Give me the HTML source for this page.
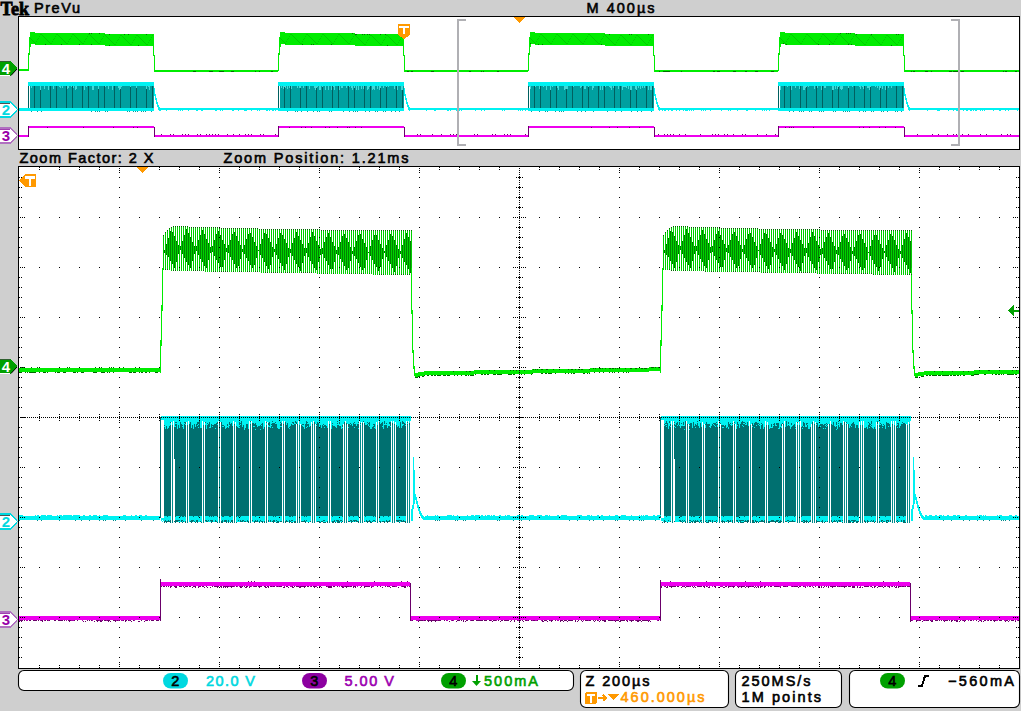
<!DOCTYPE html>
<html><head><meta charset="utf-8"><style>
html,body{margin:0;padding:0;background:#cfcfcf;width:1021px;height:711px;overflow:hidden}
svg{display:block}
</style></head><body>
<svg width="1021" height="711" viewBox="0 0 1021 711" shape-rendering="crispEdges">
<rect x="18" y="16" width="1002" height="134" fill="#000"/>
<rect x="19" y="17" width="1000" height="132" fill="#fff"/>
<rect x="18" y="166" width="1002" height="503" fill="#000"/>
<rect x="19" y="167" width="1000" height="501" fill="#fff"/>
<path d="M164 250h1v3h-1zM166 244h1v11h-1zM168 238h1v19h-1zM170 231h1v30h-1zM172 232h1v32h-1zM174 236h1v32h-1zM176 241h1v21h-1zM178 245h1v9h-1zM180 246h1v4h-1zM182 241h1v13h-1zM184 235h1v23h-1zM186 229h1v33h-1zM188 233h1v32h-1zM190 237h1v31h-1zM192 242h1v19h-1zM194 246h1v8h-1zM196 246h1v5h-1zM198 240h1v15h-1zM200 235h1v24h-1zM202 230h1v32h-1zM204 234h1v32h-1zM206 239h1v29h-1zM208 243h1v17h-1zM210 247h1v6h-1zM212 246h1v6h-1zM214 240h1v16h-1zM216 234h1v26h-1zM218 231h1v32h-1zM220 235h1v32h-1zM222 240h1v27h-1zM224 244h1v16h-1zM226 248h1v4h-1zM228 245h1v8h-1zM230 240h1v17h-1zM232 234h1v26h-1zM234 232h1v32h-1zM236 236h1v32h-1zM238 241h1v25h-1zM240 245h1v14h-1zM242 249h1v3h-1zM244 245h1v9h-1zM246 239h1v19h-1zM248 234h1v27h-1zM250 233h1v32h-1zM252 237h1v31h-1zM254 242h1v23h-1zM256 246h1v12h-1zM258 250h1v1h-1zM260 244h1v11h-1zM262 239h1v19h-1zM264 233h1v29h-1zM266 234h1v32h-1zM268 238h1v31h-1zM270 242h1v23h-1zM272 247h1v10h-1zM274 249h1v3h-1zM276 244h1v11h-1zM278 238h1v21h-1zM280 233h1v30h-1zM282 235h1v31h-1zM284 239h1v31h-1zM286 243h1v21h-1zM288 248h1v9h-1zM290 249h1v4h-1zM292 243h1v13h-1zM294 238h1v22h-1zM296 232h1v32h-1zM298 236h1v31h-1zM300 240h1v31h-1zM302 244h1v19h-1zM304 248h1v8h-1zM306 248h1v5h-1zM308 243h1v14h-1zM310 237h1v24h-1zM312 232h1v32h-1zM314 236h1v32h-1zM316 241h1v29h-1zM318 245h1v17h-1zM320 249h1v6h-1zM322 248h1v6h-1zM324 242h1v16h-1zM326 237h1v24h-1zM328 233h1v32h-1zM330 237h1v32h-1zM332 242h1v27h-1zM334 246h1v16h-1zM336 250h1v4h-1zM338 247h1v8h-1zM340 242h1v17h-1zM342 236h1v26h-1zM344 234h1v32h-1zM346 238h1v32h-1zM348 242h1v26h-1zM350 247h1v14h-1zM352 251h1v3h-1zM354 247h1v9h-1zM356 241h1v18h-1zM358 235h1v28h-1zM360 234h1v33h-1zM362 239h1v31h-1zM364 243h1v25h-1zM366 247h1v13h-1zM368 252h1v1h-1zM370 246h1v10h-1zM372 240h1v20h-1zM374 235h1v29h-1zM376 235h1v32h-1zM378 240h1v31h-1zM380 244h1v23h-1zM382 248h1v11h-1zM384 251h1v2h-1zM386 245h1v12h-1zM388 240h1v21h-1zM390 234h1v30h-1zM392 236h1v32h-1zM394 240h1v32h-1zM396 245h1v21h-1zM398 249h1v9h-1zM400 251h1v3h-1zM402 245h1v13h-1zM404 239h1v23h-1zM406 233h1v32h-1zM408 237h1v32h-1zM410 241h1v32h-1zM664 250h1v3h-1zM666 244h1v11h-1zM668 238h1v19h-1zM670 231h1v30h-1zM672 232h1v32h-1zM674 236h1v32h-1zM676 241h1v21h-1zM678 245h1v9h-1zM680 246h1v4h-1zM682 241h1v13h-1zM684 235h1v23h-1zM686 229h1v33h-1zM688 233h1v32h-1zM690 237h1v31h-1zM692 242h1v19h-1zM694 246h1v8h-1zM696 246h1v5h-1zM698 240h1v15h-1zM700 235h1v24h-1zM702 230h1v32h-1zM704 234h1v32h-1zM706 239h1v29h-1zM708 243h1v17h-1zM710 247h1v6h-1zM712 246h1v6h-1zM714 240h1v16h-1zM716 234h1v26h-1zM718 231h1v32h-1zM720 235h1v32h-1zM722 240h1v27h-1zM724 244h1v16h-1zM726 248h1v4h-1zM728 245h1v8h-1zM730 240h1v17h-1zM732 234h1v26h-1zM734 232h1v32h-1zM736 236h1v32h-1zM738 241h1v25h-1zM740 245h1v14h-1zM742 249h1v3h-1zM744 245h1v9h-1zM746 239h1v19h-1zM748 234h1v27h-1zM750 233h1v32h-1zM752 237h1v31h-1zM754 242h1v23h-1zM756 246h1v12h-1zM758 250h1v1h-1zM760 244h1v11h-1zM762 239h1v19h-1zM764 233h1v29h-1zM766 234h1v32h-1zM768 238h1v31h-1zM770 242h1v23h-1zM772 247h1v10h-1zM774 249h1v3h-1zM776 244h1v11h-1zM778 238h1v21h-1zM780 233h1v30h-1zM782 235h1v31h-1zM784 239h1v31h-1zM786 243h1v21h-1zM788 248h1v9h-1zM790 249h1v4h-1zM792 243h1v13h-1zM794 238h1v22h-1zM796 232h1v32h-1zM798 236h1v31h-1zM800 240h1v31h-1zM802 244h1v19h-1zM804 248h1v8h-1zM806 248h1v5h-1zM808 243h1v14h-1zM810 237h1v24h-1zM812 232h1v32h-1zM814 236h1v32h-1zM816 241h1v29h-1zM818 245h1v17h-1zM820 249h1v6h-1zM822 248h1v6h-1zM824 242h1v16h-1zM826 237h1v24h-1zM828 233h1v32h-1zM830 237h1v32h-1zM832 242h1v27h-1zM834 246h1v16h-1zM836 250h1v4h-1zM838 247h1v8h-1zM840 242h1v17h-1zM842 236h1v26h-1zM844 234h1v32h-1zM846 238h1v32h-1zM848 242h1v26h-1zM850 247h1v14h-1zM852 251h1v3h-1zM854 247h1v9h-1zM856 241h1v18h-1zM858 235h1v28h-1zM860 234h1v33h-1zM862 239h1v31h-1zM864 243h1v25h-1zM866 247h1v13h-1zM868 252h1v1h-1zM870 246h1v10h-1zM872 240h1v20h-1zM874 235h1v29h-1zM876 235h1v32h-1zM878 240h1v31h-1zM880 244h1v23h-1zM882 248h1v11h-1zM884 251h1v2h-1zM886 245h1v12h-1zM888 240h1v21h-1zM890 234h1v30h-1zM892 236h1v32h-1zM894 240h1v32h-1zM896 245h1v21h-1zM898 249h1v9h-1zM900 251h1v3h-1zM902 245h1v13h-1zM904 239h1v23h-1zM906 233h1v32h-1zM908 237h1v32h-1zM910 241h1v32h-1z" fill="#008400"/>
<path d="M163 235h1v35h-1zM165 232h1v38h-1zM167 230h1v40h-1zM169 228h1v42h-1zM171 227h1v44h-1zM173 226h1v45h-1zM175 226h1v45h-1zM177 226h1v45h-1zM179 226h1v45h-1zM181 226h1v45h-1zM183 226h1v45h-1zM185 226h1v45h-1zM187 226h1v45h-1zM189 227h1v44h-1zM191 227h1v44h-1zM193 227h1v44h-1zM195 227h1v44h-1zM197 227h1v44h-1zM199 227h1v44h-1zM201 227h1v44h-1zM203 227h1v44h-1zM205 227h1v45h-1zM207 227h1v45h-1zM209 227h1v45h-1zM211 227h1v45h-1zM213 227h1v45h-1zM215 227h1v45h-1zM217 227h1v45h-1zM219 228h1v44h-1zM221 228h1v44h-1zM223 228h1v44h-1zM225 228h1v44h-1zM227 228h1v44h-1zM229 228h1v44h-1zM231 228h1v44h-1zM233 228h1v44h-1zM235 228h1v44h-1zM237 228h1v44h-1zM239 228h1v44h-1zM241 228h1v44h-1zM243 228h1v44h-1zM245 228h1v44h-1zM247 228h1v44h-1zM249 228h1v44h-1zM251 228h1v44h-1zM253 228h1v44h-1zM255 228h1v44h-1zM257 228h1v44h-1zM259 229h1v43h-1zM261 229h1v44h-1zM263 229h1v44h-1zM265 229h1v44h-1zM267 229h1v44h-1zM269 229h1v44h-1zM271 229h1v44h-1zM273 229h1v44h-1zM275 229h1v44h-1zM277 229h1v44h-1zM279 229h1v44h-1zM281 229h1v44h-1zM283 229h1v44h-1zM285 229h1v44h-1zM287 229h1v44h-1zM289 229h1v44h-1zM291 229h1v44h-1zM293 229h1v44h-1zM295 229h1v44h-1zM297 229h1v44h-1zM299 229h1v44h-1zM301 229h1v44h-1zM303 229h1v44h-1zM305 229h1v44h-1zM307 229h1v44h-1zM309 229h1v44h-1zM311 229h1v44h-1zM313 229h1v44h-1zM315 229h1v44h-1zM317 229h1v45h-1zM319 229h1v45h-1zM321 230h1v44h-1zM323 230h1v44h-1zM325 230h1v44h-1zM327 230h1v44h-1zM329 230h1v44h-1zM331 230h1v44h-1zM333 230h1v44h-1zM335 230h1v44h-1zM337 230h1v44h-1zM339 230h1v44h-1zM341 230h1v44h-1zM343 230h1v44h-1zM345 230h1v44h-1zM347 230h1v44h-1zM349 230h1v44h-1zM351 230h1v44h-1zM353 230h1v44h-1zM355 230h1v44h-1zM357 230h1v44h-1zM359 230h1v44h-1zM361 230h1v44h-1zM363 230h1v44h-1zM365 230h1v44h-1zM367 230h1v44h-1zM369 230h1v44h-1zM371 230h1v44h-1zM373 230h1v45h-1zM375 230h1v45h-1zM377 230h1v45h-1zM379 230h1v45h-1zM381 230h1v45h-1zM383 230h1v45h-1zM385 230h1v45h-1zM387 230h1v45h-1zM389 230h1v45h-1zM391 230h1v45h-1zM393 230h1v45h-1zM395 230h1v45h-1zM397 230h1v45h-1zM399 230h1v45h-1zM401 230h1v45h-1zM403 230h1v45h-1zM405 230h1v45h-1zM407 230h1v45h-1zM409 230h1v45h-1zM411 230h1v45h-1zM663 235h1v35h-1zM665 232h1v38h-1zM667 230h1v40h-1zM669 228h1v42h-1zM671 227h1v44h-1zM673 226h1v45h-1zM675 226h1v45h-1zM677 226h1v45h-1zM679 226h1v45h-1zM681 226h1v45h-1zM683 226h1v45h-1zM685 226h1v45h-1zM687 226h1v45h-1zM689 227h1v44h-1zM691 227h1v44h-1zM693 227h1v44h-1zM695 227h1v44h-1zM697 227h1v44h-1zM699 227h1v44h-1zM701 227h1v44h-1zM703 227h1v44h-1zM705 227h1v45h-1zM707 227h1v45h-1zM709 227h1v45h-1zM711 227h1v45h-1zM713 227h1v45h-1zM715 227h1v45h-1zM717 227h1v45h-1zM719 228h1v44h-1zM721 228h1v44h-1zM723 228h1v44h-1zM725 228h1v44h-1zM727 228h1v44h-1zM729 228h1v44h-1zM731 228h1v44h-1zM733 228h1v44h-1zM735 228h1v44h-1zM737 228h1v44h-1zM739 228h1v44h-1zM741 228h1v44h-1zM743 228h1v44h-1zM745 228h1v44h-1zM747 228h1v44h-1zM749 228h1v44h-1zM751 228h1v44h-1zM753 228h1v44h-1zM755 228h1v44h-1zM757 228h1v44h-1zM759 229h1v43h-1zM761 229h1v44h-1zM763 229h1v44h-1zM765 229h1v44h-1zM767 229h1v44h-1zM769 229h1v44h-1zM771 229h1v44h-1zM773 229h1v44h-1zM775 229h1v44h-1zM777 229h1v44h-1zM779 229h1v44h-1zM781 229h1v44h-1zM783 229h1v44h-1zM785 229h1v44h-1zM787 229h1v44h-1zM789 229h1v44h-1zM791 229h1v44h-1zM793 229h1v44h-1zM795 229h1v44h-1zM797 229h1v44h-1zM799 229h1v44h-1zM801 229h1v44h-1zM803 229h1v44h-1zM805 229h1v44h-1zM807 229h1v44h-1zM809 229h1v44h-1zM811 229h1v44h-1zM813 229h1v44h-1zM815 229h1v44h-1zM817 229h1v45h-1zM819 229h1v45h-1zM821 230h1v44h-1zM823 230h1v44h-1zM825 230h1v44h-1zM827 230h1v44h-1zM829 230h1v44h-1zM831 230h1v44h-1zM833 230h1v44h-1zM835 230h1v44h-1zM837 230h1v44h-1zM839 230h1v44h-1zM841 230h1v44h-1zM843 230h1v44h-1zM845 230h1v44h-1zM847 230h1v44h-1zM849 230h1v44h-1zM851 230h1v44h-1zM853 230h1v44h-1zM855 230h1v44h-1zM857 230h1v44h-1zM859 230h1v44h-1zM861 230h1v44h-1zM863 230h1v44h-1zM865 230h1v44h-1zM867 230h1v44h-1zM869 230h1v44h-1zM871 230h1v44h-1zM873 230h1v45h-1zM875 230h1v45h-1zM877 230h1v45h-1zM879 230h1v45h-1zM881 230h1v45h-1zM883 230h1v45h-1zM885 230h1v45h-1zM887 230h1v45h-1zM889 230h1v45h-1zM891 230h1v45h-1zM893 230h1v45h-1zM895 230h1v45h-1zM897 230h1v45h-1zM899 230h1v45h-1zM901 230h1v45h-1zM903 230h1v45h-1zM905 230h1v45h-1zM907 230h1v45h-1zM909 230h1v45h-1zM911 230h1v45h-1z" fill="#00d000"/>
<path d="M19 368h141v4h-141zM415 373h1v4h-1zM416 373h1v4h-1zM417 373h1v4h-1zM418 372h1v4h-1zM419 372h1v4h-1zM420 372h1v4h-1zM421 372h1v4h-1zM422 372h1v4h-1zM423 372h1v4h-1zM424 371h1v4h-1zM425 371h1v4h-1zM426 371h1v4h-1zM427 371h1v4h-1zM428 371h1v4h-1zM429 371h1v4h-1zM430 371h1v4h-1zM431 371h1v4h-1zM432 371h1v4h-1zM433 371h1v4h-1zM434 371h1v4h-1zM435 371h1v4h-1zM436 371h1v4h-1zM437 371h1v4h-1zM438 371h1v4h-1zM439 371h1v4h-1zM440 371h1v4h-1zM441 371h1v4h-1zM442 371h1v4h-1zM443 371h1v4h-1zM444 371h1v4h-1zM445 371h1v4h-1zM446 371h1v4h-1zM447 371h1v4h-1zM448 371h1v4h-1zM449 371h1v4h-1zM450 371h1v4h-1zM451 371h1v4h-1zM452 371h1v4h-1zM453 371h1v4h-1zM454 371h1v4h-1zM455 371h1v4h-1zM456 371h1v4h-1zM457 371h1v4h-1zM458 371h1v4h-1zM459 371h1v4h-1zM460 371h1v4h-1zM461 371h1v4h-1zM462 371h1v4h-1zM463 371h1v4h-1zM464 371h1v4h-1zM465 371h1v4h-1zM466 371h1v4h-1zM467 371h1v4h-1zM468 371h1v4h-1zM469 371h1v4h-1zM470 371h1v4h-1zM471 371h1v4h-1zM472 371h1v4h-1zM473 371h1v4h-1zM474 370h1v4h-1zM475 370h1v4h-1zM476 370h1v4h-1zM477 370h1v4h-1zM478 370h1v4h-1zM479 370h1v4h-1zM480 370h1v4h-1zM481 370h1v4h-1zM482 370h1v4h-1zM483 370h1v4h-1zM484 370h1v4h-1zM485 370h1v4h-1zM486 370h1v4h-1zM487 370h1v4h-1zM488 370h1v4h-1zM489 370h1v4h-1zM490 370h1v4h-1zM491 370h1v4h-1zM492 370h1v4h-1zM493 370h1v4h-1zM494 370h1v4h-1zM495 370h1v4h-1zM496 370h1v4h-1zM497 370h1v4h-1zM498 370h1v4h-1zM499 370h1v4h-1zM500 370h1v4h-1zM501 370h1v4h-1zM502 370h1v4h-1zM503 370h1v4h-1zM504 370h1v4h-1zM505 370h1v4h-1zM506 370h1v4h-1zM507 370h1v4h-1zM508 370h1v4h-1zM509 370h1v4h-1zM510 370h1v4h-1zM511 370h1v4h-1zM512 370h1v4h-1zM513 370h1v4h-1zM514 370h1v4h-1zM515 370h1v4h-1zM516 370h1v4h-1zM517 370h1v4h-1zM518 370h1v4h-1zM519 370h1v4h-1zM520 370h1v4h-1zM521 370h1v4h-1zM522 370h1v4h-1zM523 370h1v4h-1zM524 370h1v4h-1zM525 370h1v4h-1zM526 370h1v4h-1zM527 370h1v4h-1zM528 370h1v4h-1zM529 370h1v4h-1zM530 370h1v4h-1zM531 370h1v4h-1zM532 369h1v4h-1zM533 369h1v4h-1zM534 369h1v4h-1zM535 369h1v4h-1zM536 369h1v4h-1zM537 369h1v4h-1zM538 369h1v4h-1zM539 369h1v4h-1zM540 369h1v4h-1zM541 369h1v4h-1zM542 369h1v4h-1zM543 369h1v4h-1zM544 369h1v4h-1zM545 369h1v4h-1zM546 369h1v4h-1zM547 369h1v4h-1zM548 369h1v4h-1zM549 369h1v4h-1zM550 369h1v4h-1zM551 369h1v4h-1zM552 369h1v4h-1zM553 369h1v4h-1zM554 369h1v4h-1zM555 369h1v4h-1zM556 369h1v4h-1zM557 369h1v4h-1zM558 369h1v4h-1zM559 369h1v4h-1zM560 369h1v4h-1zM561 369h1v4h-1zM562 369h1v4h-1zM563 369h1v4h-1zM564 369h1v4h-1zM565 369h1v4h-1zM566 369h1v4h-1zM567 369h1v4h-1zM568 369h1v4h-1zM569 369h1v4h-1zM570 369h1v4h-1zM571 369h1v4h-1zM572 369h1v4h-1zM573 369h1v4h-1zM574 369h1v4h-1zM575 369h1v4h-1zM576 369h1v4h-1zM577 369h1v4h-1zM578 369h1v4h-1zM579 369h1v4h-1zM580 369h1v4h-1zM581 369h1v4h-1zM582 369h1v4h-1zM583 369h1v4h-1zM584 369h1v4h-1zM585 369h1v4h-1zM586 369h1v4h-1zM587 369h1v4h-1zM588 369h1v4h-1zM589 369h1v4h-1zM590 368h1v4h-1zM591 368h1v4h-1zM592 368h1v4h-1zM593 368h1v4h-1zM594 368h1v4h-1zM595 368h1v4h-1zM596 368h1v4h-1zM597 368h1v4h-1zM598 368h1v4h-1zM599 368h1v4h-1zM600 368h1v4h-1zM601 368h1v4h-1zM602 368h1v4h-1zM603 368h1v4h-1zM604 368h1v4h-1zM605 368h1v4h-1zM606 368h1v4h-1zM607 368h1v4h-1zM608 368h1v4h-1zM609 368h1v4h-1zM610 368h1v4h-1zM611 368h1v4h-1zM612 368h1v4h-1zM613 368h1v4h-1zM614 368h1v4h-1zM615 368h1v4h-1zM616 368h1v4h-1zM617 368h1v4h-1zM618 368h1v4h-1zM619 368h1v4h-1zM620 368h1v4h-1zM621 368h1v4h-1zM622 368h1v4h-1zM623 368h1v4h-1zM624 368h1v4h-1zM625 368h1v4h-1zM626 368h1v4h-1zM627 368h1v4h-1zM628 368h1v4h-1zM629 368h1v4h-1zM630 368h1v4h-1zM631 368h1v4h-1zM632 368h1v4h-1zM633 368h1v4h-1zM634 368h1v4h-1zM635 368h1v4h-1zM636 368h1v4h-1zM637 368h1v4h-1zM638 368h1v4h-1zM639 368h1v4h-1zM640 368h1v4h-1zM641 368h1v4h-1zM642 368h1v4h-1zM643 368h1v4h-1zM644 368h1v4h-1zM645 368h1v4h-1zM646 368h1v4h-1zM647 368h1v4h-1zM648 368h1v4h-1zM649 367h1v4h-1zM650 367h1v4h-1zM651 367h1v4h-1zM652 367h1v4h-1zM653 367h1v4h-1zM654 367h1v4h-1zM655 367h1v4h-1zM656 367h1v4h-1zM657 367h1v4h-1zM658 367h1v4h-1zM659 367h1v4h-1zM414 368h1v8h-1zM915 373h1v4h-1zM916 373h1v4h-1zM917 373h1v4h-1zM918 372h1v4h-1zM919 372h1v4h-1zM920 372h1v4h-1zM921 372h1v4h-1zM922 372h1v4h-1zM923 372h1v4h-1zM924 371h1v4h-1zM925 371h1v4h-1zM926 371h1v4h-1zM927 371h1v4h-1zM928 371h1v4h-1zM929 371h1v4h-1zM930 371h1v4h-1zM931 371h1v4h-1zM932 371h1v4h-1zM933 371h1v4h-1zM934 371h1v4h-1zM935 371h1v4h-1zM936 371h1v4h-1zM937 371h1v4h-1zM938 371h1v4h-1zM939 371h1v4h-1zM940 371h1v4h-1zM941 371h1v4h-1zM942 371h1v4h-1zM943 371h1v4h-1zM944 371h1v4h-1zM945 371h1v4h-1zM946 371h1v4h-1zM947 371h1v4h-1zM948 371h1v4h-1zM949 371h1v4h-1zM950 371h1v4h-1zM951 371h1v4h-1zM952 371h1v4h-1zM953 371h1v4h-1zM954 371h1v4h-1zM955 371h1v4h-1zM956 371h1v4h-1zM957 371h1v4h-1zM958 371h1v4h-1zM959 371h1v4h-1zM960 371h1v4h-1zM961 371h1v4h-1zM962 371h1v4h-1zM963 371h1v4h-1zM964 371h1v4h-1zM965 371h1v4h-1zM966 371h1v4h-1zM967 371h1v4h-1zM968 371h1v4h-1zM969 371h1v4h-1zM970 371h1v4h-1zM971 371h1v4h-1zM972 371h1v4h-1zM973 371h1v4h-1zM974 370h1v4h-1zM975 370h1v4h-1zM976 370h1v4h-1zM977 370h1v4h-1zM978 370h1v4h-1zM979 370h1v4h-1zM980 370h1v4h-1zM981 370h1v4h-1zM982 370h1v4h-1zM983 370h1v4h-1zM984 370h1v4h-1zM985 370h1v4h-1zM986 370h1v4h-1zM987 370h1v4h-1zM988 370h1v4h-1zM989 370h1v4h-1zM990 370h1v4h-1zM991 370h1v4h-1zM992 370h1v4h-1zM993 370h1v4h-1zM994 370h1v4h-1zM995 370h1v4h-1zM996 370h1v4h-1zM997 370h1v4h-1zM998 370h1v4h-1zM999 370h1v4h-1zM1000 370h1v4h-1zM1001 370h1v4h-1zM1002 370h1v4h-1zM1003 370h1v4h-1zM1004 370h1v4h-1zM1005 370h1v4h-1zM1006 370h1v4h-1zM1007 370h1v4h-1zM1008 370h1v4h-1zM1009 370h1v4h-1zM1010 370h1v4h-1zM1011 370h1v4h-1zM1012 370h1v4h-1zM1013 370h1v4h-1zM1014 370h1v4h-1zM1015 370h1v4h-1zM1016 370h1v4h-1zM1017 370h1v4h-1zM1018 370h1v4h-1zM914 368h1v8h-1zM160 340h1v33h-1zM161 305h1v41h-1zM162 268h1v43h-1zM411 268h1v46h-1zM412 310h1v43h-1zM413 350h1v19h-1zM414 366h1v8h-1zM660 340h1v33h-1zM661 305h1v41h-1zM662 268h1v43h-1zM911 268h1v46h-1zM912 310h1v43h-1zM913 350h1v19h-1zM914 366h1v8h-1z" fill="#00ec00"/>
<path d="M19 372h3v1h-3zM21 367h1v1h-1zM23 367h1v1h-1zM25 372h1v1h-1zM27 372h1v1h-1zM29 372h3v1h-3zM31 367h1v1h-1zM31 372h3v1h-3zM33 372h3v1h-3zM37 367h1v1h-1zM39 367h1v1h-1zM39 372h1v1h-1zM43 372h3v1h-3zM47 372h1v1h-1zM55 372h1v1h-1zM57 372h3v1h-3zM63 372h3v1h-3zM67 367h1v1h-1zM69 367h1v1h-1zM73 372h3v1h-3zM77 372h1v1h-1zM81 372h3v1h-3zM93 372h2v1h-2zM95 367h1v1h-1zM95 372h2v1h-2zM99 367h1v1h-1zM101 367h1v1h-1zM101 372h2v1h-2zM103 372h2v1h-2zM107 372h1v1h-1zM109 367h1v1h-1zM109 372h1v1h-1zM111 367h1v1h-1zM113 367h1v1h-1zM113 372h1v1h-1zM123 367h1v1h-1zM129 372h3v1h-3zM131 372h1v1h-1zM133 372h3v1h-3zM135 367h1v1h-1zM135 372h1v1h-1zM139 372h1v1h-1zM141 372h2v1h-2zM145 372h2v1h-2zM149 372h1v1h-1zM155 372h3v1h-3zM415 377h1v1h-1zM416 377h1v1h-1zM417 377h1v1h-1zM418 376h1v1h-1zM419 376h1v1h-1zM422 376h1v1h-1zM423 376h1v1h-1zM424 375h1v1h-1zM427 375h1v1h-1zM428 375h1v1h-1zM431 375h1v1h-1zM432 375h1v1h-1zM434 375h1v1h-1zM435 375h1v1h-1zM437 375h1v1h-1zM438 375h1v1h-1zM439 375h1v1h-1zM440 375h1v1h-1zM443 375h1v1h-1zM444 375h1v1h-1zM445 375h1v1h-1zM447 375h1v1h-1zM448 375h1v1h-1zM449 375h1v1h-1zM453 371h1v1h-1zM454 375h1v1h-1zM457 375h1v1h-1zM461 375h1v1h-1zM465 375h1v1h-1zM466 375h1v1h-1zM466 371h1v1h-1zM468 375h1v1h-1zM469 371h1v1h-1zM470 375h1v1h-1zM470 371h1v1h-1zM471 375h1v1h-1zM472 375h1v1h-1zM473 375h1v1h-1zM475 374h1v1h-1zM481 374h1v1h-1zM482 374h1v1h-1zM484 374h1v1h-1zM485 374h1v1h-1zM487 374h1v1h-1zM488 374h1v1h-1zM489 370h1v1h-1zM493 374h1v1h-1zM494 374h1v1h-1zM494 370h1v1h-1zM495 374h1v1h-1zM497 374h1v1h-1zM498 374h1v1h-1zM499 374h1v1h-1zM500 374h1v1h-1zM501 374h1v1h-1zM508 374h1v1h-1zM509 374h1v1h-1zM510 374h1v1h-1zM510 370h1v1h-1zM511 374h1v1h-1zM513 374h1v1h-1zM513 370h1v1h-1zM514 374h1v1h-1zM516 370h1v1h-1zM519 374h1v1h-1zM521 374h1v1h-1zM524 374h1v1h-1zM524 370h1v1h-1zM531 374h1v1h-1zM532 373h1v1h-1zM533 369h1v1h-1zM535 369h1v1h-1zM537 369h1v1h-1zM541 373h1v1h-1zM541 369h1v1h-1zM542 373h1v1h-1zM542 369h1v1h-1zM545 373h1v1h-1zM546 373h1v1h-1zM546 369h1v1h-1zM547 369h1v1h-1zM548 373h1v1h-1zM549 373h1v1h-1zM550 373h1v1h-1zM551 373h1v1h-1zM553 369h1v1h-1zM555 373h1v1h-1zM559 369h1v1h-1zM565 373h1v1h-1zM568 373h1v1h-1zM568 369h1v1h-1zM571 373h1v1h-1zM571 369h1v1h-1zM572 369h1v1h-1zM573 373h1v1h-1zM574 373h1v1h-1zM575 369h1v1h-1zM578 369h1v1h-1zM579 369h1v1h-1zM581 369h1v1h-1zM582 369h1v1h-1zM583 373h1v1h-1zM584 373h1v1h-1zM587 373h1v1h-1zM589 373h1v1h-1zM589 369h1v1h-1zM593 368h1v1h-1zM594 372h1v1h-1zM595 368h1v1h-1zM599 372h1v1h-1zM599 368h1v1h-1zM600 368h1v1h-1zM602 368h1v1h-1zM603 372h1v1h-1zM605 368h1v1h-1zM609 372h1v1h-1zM609 368h1v1h-1zM610 368h1v1h-1zM612 372h1v1h-1zM612 368h1v1h-1zM613 368h1v1h-1zM614 372h1v1h-1zM615 368h1v1h-1zM617 368h1v1h-1zM618 372h1v1h-1zM619 368h1v1h-1zM623 372h1v1h-1zM625 368h1v1h-1zM626 372h1v1h-1zM628 372h1v1h-1zM630 368h1v1h-1zM631 368h1v1h-1zM635 368h1v1h-1zM636 368h1v1h-1zM641 368h1v1h-1zM642 368h1v1h-1zM644 368h1v1h-1zM645 368h1v1h-1zM646 368h1v1h-1zM651 367h1v1h-1zM652 367h1v1h-1zM653 367h1v1h-1zM655 367h1v1h-1zM658 367h1v1h-1zM915 377h1v1h-1zM916 377h1v1h-1zM917 377h1v1h-1zM921 376h1v1h-1zM922 376h1v1h-1zM923 376h1v1h-1zM926 375h1v1h-1zM927 375h1v1h-1zM929 375h1v1h-1zM930 375h1v1h-1zM932 375h1v1h-1zM933 375h1v1h-1zM934 375h1v1h-1zM934 371h1v1h-1zM935 375h1v1h-1zM936 375h1v1h-1zM938 375h1v1h-1zM939 375h1v1h-1zM940 375h1v1h-1zM942 375h1v1h-1zM942 371h1v1h-1zM943 375h1v1h-1zM944 375h1v1h-1zM945 375h1v1h-1zM946 375h1v1h-1zM947 375h1v1h-1zM948 375h1v1h-1zM950 375h1v1h-1zM951 375h1v1h-1zM952 371h1v1h-1zM953 375h1v1h-1zM954 375h1v1h-1zM955 375h1v1h-1zM957 375h1v1h-1zM958 375h1v1h-1zM960 375h1v1h-1zM963 375h1v1h-1zM963 371h1v1h-1zM964 375h1v1h-1zM968 371h1v1h-1zM971 375h1v1h-1zM972 375h1v1h-1zM973 375h1v1h-1zM974 374h1v1h-1zM975 374h1v1h-1zM976 374h1v1h-1zM977 374h1v1h-1zM978 374h1v1h-1zM979 370h1v1h-1zM984 374h1v1h-1zM985 374h1v1h-1zM988 370h1v1h-1zM989 370h1v1h-1zM992 374h1v1h-1zM995 374h1v1h-1zM996 374h1v1h-1zM998 374h1v1h-1zM999 374h1v1h-1zM999 370h1v1h-1zM1001 374h1v1h-1zM1003 374h1v1h-1zM1007 374h1v1h-1zM1008 374h1v1h-1zM1009 374h1v1h-1zM1010 374h1v1h-1zM1011 374h1v1h-1zM1012 374h1v1h-1zM1012 370h1v1h-1zM1013 374h1v1h-1zM1015 374h1v1h-1zM1016 374h1v1h-1zM1016 370h1v1h-1zM163 235h1v1h-1zM164 250h1v1h-1zM164 252h1v1h-1zM165 232h1v1h-1zM165 269h1v1h-1zM166 244h1v1h-1zM166 254h1v1h-1zM167 230h1v1h-1zM167 269h1v1h-1zM168 238h1v1h-1zM168 256h1v1h-1zM169 228h1v1h-1zM170 231h1v1h-1zM170 260h1v1h-1zM171 227h1v1h-1zM172 232h1v1h-1zM172 263h1v1h-1zM173 226h1v1h-1zM173 270h1v1h-1zM174 236h1v1h-1zM174 267h1v1h-1zM175 226h1v1h-1zM175 270h1v1h-1zM176 241h1v1h-1zM176 261h1v1h-1zM177 226h1v1h-1zM178 245h1v1h-1zM178 253h1v1h-1zM179 226h1v1h-1zM179 270h1v1h-1zM180 246h1v1h-1zM180 249h1v1h-1zM181 226h1v1h-1zM182 241h1v1h-1zM182 253h1v1h-1zM183 226h1v1h-1zM184 235h1v1h-1zM184 257h1v1h-1zM185 226h1v1h-1zM186 229h1v1h-1zM186 261h1v1h-1zM187 226h1v1h-1zM187 270h1v1h-1zM188 233h1v1h-1zM188 264h1v1h-1zM189 227h1v1h-1zM190 237h1v1h-1zM190 267h1v1h-1zM191 227h1v1h-1zM192 242h1v1h-1zM192 260h1v1h-1zM193 227h1v1h-1zM193 270h1v1h-1zM194 246h1v1h-1zM194 253h1v1h-1zM195 227h1v1h-1zM195 270h1v1h-1zM196 246h1v1h-1zM196 250h1v1h-1zM197 227h1v1h-1zM197 270h1v1h-1zM198 240h1v1h-1zM198 254h1v1h-1zM199 227h1v1h-1zM199 270h1v1h-1zM200 235h1v1h-1zM200 258h1v1h-1zM201 227h1v1h-1zM202 230h1v1h-1zM202 261h1v1h-1zM203 227h1v1h-1zM203 270h1v1h-1zM204 234h1v1h-1zM204 265h1v1h-1zM205 227h1v1h-1zM206 239h1v1h-1zM206 267h1v1h-1zM207 227h1v1h-1zM208 243h1v1h-1zM208 259h1v1h-1zM209 227h1v1h-1zM210 247h1v1h-1zM210 252h1v1h-1zM211 227h1v1h-1zM212 246h1v1h-1zM212 251h1v1h-1zM213 227h1v1h-1zM213 271h1v1h-1zM214 240h1v1h-1zM214 255h1v1h-1zM215 227h1v1h-1zM215 271h1v1h-1zM216 234h1v1h-1zM216 259h1v1h-1zM217 227h1v1h-1zM218 231h1v1h-1zM218 262h1v1h-1zM219 228h1v1h-1zM219 271h1v1h-1zM220 235h1v1h-1zM220 266h1v1h-1zM221 228h1v1h-1zM221 271h1v1h-1zM222 240h1v1h-1zM222 266h1v1h-1zM223 228h1v1h-1zM223 271h1v1h-1zM224 244h1v1h-1zM224 259h1v1h-1zM225 228h1v1h-1zM225 271h1v1h-1zM226 248h1v1h-1zM226 251h1v1h-1zM227 228h1v1h-1zM227 271h1v1h-1zM228 245h1v1h-1zM228 252h1v1h-1zM229 228h1v1h-1zM230 240h1v1h-1zM230 256h1v1h-1zM231 228h1v1h-1zM232 234h1v1h-1zM232 259h1v1h-1zM233 228h1v1h-1zM233 271h1v1h-1zM234 232h1v1h-1zM234 263h1v1h-1zM235 228h1v1h-1zM236 236h1v1h-1zM236 267h1v1h-1zM237 228h1v1h-1zM238 241h1v1h-1zM238 265h1v1h-1zM239 228h1v1h-1zM239 271h1v1h-1zM240 245h1v1h-1zM240 258h1v1h-1zM241 228h1v1h-1zM241 271h1v1h-1zM242 249h1v1h-1zM242 251h1v1h-1zM243 228h1v1h-1zM244 245h1v1h-1zM244 253h1v1h-1zM245 228h1v1h-1zM246 239h1v1h-1zM246 257h1v1h-1zM247 228h1v1h-1zM247 271h1v1h-1zM248 234h1v1h-1zM248 260h1v1h-1zM249 228h1v1h-1zM249 271h1v1h-1zM250 233h1v1h-1zM250 264h1v1h-1zM251 228h1v1h-1zM252 237h1v1h-1zM252 267h1v1h-1zM253 228h1v1h-1zM254 242h1v1h-1zM254 264h1v1h-1zM255 228h1v1h-1zM255 271h1v1h-1zM256 246h1v1h-1zM256 257h1v1h-1zM257 228h1v1h-1zM257 271h1v1h-1zM258 250h1v1h-1zM258 250h1v1h-1zM259 229h1v1h-1zM260 244h1v1h-1zM260 254h1v1h-1zM261 229h1v1h-1zM262 239h1v1h-1zM262 257h1v1h-1zM263 229h1v1h-1zM264 233h1v1h-1zM264 261h1v1h-1zM265 229h1v1h-1zM265 272h1v1h-1zM266 234h1v1h-1zM266 265h1v1h-1zM267 229h1v1h-1zM267 272h1v1h-1zM268 238h1v1h-1zM268 268h1v1h-1zM269 229h1v1h-1zM270 242h1v1h-1zM270 264h1v1h-1zM271 229h1v1h-1zM271 272h1v1h-1zM272 247h1v1h-1zM272 256h1v1h-1zM273 229h1v1h-1zM273 272h1v1h-1zM274 249h1v1h-1zM274 251h1v1h-1zM275 229h1v1h-1zM275 272h1v1h-1zM276 244h1v1h-1zM276 254h1v1h-1zM277 229h1v1h-1zM277 272h1v1h-1zM278 238h1v1h-1zM278 258h1v1h-1zM279 229h1v1h-1zM280 233h1v1h-1zM280 262h1v1h-1zM281 229h1v1h-1zM281 272h1v1h-1zM282 235h1v1h-1zM282 265h1v1h-1zM283 229h1v1h-1zM284 239h1v1h-1zM284 269h1v1h-1zM285 229h1v1h-1zM285 272h1v1h-1zM286 243h1v1h-1zM286 263h1v1h-1zM287 229h1v1h-1zM287 272h1v1h-1zM288 248h1v1h-1zM288 256h1v1h-1zM289 229h1v1h-1zM289 272h1v1h-1zM290 249h1v1h-1zM290 252h1v1h-1zM291 229h1v1h-1zM292 243h1v1h-1zM292 255h1v1h-1zM293 229h1v1h-1zM293 272h1v1h-1zM294 238h1v1h-1zM294 259h1v1h-1zM295 229h1v1h-1zM296 232h1v1h-1zM296 263h1v1h-1zM297 229h1v1h-1zM298 236h1v1h-1zM298 266h1v1h-1zM299 229h1v1h-1zM300 240h1v1h-1zM300 270h1v1h-1zM301 229h1v1h-1zM301 272h1v1h-1zM302 244h1v1h-1zM302 262h1v1h-1zM303 229h1v1h-1zM303 272h1v1h-1zM304 248h1v1h-1zM304 255h1v1h-1zM305 229h1v1h-1zM305 272h1v1h-1zM306 248h1v1h-1zM306 252h1v1h-1zM307 229h1v1h-1zM307 272h1v1h-1zM308 243h1v1h-1zM308 256h1v1h-1zM309 229h1v1h-1zM309 272h1v1h-1zM310 237h1v1h-1zM310 260h1v1h-1zM311 229h1v1h-1zM311 272h1v1h-1zM312 232h1v1h-1zM312 263h1v1h-1zM313 229h1v1h-1zM314 236h1v1h-1zM314 267h1v1h-1zM315 229h1v1h-1zM316 241h1v1h-1zM316 269h1v1h-1zM317 229h1v1h-1zM318 245h1v1h-1zM318 261h1v1h-1zM319 229h1v1h-1zM319 273h1v1h-1zM320 249h1v1h-1zM320 254h1v1h-1zM321 230h1v1h-1zM322 248h1v1h-1zM322 253h1v1h-1zM323 230h1v1h-1zM323 273h1v1h-1zM324 242h1v1h-1zM324 257h1v1h-1zM325 230h1v1h-1zM326 237h1v1h-1zM326 260h1v1h-1zM327 230h1v1h-1zM327 273h1v1h-1zM328 233h1v1h-1zM328 264h1v1h-1zM329 230h1v1h-1zM330 237h1v1h-1zM330 268h1v1h-1zM331 230h1v1h-1zM332 242h1v1h-1zM332 268h1v1h-1zM333 230h1v1h-1zM333 273h1v1h-1zM334 246h1v1h-1zM334 261h1v1h-1zM335 230h1v1h-1zM336 250h1v1h-1zM336 253h1v1h-1zM337 230h1v1h-1zM338 247h1v1h-1zM338 254h1v1h-1zM339 230h1v1h-1zM340 242h1v1h-1zM340 258h1v1h-1zM341 230h1v1h-1zM342 236h1v1h-1zM342 261h1v1h-1zM343 230h1v1h-1zM344 234h1v1h-1zM344 265h1v1h-1zM345 230h1v1h-1zM346 238h1v1h-1zM346 269h1v1h-1zM347 230h1v1h-1zM348 242h1v1h-1zM348 267h1v1h-1zM349 230h1v1h-1zM349 273h1v1h-1zM350 247h1v1h-1zM350 260h1v1h-1zM351 230h1v1h-1zM351 273h1v1h-1zM352 251h1v1h-1zM352 253h1v1h-1zM353 230h1v1h-1zM354 247h1v1h-1zM354 255h1v1h-1zM355 230h1v1h-1zM355 273h1v1h-1zM356 241h1v1h-1zM356 258h1v1h-1zM357 230h1v1h-1zM358 235h1v1h-1zM358 262h1v1h-1zM359 230h1v1h-1zM359 273h1v1h-1zM360 234h1v1h-1zM360 266h1v1h-1zM361 230h1v1h-1zM361 273h1v1h-1zM362 239h1v1h-1zM362 269h1v1h-1zM363 230h1v1h-1zM363 273h1v1h-1zM364 243h1v1h-1zM364 267h1v1h-1zM365 230h1v1h-1zM366 247h1v1h-1zM366 259h1v1h-1zM367 230h1v1h-1zM368 252h1v1h-1zM368 252h1v1h-1zM369 230h1v1h-1zM369 273h1v1h-1zM370 246h1v1h-1zM370 255h1v1h-1zM371 230h1v1h-1zM372 240h1v1h-1zM372 259h1v1h-1zM373 230h1v1h-1zM374 235h1v1h-1zM374 263h1v1h-1zM375 230h1v1h-1zM376 235h1v1h-1zM376 266h1v1h-1zM377 230h1v1h-1zM378 240h1v1h-1zM378 270h1v1h-1zM379 230h1v1h-1zM379 274h1v1h-1zM380 244h1v1h-1zM380 266h1v1h-1zM381 230h1v1h-1zM381 274h1v1h-1zM382 248h1v1h-1zM382 258h1v1h-1zM383 230h1v1h-1zM383 274h1v1h-1zM384 251h1v1h-1zM384 252h1v1h-1zM385 230h1v1h-1zM386 245h1v1h-1zM386 256h1v1h-1zM387 230h1v1h-1zM388 240h1v1h-1zM388 260h1v1h-1zM389 230h1v1h-1zM390 234h1v1h-1zM390 263h1v1h-1zM391 230h1v1h-1zM391 274h1v1h-1zM392 236h1v1h-1zM392 267h1v1h-1zM393 230h1v1h-1zM393 274h1v1h-1zM394 240h1v1h-1zM394 271h1v1h-1zM395 230h1v1h-1zM395 274h1v1h-1zM396 245h1v1h-1zM396 265h1v1h-1zM397 230h1v1h-1zM397 274h1v1h-1zM398 249h1v1h-1zM398 257h1v1h-1zM399 230h1v1h-1zM400 251h1v1h-1zM400 253h1v1h-1zM401 230h1v1h-1zM401 274h1v1h-1zM402 245h1v1h-1zM402 257h1v1h-1zM403 230h1v1h-1zM403 274h1v1h-1zM404 239h1v1h-1zM404 261h1v1h-1zM405 230h1v1h-1zM406 233h1v1h-1zM406 264h1v1h-1zM407 230h1v1h-1zM407 274h1v1h-1zM408 237h1v1h-1zM408 268h1v1h-1zM409 230h1v1h-1zM409 274h1v1h-1zM410 241h1v1h-1zM410 272h1v1h-1zM411 230h1v1h-1zM663 235h1v1h-1zM664 250h1v1h-1zM664 252h1v1h-1zM665 232h1v1h-1zM666 244h1v1h-1zM666 254h1v1h-1zM667 230h1v1h-1zM668 238h1v1h-1zM668 256h1v1h-1zM669 228h1v1h-1zM669 269h1v1h-1zM670 231h1v1h-1zM670 260h1v1h-1zM671 227h1v1h-1zM671 270h1v1h-1zM672 232h1v1h-1zM672 263h1v1h-1zM673 226h1v1h-1zM673 270h1v1h-1zM674 236h1v1h-1zM674 267h1v1h-1zM675 226h1v1h-1zM675 270h1v1h-1zM676 241h1v1h-1zM676 261h1v1h-1zM677 226h1v1h-1zM678 245h1v1h-1zM678 253h1v1h-1zM679 226h1v1h-1zM680 246h1v1h-1zM680 249h1v1h-1zM681 226h1v1h-1zM682 241h1v1h-1zM682 253h1v1h-1zM683 226h1v1h-1zM683 270h1v1h-1zM684 235h1v1h-1zM684 257h1v1h-1zM685 226h1v1h-1zM685 270h1v1h-1zM686 229h1v1h-1zM686 261h1v1h-1zM687 226h1v1h-1zM688 233h1v1h-1zM688 264h1v1h-1zM689 227h1v1h-1zM689 270h1v1h-1zM690 237h1v1h-1zM690 267h1v1h-1zM691 227h1v1h-1zM692 242h1v1h-1zM692 260h1v1h-1zM693 227h1v1h-1zM693 270h1v1h-1zM694 246h1v1h-1zM694 253h1v1h-1zM695 227h1v1h-1zM696 246h1v1h-1zM696 250h1v1h-1zM697 227h1v1h-1zM698 240h1v1h-1zM698 254h1v1h-1zM699 227h1v1h-1zM700 235h1v1h-1zM700 258h1v1h-1zM701 227h1v1h-1zM702 230h1v1h-1zM702 261h1v1h-1zM703 227h1v1h-1zM703 270h1v1h-1zM704 234h1v1h-1zM704 265h1v1h-1zM705 227h1v1h-1zM705 271h1v1h-1zM706 239h1v1h-1zM706 267h1v1h-1zM707 227h1v1h-1zM708 243h1v1h-1zM708 259h1v1h-1zM709 227h1v1h-1zM710 247h1v1h-1zM710 252h1v1h-1zM711 227h1v1h-1zM711 271h1v1h-1zM712 246h1v1h-1zM712 251h1v1h-1zM713 227h1v1h-1zM713 271h1v1h-1zM714 240h1v1h-1zM714 255h1v1h-1zM715 227h1v1h-1zM716 234h1v1h-1zM716 259h1v1h-1zM717 227h1v1h-1zM717 271h1v1h-1zM718 231h1v1h-1zM718 262h1v1h-1zM719 228h1v1h-1zM720 235h1v1h-1zM720 266h1v1h-1zM721 228h1v1h-1zM722 240h1v1h-1zM722 266h1v1h-1zM723 228h1v1h-1zM724 244h1v1h-1zM724 259h1v1h-1zM725 228h1v1h-1zM726 248h1v1h-1zM726 251h1v1h-1zM727 228h1v1h-1zM727 271h1v1h-1zM728 245h1v1h-1zM728 252h1v1h-1zM729 228h1v1h-1zM730 240h1v1h-1zM730 256h1v1h-1zM731 228h1v1h-1zM732 234h1v1h-1zM732 259h1v1h-1zM733 228h1v1h-1zM733 271h1v1h-1zM734 232h1v1h-1zM734 263h1v1h-1zM735 228h1v1h-1zM735 271h1v1h-1zM736 236h1v1h-1zM736 267h1v1h-1zM737 228h1v1h-1zM738 241h1v1h-1zM738 265h1v1h-1zM739 228h1v1h-1zM740 245h1v1h-1zM740 258h1v1h-1zM741 228h1v1h-1zM741 271h1v1h-1zM742 249h1v1h-1zM742 251h1v1h-1zM743 228h1v1h-1zM743 271h1v1h-1zM744 245h1v1h-1zM744 253h1v1h-1zM745 228h1v1h-1zM746 239h1v1h-1zM746 257h1v1h-1zM747 228h1v1h-1zM747 271h1v1h-1zM748 234h1v1h-1zM748 260h1v1h-1zM749 228h1v1h-1zM750 233h1v1h-1zM750 264h1v1h-1zM751 228h1v1h-1zM752 237h1v1h-1zM752 267h1v1h-1zM753 228h1v1h-1zM753 271h1v1h-1zM754 242h1v1h-1zM754 264h1v1h-1zM755 228h1v1h-1zM755 271h1v1h-1zM756 246h1v1h-1zM756 257h1v1h-1zM757 228h1v1h-1zM757 271h1v1h-1zM758 250h1v1h-1zM758 250h1v1h-1zM759 229h1v1h-1zM759 271h1v1h-1zM760 244h1v1h-1zM760 254h1v1h-1zM761 229h1v1h-1zM762 239h1v1h-1zM762 257h1v1h-1zM763 229h1v1h-1zM763 272h1v1h-1zM764 233h1v1h-1zM764 261h1v1h-1zM765 229h1v1h-1zM765 272h1v1h-1zM766 234h1v1h-1zM766 265h1v1h-1zM767 229h1v1h-1zM767 272h1v1h-1zM768 238h1v1h-1zM768 268h1v1h-1zM769 229h1v1h-1zM770 242h1v1h-1zM770 264h1v1h-1zM771 229h1v1h-1zM771 272h1v1h-1zM772 247h1v1h-1zM772 256h1v1h-1zM773 229h1v1h-1zM774 249h1v1h-1zM774 251h1v1h-1zM775 229h1v1h-1zM775 272h1v1h-1zM776 244h1v1h-1zM776 254h1v1h-1zM777 229h1v1h-1zM778 238h1v1h-1zM778 258h1v1h-1zM779 229h1v1h-1zM780 233h1v1h-1zM780 262h1v1h-1zM781 229h1v1h-1zM781 272h1v1h-1zM782 235h1v1h-1zM782 265h1v1h-1zM783 229h1v1h-1zM784 239h1v1h-1zM784 269h1v1h-1zM785 229h1v1h-1zM786 243h1v1h-1zM786 263h1v1h-1zM787 229h1v1h-1zM788 248h1v1h-1zM788 256h1v1h-1zM789 229h1v1h-1zM789 272h1v1h-1zM790 249h1v1h-1zM790 252h1v1h-1zM791 229h1v1h-1zM792 243h1v1h-1zM792 255h1v1h-1zM793 229h1v1h-1zM794 238h1v1h-1zM794 259h1v1h-1zM795 229h1v1h-1zM796 232h1v1h-1zM796 263h1v1h-1zM797 229h1v1h-1zM797 272h1v1h-1zM798 236h1v1h-1zM798 266h1v1h-1zM799 229h1v1h-1zM799 272h1v1h-1zM800 240h1v1h-1zM800 270h1v1h-1zM801 229h1v1h-1zM801 272h1v1h-1zM802 244h1v1h-1zM802 262h1v1h-1zM803 229h1v1h-1zM803 272h1v1h-1zM804 248h1v1h-1zM804 255h1v1h-1zM805 229h1v1h-1zM805 272h1v1h-1zM806 248h1v1h-1zM806 252h1v1h-1zM807 229h1v1h-1zM807 272h1v1h-1zM808 243h1v1h-1zM808 256h1v1h-1zM809 229h1v1h-1zM809 272h1v1h-1zM810 237h1v1h-1zM810 260h1v1h-1zM811 229h1v1h-1zM812 232h1v1h-1zM812 263h1v1h-1zM813 229h1v1h-1zM814 236h1v1h-1zM814 267h1v1h-1zM815 229h1v1h-1zM815 272h1v1h-1zM816 241h1v1h-1zM816 269h1v1h-1zM817 229h1v1h-1zM818 245h1v1h-1zM818 261h1v1h-1zM819 229h1v1h-1zM819 273h1v1h-1zM820 249h1v1h-1zM820 254h1v1h-1zM821 230h1v1h-1zM822 248h1v1h-1zM822 253h1v1h-1zM823 230h1v1h-1zM824 242h1v1h-1zM824 257h1v1h-1zM825 230h1v1h-1zM826 237h1v1h-1zM826 260h1v1h-1zM827 230h1v1h-1zM828 233h1v1h-1zM828 264h1v1h-1zM829 230h1v1h-1zM830 237h1v1h-1zM830 268h1v1h-1zM831 230h1v1h-1zM832 242h1v1h-1zM832 268h1v1h-1zM833 230h1v1h-1zM833 273h1v1h-1zM834 246h1v1h-1zM834 261h1v1h-1zM835 230h1v1h-1zM835 273h1v1h-1zM836 250h1v1h-1zM836 253h1v1h-1zM837 230h1v1h-1zM838 247h1v1h-1zM838 254h1v1h-1zM839 230h1v1h-1zM839 273h1v1h-1zM840 242h1v1h-1zM840 258h1v1h-1zM841 230h1v1h-1zM841 273h1v1h-1zM842 236h1v1h-1zM842 261h1v1h-1zM843 230h1v1h-1zM843 273h1v1h-1zM844 234h1v1h-1zM844 265h1v1h-1zM845 230h1v1h-1zM845 273h1v1h-1zM846 238h1v1h-1zM846 269h1v1h-1zM847 230h1v1h-1zM848 242h1v1h-1zM848 267h1v1h-1zM849 230h1v1h-1zM849 273h1v1h-1zM850 247h1v1h-1zM850 260h1v1h-1zM851 230h1v1h-1zM851 273h1v1h-1zM852 251h1v1h-1zM852 253h1v1h-1zM853 230h1v1h-1zM854 247h1v1h-1zM854 255h1v1h-1zM855 230h1v1h-1zM855 273h1v1h-1zM856 241h1v1h-1zM856 258h1v1h-1zM857 230h1v1h-1zM858 235h1v1h-1zM858 262h1v1h-1zM859 230h1v1h-1zM860 234h1v1h-1zM860 266h1v1h-1zM861 230h1v1h-1zM861 273h1v1h-1zM862 239h1v1h-1zM862 269h1v1h-1zM863 230h1v1h-1zM863 273h1v1h-1zM864 243h1v1h-1zM864 267h1v1h-1zM865 230h1v1h-1zM865 273h1v1h-1zM866 247h1v1h-1zM866 259h1v1h-1zM867 230h1v1h-1zM867 273h1v1h-1zM868 252h1v1h-1zM868 252h1v1h-1zM869 230h1v1h-1zM870 246h1v1h-1zM870 255h1v1h-1zM871 230h1v1h-1zM871 273h1v1h-1zM872 240h1v1h-1zM872 259h1v1h-1zM873 230h1v1h-1zM873 274h1v1h-1zM874 235h1v1h-1zM874 263h1v1h-1zM875 230h1v1h-1zM876 235h1v1h-1zM876 266h1v1h-1zM877 230h1v1h-1zM878 240h1v1h-1zM878 270h1v1h-1zM879 230h1v1h-1zM879 274h1v1h-1zM880 244h1v1h-1zM880 266h1v1h-1zM881 230h1v1h-1zM881 274h1v1h-1zM882 248h1v1h-1zM882 258h1v1h-1zM883 230h1v1h-1zM883 274h1v1h-1zM884 251h1v1h-1zM884 252h1v1h-1zM885 230h1v1h-1zM886 245h1v1h-1zM886 256h1v1h-1zM887 230h1v1h-1zM887 274h1v1h-1zM888 240h1v1h-1zM888 260h1v1h-1zM889 230h1v1h-1zM890 234h1v1h-1zM890 263h1v1h-1zM891 230h1v1h-1zM892 236h1v1h-1zM892 267h1v1h-1zM893 230h1v1h-1zM893 274h1v1h-1zM894 240h1v1h-1zM894 271h1v1h-1zM895 230h1v1h-1zM896 245h1v1h-1zM896 265h1v1h-1zM897 230h1v1h-1zM898 249h1v1h-1zM898 257h1v1h-1zM899 230h1v1h-1zM900 251h1v1h-1zM900 253h1v1h-1zM901 230h1v1h-1zM902 245h1v1h-1zM902 257h1v1h-1zM903 230h1v1h-1zM904 239h1v1h-1zM904 261h1v1h-1zM905 230h1v1h-1zM906 233h1v1h-1zM906 264h1v1h-1zM907 230h1v1h-1zM907 274h1v1h-1zM908 237h1v1h-1zM908 268h1v1h-1zM909 230h1v1h-1zM909 274h1v1h-1zM910 241h1v1h-1zM910 272h1v1h-1zM911 230h1v1h-1zM911 274h1v1h-1z" fill="#006a00"/>
<path d="M160 417h1v101h-1zM164 420h247v102h-247zM660 417h1v101h-1zM664 420h247v102h-247z" fill="#007070"/>
<path d="M161 416h250v4h-250zM161 420h1v1h-1zM161 422h1v1h-1zM161 423h1v1h-1zM161 424h1v1h-1zM161 426h1v1h-1zM162 420h1v3h-1zM163 420h1v8h-1zM164 420h1v5h-1zM164 426h1v1h-1zM165 420h1v9h-1zM166 420h1v2h-1zM166 422h1v1h-1zM166 423h1v1h-1zM166 424h1v1h-1zM166 425h1v1h-1zM167 420h1v9h-1zM168 420h1v8h-1zM169 420h1v6h-1zM170 420h1v2h-1zM170 423h1v1h-1zM170 424h1v1h-1zM171 420h1v4h-1zM172 420h1v6h-1zM173 420h1v4h-1zM174 420h1v7h-1zM175 420h1v2h-1zM175 423h1v1h-1zM175 426h1v1h-1zM176 420h1v2h-1zM176 423h1v1h-1zM177 420h1v9h-1zM178 420h1v2h-1zM178 422h1v1h-1zM178 423h1v1h-1zM178 424h1v1h-1zM179 420h1v8h-1zM180 420h1v2h-1zM181 420h1v4h-1zM182 420h1v4h-1zM182 424h1v1h-1zM182 426h1v1h-1zM183 420h1v9h-1zM184 420h1v2h-1zM184 423h1v1h-1zM185 420h1v2h-1zM185 424h1v1h-1zM186 420h1v3h-1zM187 420h1v9h-1zM188 420h1v2h-1zM189 420h1v3h-1zM189 423h1v1h-1zM190 420h1v2h-1zM191 420h1v8h-1zM192 420h1v5h-1zM193 420h1v9h-1zM194 420h1v3h-1zM194 423h1v1h-1zM195 420h1v7h-1zM196 420h1v3h-1zM196 423h1v1h-1zM197 420h1v2h-1zM197 425h1v1h-1zM198 420h1v1h-1zM198 421h1v1h-1zM198 424h1v1h-1zM198 427h1v1h-1zM199 420h1v1h-1zM200 420h1v8h-1zM201 420h1v8h-1zM202 420h1v4h-1zM202 426h1v1h-1zM203 420h1v8h-1zM204 420h1v5h-1zM205 420h1v2h-1zM205 423h1v1h-1zM205 424h1v1h-1zM206 420h1v9h-1zM207 420h1v3h-1zM207 424h1v1h-1zM208 420h1v4h-1zM209 420h1v2h-1zM209 427h1v1h-1zM210 420h1v8h-1zM211 420h1v3h-1zM211 423h1v1h-1zM212 420h1v5h-1zM212 426h1v1h-1zM213 420h1v5h-1zM214 420h1v4h-1zM215 420h1v3h-1zM215 423h1v1h-1zM215 428h1v1h-1zM216 420h1v3h-1zM217 420h1v2h-1zM217 424h1v1h-1zM218 420h1v8h-1zM219 420h1v3h-1zM219 426h1v1h-1zM220 420h1v4h-1zM221 420h1v2h-1zM222 420h1v5h-1zM222 426h1v1h-1zM223 420h1v5h-1zM223 426h1v1h-1zM224 420h1v5h-1zM224 425h1v1h-1zM225 420h1v9h-1zM226 420h1v8h-1zM227 420h1v4h-1zM227 426h1v1h-1zM228 420h1v7h-1zM228 427h1v1h-1zM229 420h1v2h-1zM229 425h1v1h-1zM230 420h1v4h-1zM231 420h1v3h-1zM232 420h1v6h-1zM233 420h1v3h-1zM233 423h1v1h-1zM234 420h1v4h-1zM234 425h1v1h-1zM234 427h1v1h-1zM235 420h1v7h-1zM236 420h1v6h-1zM237 420h1v7h-1zM238 420h1v8h-1zM239 420h1v2h-1zM239 425h1v1h-1zM239 427h1v1h-1zM240 420h1v3h-1zM240 424h1v1h-1zM241 420h1v1h-1zM242 420h1v7h-1zM243 420h1v5h-1zM244 420h1v8h-1zM244 428h1v1h-1zM244 429h1v1h-1zM245 420h1v8h-1zM246 420h1v2h-1zM246 422h1v1h-1zM246 423h1v1h-1zM247 420h1v4h-1zM248 420h1v9h-1zM249 420h1v8h-1zM250 420h1v1h-1zM250 422h1v1h-1zM250 423h1v1h-1zM250 426h1v1h-1zM251 420h1v5h-1zM252 420h1v2h-1zM252 422h1v1h-1zM253 420h1v3h-1zM253 426h1v1h-1zM254 420h1v4h-1zM254 426h1v1h-1zM255 420h1v3h-1zM255 429h1v1h-1zM256 420h1v3h-1zM256 423h1v1h-1zM256 424h1v1h-1zM257 420h1v7h-1zM258 420h1v6h-1zM259 420h1v6h-1zM260 420h1v3h-1zM260 423h1v1h-1zM260 424h1v1h-1zM260 429h1v1h-1zM261 420h1v4h-1zM261 425h1v1h-1zM262 420h1v3h-1zM263 420h1v9h-1zM264 420h1v7h-1zM265 420h1v2h-1zM265 422h1v1h-1zM266 420h1v1h-1zM266 421h1v1h-1zM266 423h1v1h-1zM266 424h1v1h-1zM267 420h1v3h-1zM268 420h1v3h-1zM268 425h1v1h-1zM268 426h1v1h-1zM269 420h1v2h-1zM269 426h1v1h-1zM270 420h1v8h-1zM271 420h1v2h-1zM271 422h1v1h-1zM271 423h1v1h-1zM271 425h1v1h-1zM272 420h1v1h-1zM272 422h1v1h-1zM272 427h1v1h-1zM273 420h1v3h-1zM274 420h1v2h-1zM274 422h1v1h-1zM275 420h1v1h-1zM275 421h1v1h-1zM275 423h1v1h-1zM276 420h1v4h-1zM277 420h1v8h-1zM278 420h1v9h-1zM279 420h1v9h-1zM280 420h1v2h-1zM280 423h1v1h-1zM280 426h1v1h-1zM281 420h1v3h-1zM281 426h1v1h-1zM282 420h1v8h-1zM283 420h1v3h-1zM283 423h1v1h-1zM284 420h1v4h-1zM284 426h1v1h-1zM285 420h1v1h-1zM285 421h1v1h-1zM286 420h1v4h-1zM286 424h1v1h-1zM287 420h1v3h-1zM288 420h1v8h-1zM289 420h1v7h-1zM289 428h1v1h-1zM290 420h1v6h-1zM291 420h1v4h-1zM292 420h1v2h-1zM292 423h1v1h-1zM292 424h1v1h-1zM293 420h1v1h-1zM293 421h1v1h-1zM293 424h1v1h-1zM294 420h1v4h-1zM295 420h1v1h-1zM295 423h1v1h-1zM296 420h1v1h-1zM296 421h1v1h-1zM296 424h1v1h-1zM297 420h1v4h-1zM297 426h1v1h-1zM298 420h1v3h-1zM298 423h1v1h-1zM298 424h1v1h-1zM299 420h1v5h-1zM300 420h1v4h-1zM300 426h1v1h-1zM301 420h1v4h-1zM301 424h1v1h-1zM302 420h1v4h-1zM302 425h1v1h-1zM303 420h1v4h-1zM303 425h1v1h-1zM303 426h1v1h-1zM304 420h1v8h-1zM304 428h1v1h-1zM305 420h1v4h-1zM306 420h1v1h-1zM306 427h1v1h-1zM307 420h1v1h-1zM307 421h1v1h-1zM307 423h1v1h-1zM307 426h1v1h-1zM308 420h1v3h-1zM308 423h1v1h-1zM309 420h1v7h-1zM310 420h1v6h-1zM311 420h1v4h-1zM311 424h1v1h-1zM312 420h1v3h-1zM312 423h1v1h-1zM312 425h1v1h-1zM313 420h1v2h-1zM313 423h1v1h-1zM314 420h1v2h-1zM315 420h1v6h-1zM316 420h1v4h-1zM316 425h1v1h-1zM317 420h1v2h-1zM318 420h1v2h-1zM318 422h1v1h-1zM319 420h1v7h-1zM320 420h1v5h-1zM321 420h1v8h-1zM322 420h1v5h-1zM323 420h1v4h-1zM323 425h1v1h-1zM324 420h1v4h-1zM324 424h1v1h-1zM324 427h1v1h-1zM325 420h1v5h-1zM326 420h1v6h-1zM327 420h1v8h-1zM328 420h1v8h-1zM329 420h1v4h-1zM330 420h1v5h-1zM331 420h1v9h-1zM332 420h1v2h-1zM332 422h1v1h-1zM332 424h1v1h-1zM333 420h1v6h-1zM334 420h1v6h-1zM335 420h1v7h-1zM336 420h1v8h-1zM337 420h1v1h-1zM337 422h1v1h-1zM337 424h1v1h-1zM338 420h1v5h-1zM339 420h1v2h-1zM339 424h1v1h-1zM339 425h1v1h-1zM340 420h1v6h-1zM341 420h1v8h-1zM341 428h1v1h-1zM342 420h1v4h-1zM342 424h1v1h-1zM342 427h1v1h-1zM343 420h1v7h-1zM343 427h1v1h-1zM344 420h1v1h-1zM344 421h1v1h-1zM345 420h1v2h-1zM345 422h1v1h-1zM346 420h1v3h-1zM347 420h1v3h-1zM347 423h1v1h-1zM347 424h1v1h-1zM347 426h1v1h-1zM348 420h1v4h-1zM348 427h1v1h-1zM349 420h1v4h-1zM350 420h1v1h-1zM350 421h1v1h-1zM350 422h1v1h-1zM350 424h1v1h-1zM351 420h1v3h-1zM351 423h1v1h-1zM352 420h1v6h-1zM353 420h1v3h-1zM354 420h1v2h-1zM354 423h1v1h-1zM354 427h1v1h-1zM355 420h1v1h-1zM355 421h1v1h-1zM355 422h1v1h-1zM355 423h1v1h-1zM356 420h1v6h-1zM357 420h1v3h-1zM357 423h1v1h-1zM358 420h1v2h-1zM358 423h1v1h-1zM358 428h1v1h-1zM359 420h1v5h-1zM360 420h1v2h-1zM360 422h1v1h-1zM360 424h1v1h-1zM361 420h1v2h-1zM361 422h1v1h-1zM361 423h1v1h-1zM362 420h1v3h-1zM363 420h1v1h-1zM363 426h1v1h-1zM364 420h1v2h-1zM364 422h1v1h-1zM365 420h1v5h-1zM366 420h1v5h-1zM367 420h1v2h-1zM367 423h1v1h-1zM368 420h1v3h-1zM368 424h1v1h-1zM368 425h1v1h-1zM369 420h1v2h-1zM369 426h1v1h-1zM370 420h1v9h-1zM371 420h1v9h-1zM372 420h1v7h-1zM373 420h1v4h-1zM373 425h1v1h-1zM374 420h1v3h-1zM374 423h1v1h-1zM374 427h1v1h-1zM375 420h1v9h-1zM376 420h1v2h-1zM376 422h1v1h-1zM376 427h1v1h-1zM377 420h1v5h-1zM377 425h1v1h-1zM378 420h1v5h-1zM379 420h1v2h-1zM380 420h1v4h-1zM381 420h1v2h-1zM381 422h1v1h-1zM382 420h1v2h-1zM382 426h1v1h-1zM383 420h1v9h-1zM384 420h1v1h-1zM384 424h1v1h-1zM385 420h1v5h-1zM386 420h1v3h-1zM386 424h1v1h-1zM387 420h1v8h-1zM388 420h1v4h-1zM388 424h1v1h-1zM388 425h1v1h-1zM389 420h1v1h-1zM389 421h1v1h-1zM389 424h1v1h-1zM389 425h1v1h-1zM390 420h1v2h-1zM390 426h1v1h-1zM391 420h1v7h-1zM392 420h1v2h-1zM392 422h1v1h-1zM392 425h1v1h-1zM393 420h1v8h-1zM394 420h1v4h-1zM395 420h1v3h-1zM395 424h1v1h-1zM396 420h1v5h-1zM397 420h1v7h-1zM398 420h1v5h-1zM398 425h1v1h-1zM399 420h1v8h-1zM400 420h1v2h-1zM401 420h1v7h-1zM401 427h1v1h-1zM402 420h1v1h-1zM402 424h1v1h-1zM402 425h1v1h-1zM403 420h1v2h-1zM403 424h1v1h-1zM404 420h1v2h-1zM404 422h1v1h-1zM405 420h1v4h-1zM405 425h1v1h-1zM406 420h1v5h-1zM406 425h1v1h-1zM407 420h1v2h-1zM407 423h1v1h-1zM408 420h1v6h-1zM409 420h1v1h-1zM409 421h1v1h-1zM409 422h1v1h-1zM409 426h1v1h-1zM410 420h1v4h-1zM161 517h1v3h-1zM161 516h1v1h-1zM161 520h1v1h-1zM162 517h1v3h-1zM162 516h1v1h-1zM162 521h1v1h-1zM163 517h1v3h-1zM163 516h1v1h-1zM163 520h1v1h-1zM164 517h1v3h-1zM164 516h1v1h-1zM164 520h1v1h-1zM165 517h1v3h-1zM165 516h1v1h-1zM166 517h1v3h-1zM166 516h1v1h-1zM166 520h1v1h-1zM167 517h1v3h-1zM167 520h1v1h-1zM168 517h1v3h-1zM168 516h1v1h-1zM169 517h1v3h-1zM169 516h1v1h-1zM169 520h1v1h-1zM170 517h1v3h-1zM170 516h1v1h-1zM171 517h1v3h-1zM171 516h1v1h-1zM171 520h1v1h-1zM171 521h1v1h-1zM172 517h1v3h-1zM172 516h1v1h-1zM172 520h1v1h-1zM173 517h1v3h-1zM173 521h1v1h-1zM174 517h1v3h-1zM174 516h1v1h-1zM175 517h1v3h-1zM176 517h1v3h-1zM176 516h1v1h-1zM177 517h1v3h-1zM177 516h1v1h-1zM178 517h1v3h-1zM178 516h1v1h-1zM178 521h1v1h-1zM179 517h1v3h-1zM179 516h1v1h-1zM179 521h1v1h-1zM180 517h1v3h-1zM180 520h1v1h-1zM180 521h1v1h-1zM181 517h1v3h-1zM181 516h1v1h-1zM182 517h1v3h-1zM182 521h1v1h-1zM183 517h1v3h-1zM183 520h1v1h-1zM184 517h1v3h-1zM184 516h1v1h-1zM184 520h1v1h-1zM184 521h1v1h-1zM185 517h1v3h-1zM185 520h1v1h-1zM186 517h1v3h-1zM186 516h1v1h-1zM186 520h1v1h-1zM186 521h1v1h-1zM187 517h1v3h-1zM187 516h1v1h-1zM188 517h1v3h-1zM188 516h1v1h-1zM188 520h1v1h-1zM189 517h1v3h-1zM189 516h1v1h-1zM189 520h1v1h-1zM189 521h1v1h-1zM190 517h1v3h-1zM190 516h1v1h-1zM190 520h1v1h-1zM191 517h1v3h-1zM191 516h1v1h-1zM192 517h1v3h-1zM192 516h1v1h-1zM193 517h1v3h-1zM193 521h1v1h-1zM194 517h1v3h-1zM194 516h1v1h-1zM194 520h1v1h-1zM195 517h1v3h-1zM195 516h1v1h-1zM195 520h1v1h-1zM195 521h1v1h-1zM196 517h1v3h-1zM196 516h1v1h-1zM197 517h1v3h-1zM197 516h1v1h-1zM198 517h1v3h-1zM198 520h1v1h-1zM198 521h1v1h-1zM199 517h1v3h-1zM199 516h1v1h-1zM199 520h1v1h-1zM199 521h1v1h-1zM200 517h1v3h-1zM200 516h1v1h-1zM200 520h1v1h-1zM201 517h1v3h-1zM201 516h1v1h-1zM201 520h1v1h-1zM201 521h1v1h-1zM202 517h1v3h-1zM202 516h1v1h-1zM202 520h1v1h-1zM203 517h1v3h-1zM203 516h1v1h-1zM204 517h1v3h-1zM204 521h1v1h-1zM205 517h1v3h-1zM205 516h1v1h-1zM205 521h1v1h-1zM206 517h1v3h-1zM206 516h1v1h-1zM207 517h1v3h-1zM207 516h1v1h-1zM207 520h1v1h-1zM208 517h1v3h-1zM208 516h1v1h-1zM208 521h1v1h-1zM209 517h1v3h-1zM209 520h1v1h-1zM209 521h1v1h-1zM210 517h1v3h-1zM210 516h1v1h-1zM210 521h1v1h-1zM211 517h1v3h-1zM212 517h1v3h-1zM212 516h1v1h-1zM213 517h1v3h-1zM213 520h1v1h-1zM213 521h1v1h-1zM214 517h1v3h-1zM214 516h1v1h-1zM214 520h1v1h-1zM214 521h1v1h-1zM215 517h1v3h-1zM215 516h1v1h-1zM216 517h1v3h-1zM216 516h1v1h-1zM216 520h1v1h-1zM217 517h1v3h-1zM217 520h1v1h-1zM217 521h1v1h-1zM218 517h1v3h-1zM218 516h1v1h-1zM218 521h1v1h-1zM219 517h1v3h-1zM219 516h1v1h-1zM219 521h1v1h-1zM220 517h1v3h-1zM220 516h1v1h-1zM221 517h1v3h-1zM221 516h1v1h-1zM221 520h1v1h-1zM222 517h1v3h-1zM223 517h1v3h-1zM223 520h1v1h-1zM223 521h1v1h-1zM224 517h1v3h-1zM224 516h1v1h-1zM225 517h1v3h-1zM225 516h1v1h-1zM226 517h1v3h-1zM226 516h1v1h-1zM227 517h1v3h-1zM227 516h1v1h-1zM227 520h1v1h-1zM227 521h1v1h-1zM228 517h1v3h-1zM228 516h1v1h-1zM229 517h1v3h-1zM229 520h1v1h-1zM229 521h1v1h-1zM230 517h1v3h-1zM230 520h1v1h-1zM230 521h1v1h-1zM231 517h1v3h-1zM231 516h1v1h-1zM232 517h1v3h-1zM232 516h1v1h-1zM233 517h1v3h-1zM234 517h1v3h-1zM234 516h1v1h-1zM234 521h1v1h-1zM235 517h1v3h-1zM235 520h1v1h-1zM235 521h1v1h-1zM236 517h1v3h-1zM236 520h1v1h-1zM236 521h1v1h-1zM237 517h1v3h-1zM237 516h1v1h-1zM237 520h1v1h-1zM237 521h1v1h-1zM238 517h1v3h-1zM238 521h1v1h-1zM239 517h1v3h-1zM239 516h1v1h-1zM239 520h1v1h-1zM239 521h1v1h-1zM240 517h1v3h-1zM241 517h1v3h-1zM241 516h1v1h-1zM241 520h1v1h-1zM242 517h1v3h-1zM242 516h1v1h-1zM243 517h1v3h-1zM243 516h1v1h-1zM243 521h1v1h-1zM244 517h1v3h-1zM244 516h1v1h-1zM244 520h1v1h-1zM245 517h1v3h-1zM245 516h1v1h-1zM245 520h1v1h-1zM246 517h1v3h-1zM246 516h1v1h-1zM246 520h1v1h-1zM246 521h1v1h-1zM247 517h1v3h-1zM247 516h1v1h-1zM248 517h1v3h-1zM248 516h1v1h-1zM248 520h1v1h-1zM249 517h1v3h-1zM249 516h1v1h-1zM249 521h1v1h-1zM250 517h1v3h-1zM250 516h1v1h-1zM251 517h1v3h-1zM251 516h1v1h-1zM251 521h1v1h-1zM252 517h1v3h-1zM252 516h1v1h-1zM252 521h1v1h-1zM253 517h1v3h-1zM253 516h1v1h-1zM253 520h1v1h-1zM253 521h1v1h-1zM254 517h1v3h-1zM254 516h1v1h-1zM254 520h1v1h-1zM255 517h1v3h-1zM256 517h1v3h-1zM256 516h1v1h-1zM256 520h1v1h-1zM257 517h1v3h-1zM257 516h1v1h-1zM258 517h1v3h-1zM258 516h1v1h-1zM258 520h1v1h-1zM258 521h1v1h-1zM259 517h1v3h-1zM259 516h1v1h-1zM259 520h1v1h-1zM260 517h1v3h-1zM260 516h1v1h-1zM260 521h1v1h-1zM261 517h1v3h-1zM261 516h1v1h-1zM261 520h1v1h-1zM262 517h1v3h-1zM262 516h1v1h-1zM262 520h1v1h-1zM263 517h1v3h-1zM263 516h1v1h-1zM263 520h1v1h-1zM263 521h1v1h-1zM264 517h1v3h-1zM264 516h1v1h-1zM264 520h1v1h-1zM265 517h1v3h-1zM265 516h1v1h-1zM265 520h1v1h-1zM266 517h1v3h-1zM266 516h1v1h-1zM266 520h1v1h-1zM267 517h1v3h-1zM267 516h1v1h-1zM268 517h1v3h-1zM268 516h1v1h-1zM269 517h1v3h-1zM269 516h1v1h-1zM269 520h1v1h-1zM269 521h1v1h-1zM270 517h1v3h-1zM270 516h1v1h-1zM271 517h1v3h-1zM271 516h1v1h-1zM271 520h1v1h-1zM271 521h1v1h-1zM272 517h1v3h-1zM272 516h1v1h-1zM272 520h1v1h-1zM273 517h1v3h-1zM274 517h1v3h-1zM274 516h1v1h-1zM275 517h1v3h-1zM275 520h1v1h-1zM275 521h1v1h-1zM276 517h1v3h-1zM276 516h1v1h-1zM276 521h1v1h-1zM277 517h1v3h-1zM277 516h1v1h-1zM277 520h1v1h-1zM278 517h1v3h-1zM278 516h1v1h-1zM278 520h1v1h-1zM279 517h1v3h-1zM279 516h1v1h-1zM279 520h1v1h-1zM279 521h1v1h-1zM280 517h1v3h-1zM280 516h1v1h-1zM280 520h1v1h-1zM281 517h1v3h-1zM281 516h1v1h-1zM281 520h1v1h-1zM282 517h1v3h-1zM282 516h1v1h-1zM282 521h1v1h-1zM283 517h1v3h-1zM283 516h1v1h-1zM283 521h1v1h-1zM284 517h1v3h-1zM284 520h1v1h-1zM285 517h1v3h-1zM285 516h1v1h-1zM285 520h1v1h-1zM286 517h1v3h-1zM286 516h1v1h-1zM287 517h1v3h-1zM287 516h1v1h-1zM287 520h1v1h-1zM288 517h1v3h-1zM288 516h1v1h-1zM288 520h1v1h-1zM288 521h1v1h-1zM289 517h1v3h-1zM290 517h1v3h-1zM290 520h1v1h-1zM291 517h1v3h-1zM291 516h1v1h-1zM291 521h1v1h-1zM292 517h1v3h-1zM292 521h1v1h-1zM293 517h1v3h-1zM293 516h1v1h-1zM293 520h1v1h-1zM293 521h1v1h-1zM294 517h1v3h-1zM294 516h1v1h-1zM294 520h1v1h-1zM295 517h1v3h-1zM295 516h1v1h-1zM295 520h1v1h-1zM296 517h1v3h-1zM296 516h1v1h-1zM297 517h1v3h-1zM297 516h1v1h-1zM298 517h1v3h-1zM298 516h1v1h-1zM299 517h1v3h-1zM299 516h1v1h-1zM299 520h1v1h-1zM300 517h1v3h-1zM300 516h1v1h-1zM300 520h1v1h-1zM300 521h1v1h-1zM301 517h1v3h-1zM301 516h1v1h-1zM301 520h1v1h-1zM302 517h1v3h-1zM302 516h1v1h-1zM302 520h1v1h-1zM303 517h1v3h-1zM303 516h1v1h-1zM303 520h1v1h-1zM304 517h1v3h-1zM305 517h1v3h-1zM305 516h1v1h-1zM305 520h1v1h-1zM306 517h1v3h-1zM306 521h1v1h-1zM307 517h1v3h-1zM307 516h1v1h-1zM307 520h1v1h-1zM307 521h1v1h-1zM308 517h1v3h-1zM308 516h1v1h-1zM308 520h1v1h-1zM308 521h1v1h-1zM309 517h1v3h-1zM309 516h1v1h-1zM309 520h1v1h-1zM309 521h1v1h-1zM310 517h1v3h-1zM310 516h1v1h-1zM310 520h1v1h-1zM311 517h1v3h-1zM311 516h1v1h-1zM311 520h1v1h-1zM311 521h1v1h-1zM312 517h1v3h-1zM312 521h1v1h-1zM313 517h1v3h-1zM313 516h1v1h-1zM313 520h1v1h-1zM314 517h1v3h-1zM314 516h1v1h-1zM315 517h1v3h-1zM315 516h1v1h-1zM315 520h1v1h-1zM316 517h1v3h-1zM316 516h1v1h-1zM316 520h1v1h-1zM316 521h1v1h-1zM317 517h1v3h-1zM317 516h1v1h-1zM317 520h1v1h-1zM318 517h1v3h-1zM318 516h1v1h-1zM318 520h1v1h-1zM319 517h1v3h-1zM319 516h1v1h-1zM319 520h1v1h-1zM320 517h1v3h-1zM320 516h1v1h-1zM320 520h1v1h-1zM320 521h1v1h-1zM321 517h1v3h-1zM321 516h1v1h-1zM321 520h1v1h-1zM322 517h1v3h-1zM322 516h1v1h-1zM322 520h1v1h-1zM323 517h1v3h-1zM323 516h1v1h-1zM323 521h1v1h-1zM324 517h1v3h-1zM324 516h1v1h-1zM324 521h1v1h-1zM325 517h1v3h-1zM325 516h1v1h-1zM325 520h1v1h-1zM325 521h1v1h-1zM326 517h1v3h-1zM326 516h1v1h-1zM326 520h1v1h-1zM326 521h1v1h-1zM327 517h1v3h-1zM327 516h1v1h-1zM327 520h1v1h-1zM328 517h1v3h-1zM328 516h1v1h-1zM329 517h1v3h-1zM329 516h1v1h-1zM329 520h1v1h-1zM329 521h1v1h-1zM330 517h1v3h-1zM330 516h1v1h-1zM331 517h1v3h-1zM331 516h1v1h-1zM331 520h1v1h-1zM331 521h1v1h-1zM332 517h1v3h-1zM332 520h1v1h-1zM333 517h1v3h-1zM333 516h1v1h-1zM333 520h1v1h-1zM334 517h1v3h-1zM334 516h1v1h-1zM335 517h1v3h-1zM335 516h1v1h-1zM335 520h1v1h-1zM335 521h1v1h-1zM336 517h1v3h-1zM336 516h1v1h-1zM336 521h1v1h-1zM337 517h1v3h-1zM337 516h1v1h-1zM338 517h1v3h-1zM338 516h1v1h-1zM339 517h1v3h-1zM339 516h1v1h-1zM339 520h1v1h-1zM340 517h1v3h-1zM340 516h1v1h-1zM340 521h1v1h-1zM341 517h1v3h-1zM341 516h1v1h-1zM341 521h1v1h-1zM342 517h1v3h-1zM342 520h1v1h-1zM343 517h1v3h-1zM343 516h1v1h-1zM343 521h1v1h-1zM344 517h1v3h-1zM344 516h1v1h-1zM344 520h1v1h-1zM345 517h1v3h-1zM345 520h1v1h-1zM346 517h1v3h-1zM346 516h1v1h-1zM346 520h1v1h-1zM346 521h1v1h-1zM347 517h1v3h-1zM347 516h1v1h-1zM347 520h1v1h-1zM348 517h1v3h-1zM348 516h1v1h-1zM348 520h1v1h-1zM349 517h1v3h-1zM349 520h1v1h-1zM350 517h1v3h-1zM350 516h1v1h-1zM350 521h1v1h-1zM351 517h1v3h-1zM351 516h1v1h-1zM352 517h1v3h-1zM352 516h1v1h-1zM352 520h1v1h-1zM353 517h1v3h-1zM353 521h1v1h-1zM354 517h1v3h-1zM354 516h1v1h-1zM355 517h1v3h-1zM355 516h1v1h-1zM355 521h1v1h-1zM356 517h1v3h-1zM356 516h1v1h-1zM357 517h1v3h-1zM357 516h1v1h-1zM357 520h1v1h-1zM358 517h1v3h-1zM358 520h1v1h-1zM359 517h1v3h-1zM359 516h1v1h-1zM359 520h1v1h-1zM359 521h1v1h-1zM360 517h1v3h-1zM360 516h1v1h-1zM360 520h1v1h-1zM360 521h1v1h-1zM361 517h1v3h-1zM361 516h1v1h-1zM362 517h1v3h-1zM362 516h1v1h-1zM362 520h1v1h-1zM363 517h1v3h-1zM363 520h1v1h-1zM363 521h1v1h-1zM364 517h1v3h-1zM364 516h1v1h-1zM364 520h1v1h-1zM365 517h1v3h-1zM365 520h1v1h-1zM365 521h1v1h-1zM366 517h1v3h-1zM366 516h1v1h-1zM367 517h1v3h-1zM367 516h1v1h-1zM367 520h1v1h-1zM368 517h1v3h-1zM368 516h1v1h-1zM368 520h1v1h-1zM369 517h1v3h-1zM369 516h1v1h-1zM370 517h1v3h-1zM370 516h1v1h-1zM370 520h1v1h-1zM371 517h1v3h-1zM371 516h1v1h-1zM371 520h1v1h-1zM371 521h1v1h-1zM372 517h1v3h-1zM372 516h1v1h-1zM372 520h1v1h-1zM373 517h1v3h-1zM373 521h1v1h-1zM374 517h1v3h-1zM374 516h1v1h-1zM374 521h1v1h-1zM375 517h1v3h-1zM375 520h1v1h-1zM376 517h1v3h-1zM376 516h1v1h-1zM376 520h1v1h-1zM377 517h1v3h-1zM377 520h1v1h-1zM377 521h1v1h-1zM378 517h1v3h-1zM378 516h1v1h-1zM378 520h1v1h-1zM379 517h1v3h-1zM379 520h1v1h-1zM380 517h1v3h-1zM380 516h1v1h-1zM380 520h1v1h-1zM381 517h1v3h-1zM381 516h1v1h-1zM381 520h1v1h-1zM381 521h1v1h-1zM382 517h1v3h-1zM382 516h1v1h-1zM382 520h1v1h-1zM383 517h1v3h-1zM383 520h1v1h-1zM384 517h1v3h-1zM384 516h1v1h-1zM384 520h1v1h-1zM385 517h1v3h-1zM385 516h1v1h-1zM385 520h1v1h-1zM385 521h1v1h-1zM386 517h1v3h-1zM386 516h1v1h-1zM387 517h1v3h-1zM387 516h1v1h-1zM387 520h1v1h-1zM388 517h1v3h-1zM388 520h1v1h-1zM389 517h1v3h-1zM389 516h1v1h-1zM390 517h1v3h-1zM390 516h1v1h-1zM390 520h1v1h-1zM390 521h1v1h-1zM391 517h1v3h-1zM391 516h1v1h-1zM391 520h1v1h-1zM392 517h1v3h-1zM392 520h1v1h-1zM392 521h1v1h-1zM393 517h1v3h-1zM393 516h1v1h-1zM394 517h1v3h-1zM394 516h1v1h-1zM395 517h1v3h-1zM395 520h1v1h-1zM396 517h1v3h-1zM396 516h1v1h-1zM396 521h1v1h-1zM397 517h1v3h-1zM397 516h1v1h-1zM398 517h1v3h-1zM398 516h1v1h-1zM399 517h1v3h-1zM399 516h1v1h-1zM399 521h1v1h-1zM400 517h1v3h-1zM400 516h1v1h-1zM400 521h1v1h-1zM401 517h1v3h-1zM401 516h1v1h-1zM402 517h1v3h-1zM402 516h1v1h-1zM402 520h1v1h-1zM403 517h1v3h-1zM403 516h1v1h-1zM404 517h1v3h-1zM404 516h1v1h-1zM404 520h1v1h-1zM405 517h1v3h-1zM405 516h1v1h-1zM405 520h1v1h-1zM406 517h1v3h-1zM406 516h1v1h-1zM406 520h1v1h-1zM407 517h1v3h-1zM407 516h1v1h-1zM407 521h1v1h-1zM408 517h1v3h-1zM408 516h1v1h-1zM408 520h1v1h-1zM408 521h1v1h-1zM409 517h1v3h-1zM409 516h1v1h-1zM410 517h1v3h-1zM410 516h1v1h-1zM411 509h1v12h-1zM412 505h1v16h-1zM413 457h1v52h-1zM414 470h1v34h-1zM415 494h1v6h-1zM416 497h1v7h-1zM417 501h1v7h-1zM418 505h1v6h-1zM419 508h1v6h-1zM420 511h1v5h-1zM421 513h1v5h-1zM422 515h1v4h-1zM423 516h1v4h-1zM424 517h1v3h-1zM425 517h1v3h-1zM661 416h250v4h-250zM661 420h1v1h-1zM661 422h1v1h-1zM661 426h1v1h-1zM662 420h1v4h-1zM662 424h1v1h-1zM663 420h1v3h-1zM663 423h1v1h-1zM663 425h1v1h-1zM664 420h1v4h-1zM664 425h1v1h-1zM665 420h1v1h-1zM665 421h1v1h-1zM665 422h1v1h-1zM665 424h1v1h-1zM666 420h1v1h-1zM666 424h1v1h-1zM666 426h1v1h-1zM667 420h1v3h-1zM668 420h1v9h-1zM669 420h1v1h-1zM669 423h1v1h-1zM669 424h1v1h-1zM669 425h1v1h-1zM670 420h1v4h-1zM670 426h1v1h-1zM671 420h1v3h-1zM672 420h1v9h-1zM673 420h1v2h-1zM673 424h1v1h-1zM673 425h1v1h-1zM673 429h1v1h-1zM674 420h1v2h-1zM674 423h1v1h-1zM674 426h1v1h-1zM675 420h1v5h-1zM675 427h1v1h-1zM676 420h1v2h-1zM676 422h1v1h-1zM677 420h1v2h-1zM677 425h1v1h-1zM678 420h1v5h-1zM679 420h1v2h-1zM679 425h1v1h-1zM680 420h1v8h-1zM681 420h1v3h-1zM681 424h1v1h-1zM681 425h1v1h-1zM682 420h1v6h-1zM683 420h1v1h-1zM683 421h1v1h-1zM683 425h1v1h-1zM684 420h1v6h-1zM684 429h1v1h-1zM685 420h1v1h-1zM686 420h1v3h-1zM687 420h1v3h-1zM687 423h1v1h-1zM688 420h1v4h-1zM688 425h1v1h-1zM689 420h1v3h-1zM689 423h1v1h-1zM689 425h1v1h-1zM689 429h1v1h-1zM690 420h1v2h-1zM690 422h1v1h-1zM691 420h1v3h-1zM692 420h1v8h-1zM693 420h1v1h-1zM693 421h1v1h-1zM694 420h1v5h-1zM694 425h1v1h-1zM695 420h1v4h-1zM695 427h1v1h-1zM696 420h1v4h-1zM696 424h1v1h-1zM697 420h1v1h-1zM697 422h1v1h-1zM698 420h1v6h-1zM699 420h1v8h-1zM700 420h1v3h-1zM701 420h1v7h-1zM702 420h1v4h-1zM702 424h1v1h-1zM702 426h1v1h-1zM703 420h1v8h-1zM704 420h1v8h-1zM705 420h1v4h-1zM705 425h1v1h-1zM705 426h1v1h-1zM705 427h1v1h-1zM706 420h1v2h-1zM707 420h1v4h-1zM708 420h1v4h-1zM709 420h1v4h-1zM709 426h1v1h-1zM710 420h1v8h-1zM711 420h1v3h-1zM711 423h1v1h-1zM711 424h1v1h-1zM711 425h1v1h-1zM712 420h1v3h-1zM712 423h1v1h-1zM713 420h1v2h-1zM713 422h1v1h-1zM713 424h1v1h-1zM714 420h1v3h-1zM714 425h1v1h-1zM715 420h1v3h-1zM715 426h1v1h-1zM716 420h1v1h-1zM716 421h1v1h-1zM716 423h1v1h-1zM717 420h1v4h-1zM717 425h1v1h-1zM717 426h1v1h-1zM718 420h1v6h-1zM718 426h1v1h-1zM719 420h1v7h-1zM720 420h1v2h-1zM720 422h1v1h-1zM720 424h1v1h-1zM721 420h1v5h-1zM722 420h1v4h-1zM722 424h1v1h-1zM722 427h1v1h-1zM723 420h1v3h-1zM723 423h1v1h-1zM723 424h1v1h-1zM723 427h1v1h-1zM724 420h1v6h-1zM725 420h1v4h-1zM725 424h1v1h-1zM726 420h1v8h-1zM727 420h1v7h-1zM728 420h1v1h-1zM728 421h1v1h-1zM728 427h1v1h-1zM728 428h1v1h-1zM729 420h1v4h-1zM730 420h1v3h-1zM730 424h1v1h-1zM731 420h1v4h-1zM731 424h1v1h-1zM731 425h1v1h-1zM732 420h1v3h-1zM732 424h1v1h-1zM733 420h1v2h-1zM733 422h1v1h-1zM734 420h1v1h-1zM734 421h1v1h-1zM734 423h1v1h-1zM735 420h1v9h-1zM736 420h1v9h-1zM737 420h1v1h-1zM737 421h1v1h-1zM737 425h1v1h-1zM738 420h1v4h-1zM739 420h1v8h-1zM740 420h1v4h-1zM741 420h1v2h-1zM742 420h1v1h-1zM742 425h1v1h-1zM743 420h1v2h-1zM743 423h1v1h-1zM743 426h1v1h-1zM744 420h1v2h-1zM744 423h1v1h-1zM745 420h1v3h-1zM745 424h1v1h-1zM746 420h1v5h-1zM747 420h1v2h-1zM748 420h1v6h-1zM749 420h1v3h-1zM749 427h1v1h-1zM750 420h1v7h-1zM750 427h1v1h-1zM751 420h1v4h-1zM751 426h1v1h-1zM751 427h1v1h-1zM752 420h1v1h-1zM752 421h1v1h-1zM752 422h1v1h-1zM752 426h1v1h-1zM753 420h1v5h-1zM754 420h1v3h-1zM754 427h1v1h-1zM755 420h1v2h-1zM756 420h1v2h-1zM756 425h1v1h-1zM757 420h1v2h-1zM757 422h1v1h-1zM758 420h1v2h-1zM758 422h1v1h-1zM758 424h1v1h-1zM759 420h1v4h-1zM759 425h1v1h-1zM760 420h1v9h-1zM761 420h1v3h-1zM761 424h1v1h-1zM762 420h1v4h-1zM763 420h1v9h-1zM764 420h1v7h-1zM765 420h1v3h-1zM765 423h1v1h-1zM766 420h1v6h-1zM767 420h1v2h-1zM767 422h1v1h-1zM767 423h1v1h-1zM768 420h1v5h-1zM769 420h1v9h-1zM770 420h1v7h-1zM770 427h1v1h-1zM771 420h1v3h-1zM771 423h1v1h-1zM771 427h1v1h-1zM772 420h1v8h-1zM773 420h1v4h-1zM773 425h1v1h-1zM774 420h1v3h-1zM775 420h1v4h-1zM775 424h1v1h-1zM775 425h1v1h-1zM776 420h1v3h-1zM776 425h1v1h-1zM777 420h1v3h-1zM778 420h1v3h-1zM778 428h1v1h-1zM779 420h1v9h-1zM780 420h1v7h-1zM781 420h1v4h-1zM781 426h1v1h-1zM781 427h1v1h-1zM782 420h1v3h-1zM783 420h1v4h-1zM783 429h1v1h-1zM784 420h1v8h-1zM785 420h1v7h-1zM786 420h1v1h-1zM787 420h1v6h-1zM788 420h1v2h-1zM788 424h1v1h-1zM789 420h1v6h-1zM790 420h1v9h-1zM791 420h1v3h-1zM791 425h1v1h-1zM791 426h1v1h-1zM792 420h1v4h-1zM792 424h1v1h-1zM792 425h1v1h-1zM793 420h1v5h-1zM794 420h1v4h-1zM795 420h1v6h-1zM795 426h1v1h-1zM795 428h1v1h-1zM796 420h1v3h-1zM796 423h1v1h-1zM797 420h1v1h-1zM797 421h1v1h-1zM797 423h1v1h-1zM797 424h1v1h-1zM798 420h1v2h-1zM798 422h1v1h-1zM799 420h1v9h-1zM800 420h1v4h-1zM800 424h1v1h-1zM801 420h1v6h-1zM801 426h1v1h-1zM802 420h1v6h-1zM802 428h1v1h-1zM803 420h1v2h-1zM803 426h1v1h-1zM804 420h1v3h-1zM805 420h1v7h-1zM806 420h1v3h-1zM806 425h1v1h-1zM806 426h1v1h-1zM807 420h1v3h-1zM807 424h1v1h-1zM808 420h1v9h-1zM809 420h1v9h-1zM810 420h1v7h-1zM811 420h1v6h-1zM811 426h1v1h-1zM812 420h1v2h-1zM813 420h1v9h-1zM814 420h1v3h-1zM814 423h1v1h-1zM815 420h1v2h-1zM815 422h1v1h-1zM815 423h1v1h-1zM815 425h1v1h-1zM816 420h1v3h-1zM816 424h1v1h-1zM817 420h1v2h-1zM817 422h1v1h-1zM818 420h1v7h-1zM819 420h1v5h-1zM820 420h1v3h-1zM820 423h1v1h-1zM820 426h1v1h-1zM821 420h1v4h-1zM822 420h1v4h-1zM823 420h1v5h-1zM823 428h1v1h-1zM824 420h1v4h-1zM825 420h1v3h-1zM825 423h1v1h-1zM825 425h1v1h-1zM825 428h1v1h-1zM826 420h1v3h-1zM826 424h1v1h-1zM826 426h1v1h-1zM827 420h1v2h-1zM827 422h1v1h-1zM827 423h1v1h-1zM827 425h1v1h-1zM828 420h1v6h-1zM829 420h1v3h-1zM829 423h1v1h-1zM830 420h1v2h-1zM830 423h1v1h-1zM830 424h1v1h-1zM830 425h1v1h-1zM830 426h1v1h-1zM831 420h1v2h-1zM831 422h1v1h-1zM831 423h1v1h-1zM832 420h1v4h-1zM832 424h1v1h-1zM833 420h1v2h-1zM834 420h1v6h-1zM835 420h1v7h-1zM836 420h1v2h-1zM836 425h1v1h-1zM836 429h1v1h-1zM837 420h1v9h-1zM838 420h1v1h-1zM838 422h1v1h-1zM838 424h1v1h-1zM839 420h1v7h-1zM840 420h1v3h-1zM841 420h1v3h-1zM842 420h1v5h-1zM843 420h1v3h-1zM843 426h1v1h-1zM844 420h1v2h-1zM844 426h1v1h-1zM845 420h1v9h-1zM846 420h1v2h-1zM846 423h1v1h-1zM847 420h1v8h-1zM848 420h1v4h-1zM849 420h1v8h-1zM850 420h1v6h-1zM851 420h1v3h-1zM851 423h1v1h-1zM851 426h1v1h-1zM852 420h1v3h-1zM853 420h1v2h-1zM854 420h1v3h-1zM854 423h1v1h-1zM855 420h1v8h-1zM856 420h1v5h-1zM857 420h1v4h-1zM857 424h1v1h-1zM858 420h1v8h-1zM859 420h1v2h-1zM860 420h1v4h-1zM860 424h1v1h-1zM861 420h1v7h-1zM862 420h1v2h-1zM862 422h1v1h-1zM862 423h1v1h-1zM862 424h1v1h-1zM862 425h1v1h-1zM863 420h1v8h-1zM864 420h1v8h-1zM865 420h1v8h-1zM866 420h1v7h-1zM867 420h1v9h-1zM868 420h1v2h-1zM868 423h1v1h-1zM868 424h1v1h-1zM869 420h1v3h-1zM869 427h1v1h-1zM870 420h1v3h-1zM870 423h1v1h-1zM870 425h1v1h-1zM871 420h1v1h-1zM871 424h1v1h-1zM871 426h1v1h-1zM872 420h1v8h-1zM873 420h1v9h-1zM874 420h1v7h-1zM875 420h1v9h-1zM876 420h1v6h-1zM877 420h1v1h-1zM877 424h1v1h-1zM878 420h1v2h-1zM878 422h1v1h-1zM878 423h1v1h-1zM878 424h1v1h-1zM878 426h1v1h-1zM879 420h1v5h-1zM879 427h1v1h-1zM880 420h1v3h-1zM880 424h1v1h-1zM881 420h1v4h-1zM882 420h1v6h-1zM882 427h1v1h-1zM883 420h1v3h-1zM883 423h1v1h-1zM883 425h1v1h-1zM884 420h1v5h-1zM885 420h1v9h-1zM886 420h1v2h-1zM887 420h1v1h-1zM887 421h1v1h-1zM887 422h1v1h-1zM888 420h1v2h-1zM888 422h1v1h-1zM888 426h1v1h-1zM889 420h1v4h-1zM890 420h1v4h-1zM890 424h1v1h-1zM890 425h1v1h-1zM890 426h1v1h-1zM891 420h1v4h-1zM892 420h1v3h-1zM892 423h1v1h-1zM892 426h1v1h-1zM892 427h1v1h-1zM893 420h1v1h-1zM893 424h1v1h-1zM894 420h1v7h-1zM895 420h1v4h-1zM896 420h1v6h-1zM897 420h1v3h-1zM897 424h1v1h-1zM897 427h1v1h-1zM898 420h1v3h-1zM899 420h1v8h-1zM900 420h1v6h-1zM901 420h1v4h-1zM902 420h1v1h-1zM902 421h1v1h-1zM902 423h1v1h-1zM903 420h1v3h-1zM904 420h1v3h-1zM905 420h1v4h-1zM906 420h1v8h-1zM906 429h1v1h-1zM907 420h1v6h-1zM907 426h1v1h-1zM907 428h1v1h-1zM908 420h1v6h-1zM909 420h1v4h-1zM909 425h1v1h-1zM910 420h1v3h-1zM910 424h1v1h-1zM910 425h1v1h-1zM661 517h1v3h-1zM661 516h1v1h-1zM661 520h1v1h-1zM662 517h1v3h-1zM662 516h1v1h-1zM662 520h1v1h-1zM663 517h1v3h-1zM663 516h1v1h-1zM663 520h1v1h-1zM663 521h1v1h-1zM664 517h1v3h-1zM664 516h1v1h-1zM665 517h1v3h-1zM665 516h1v1h-1zM665 520h1v1h-1zM666 517h1v3h-1zM666 520h1v1h-1zM666 521h1v1h-1zM667 517h1v3h-1zM667 516h1v1h-1zM667 520h1v1h-1zM667 521h1v1h-1zM668 517h1v3h-1zM668 516h1v1h-1zM668 521h1v1h-1zM669 517h1v3h-1zM669 516h1v1h-1zM669 520h1v1h-1zM669 521h1v1h-1zM670 517h1v3h-1zM670 516h1v1h-1zM670 520h1v1h-1zM671 517h1v3h-1zM671 520h1v1h-1zM672 517h1v3h-1zM672 520h1v1h-1zM673 517h1v3h-1zM673 516h1v1h-1zM674 517h1v3h-1zM674 516h1v1h-1zM674 520h1v1h-1zM675 517h1v3h-1zM675 516h1v1h-1zM675 520h1v1h-1zM675 521h1v1h-1zM676 517h1v3h-1zM676 516h1v1h-1zM676 520h1v1h-1zM676 521h1v1h-1zM677 517h1v3h-1zM677 516h1v1h-1zM677 520h1v1h-1zM677 521h1v1h-1zM678 517h1v3h-1zM678 516h1v1h-1zM678 520h1v1h-1zM678 521h1v1h-1zM679 517h1v3h-1zM679 516h1v1h-1zM679 521h1v1h-1zM680 517h1v3h-1zM681 517h1v3h-1zM681 520h1v1h-1zM682 517h1v3h-1zM682 516h1v1h-1zM682 521h1v1h-1zM683 517h1v3h-1zM683 516h1v1h-1zM683 520h1v1h-1zM684 517h1v3h-1zM684 516h1v1h-1zM684 521h1v1h-1zM685 517h1v3h-1zM685 516h1v1h-1zM685 520h1v1h-1zM686 517h1v3h-1zM686 516h1v1h-1zM687 517h1v3h-1zM687 516h1v1h-1zM688 517h1v3h-1zM688 516h1v1h-1zM688 520h1v1h-1zM689 517h1v3h-1zM689 516h1v1h-1zM689 521h1v1h-1zM690 517h1v3h-1zM690 516h1v1h-1zM690 521h1v1h-1zM691 517h1v3h-1zM691 520h1v1h-1zM692 517h1v3h-1zM692 516h1v1h-1zM692 520h1v1h-1zM693 517h1v3h-1zM693 521h1v1h-1zM694 517h1v3h-1zM694 520h1v1h-1zM695 517h1v3h-1zM695 516h1v1h-1zM696 517h1v3h-1zM696 516h1v1h-1zM696 520h1v1h-1zM697 517h1v3h-1zM697 516h1v1h-1zM698 517h1v3h-1zM698 516h1v1h-1zM698 520h1v1h-1zM699 517h1v3h-1zM699 516h1v1h-1zM699 520h1v1h-1zM699 521h1v1h-1zM700 517h1v3h-1zM701 517h1v3h-1zM701 516h1v1h-1zM701 521h1v1h-1zM702 517h1v3h-1zM702 520h1v1h-1zM703 517h1v3h-1zM703 516h1v1h-1zM703 521h1v1h-1zM704 517h1v3h-1zM704 516h1v1h-1zM705 517h1v3h-1zM705 516h1v1h-1zM705 520h1v1h-1zM706 517h1v3h-1zM706 516h1v1h-1zM706 521h1v1h-1zM707 517h1v3h-1zM707 516h1v1h-1zM707 520h1v1h-1zM707 521h1v1h-1zM708 517h1v3h-1zM708 516h1v1h-1zM709 517h1v3h-1zM709 516h1v1h-1zM709 521h1v1h-1zM710 517h1v3h-1zM710 516h1v1h-1zM711 517h1v3h-1zM711 516h1v1h-1zM711 520h1v1h-1zM711 521h1v1h-1zM712 517h1v3h-1zM712 516h1v1h-1zM713 517h1v3h-1zM713 516h1v1h-1zM713 520h1v1h-1zM713 521h1v1h-1zM714 517h1v3h-1zM714 516h1v1h-1zM714 520h1v1h-1zM715 517h1v3h-1zM715 516h1v1h-1zM715 520h1v1h-1zM716 517h1v3h-1zM716 516h1v1h-1zM716 521h1v1h-1zM717 517h1v3h-1zM717 520h1v1h-1zM717 521h1v1h-1zM718 517h1v3h-1zM718 516h1v1h-1zM718 520h1v1h-1zM719 517h1v3h-1zM719 516h1v1h-1zM719 520h1v1h-1zM720 517h1v3h-1zM720 516h1v1h-1zM721 517h1v3h-1zM721 516h1v1h-1zM721 520h1v1h-1zM722 517h1v3h-1zM722 516h1v1h-1zM723 517h1v3h-1zM723 520h1v1h-1zM724 517h1v3h-1zM724 516h1v1h-1zM724 520h1v1h-1zM725 517h1v3h-1zM725 516h1v1h-1zM725 520h1v1h-1zM725 521h1v1h-1zM726 517h1v3h-1zM726 516h1v1h-1zM726 520h1v1h-1zM727 517h1v3h-1zM727 516h1v1h-1zM727 521h1v1h-1zM728 517h1v3h-1zM728 516h1v1h-1zM729 517h1v3h-1zM729 516h1v1h-1zM729 520h1v1h-1zM730 517h1v3h-1zM730 516h1v1h-1zM731 517h1v3h-1zM731 516h1v1h-1zM731 520h1v1h-1zM731 521h1v1h-1zM732 517h1v3h-1zM732 516h1v1h-1zM733 517h1v3h-1zM733 516h1v1h-1zM734 517h1v3h-1zM734 516h1v1h-1zM734 520h1v1h-1zM735 517h1v3h-1zM735 516h1v1h-1zM736 517h1v3h-1zM736 521h1v1h-1zM737 517h1v3h-1zM738 517h1v3h-1zM738 520h1v1h-1zM738 521h1v1h-1zM739 517h1v3h-1zM739 516h1v1h-1zM739 521h1v1h-1zM740 517h1v3h-1zM740 516h1v1h-1zM741 517h1v3h-1zM741 516h1v1h-1zM741 521h1v1h-1zM742 517h1v3h-1zM742 516h1v1h-1zM742 521h1v1h-1zM743 517h1v3h-1zM743 516h1v1h-1zM743 521h1v1h-1zM744 517h1v3h-1zM744 520h1v1h-1zM745 517h1v3h-1zM745 516h1v1h-1zM746 517h1v3h-1zM746 516h1v1h-1zM746 520h1v1h-1zM747 517h1v3h-1zM747 516h1v1h-1zM748 517h1v3h-1zM748 516h1v1h-1zM749 517h1v3h-1zM749 516h1v1h-1zM749 520h1v1h-1zM750 517h1v3h-1zM750 516h1v1h-1zM751 517h1v3h-1zM751 516h1v1h-1zM751 520h1v1h-1zM751 521h1v1h-1zM752 517h1v3h-1zM753 517h1v3h-1zM753 516h1v1h-1zM754 517h1v3h-1zM754 516h1v1h-1zM754 520h1v1h-1zM754 521h1v1h-1zM755 517h1v3h-1zM755 516h1v1h-1zM756 517h1v3h-1zM756 520h1v1h-1zM757 517h1v3h-1zM757 516h1v1h-1zM757 520h1v1h-1zM758 517h1v3h-1zM758 516h1v1h-1zM758 520h1v1h-1zM758 521h1v1h-1zM759 517h1v3h-1zM759 516h1v1h-1zM759 520h1v1h-1zM760 517h1v3h-1zM760 516h1v1h-1zM760 520h1v1h-1zM761 517h1v3h-1zM761 516h1v1h-1zM762 517h1v3h-1zM762 516h1v1h-1zM763 517h1v3h-1zM763 516h1v1h-1zM763 520h1v1h-1zM764 517h1v3h-1zM764 516h1v1h-1zM765 517h1v3h-1zM765 516h1v1h-1zM766 517h1v3h-1zM766 516h1v1h-1zM767 517h1v3h-1zM767 516h1v1h-1zM767 521h1v1h-1zM768 517h1v3h-1zM768 516h1v1h-1zM768 520h1v1h-1zM769 517h1v3h-1zM769 516h1v1h-1zM769 520h1v1h-1zM770 517h1v3h-1zM770 516h1v1h-1zM770 520h1v1h-1zM771 517h1v3h-1zM771 516h1v1h-1zM772 517h1v3h-1zM772 516h1v1h-1zM773 517h1v3h-1zM773 516h1v1h-1zM774 517h1v3h-1zM774 516h1v1h-1zM774 520h1v1h-1zM775 517h1v3h-1zM775 516h1v1h-1zM775 520h1v1h-1zM776 517h1v3h-1zM776 516h1v1h-1zM777 517h1v3h-1zM777 516h1v1h-1zM778 517h1v3h-1zM778 516h1v1h-1zM778 521h1v1h-1zM779 517h1v3h-1zM779 516h1v1h-1zM779 520h1v1h-1zM780 517h1v3h-1zM780 516h1v1h-1zM781 517h1v3h-1zM781 516h1v1h-1zM781 520h1v1h-1zM782 517h1v3h-1zM782 516h1v1h-1zM783 517h1v3h-1zM783 516h1v1h-1zM783 520h1v1h-1zM784 517h1v3h-1zM784 516h1v1h-1zM784 520h1v1h-1zM784 521h1v1h-1zM785 517h1v3h-1zM785 520h1v1h-1zM786 517h1v3h-1zM786 516h1v1h-1zM786 520h1v1h-1zM787 517h1v3h-1zM787 521h1v1h-1zM788 517h1v3h-1zM788 516h1v1h-1zM788 521h1v1h-1zM789 517h1v3h-1zM789 516h1v1h-1zM789 520h1v1h-1zM790 517h1v3h-1zM790 516h1v1h-1zM790 520h1v1h-1zM791 517h1v3h-1zM791 516h1v1h-1zM791 520h1v1h-1zM792 517h1v3h-1zM792 516h1v1h-1zM793 517h1v3h-1zM793 516h1v1h-1zM793 520h1v1h-1zM794 517h1v3h-1zM794 520h1v1h-1zM795 517h1v3h-1zM795 516h1v1h-1zM795 520h1v1h-1zM795 521h1v1h-1zM796 517h1v3h-1zM796 516h1v1h-1zM796 520h1v1h-1zM796 521h1v1h-1zM797 517h1v3h-1zM797 516h1v1h-1zM797 520h1v1h-1zM798 517h1v3h-1zM798 516h1v1h-1zM799 517h1v3h-1zM799 516h1v1h-1zM800 517h1v3h-1zM800 516h1v1h-1zM800 520h1v1h-1zM800 521h1v1h-1zM801 517h1v3h-1zM801 520h1v1h-1zM802 517h1v3h-1zM802 516h1v1h-1zM802 520h1v1h-1zM803 517h1v3h-1zM803 516h1v1h-1zM803 521h1v1h-1zM804 517h1v3h-1zM804 516h1v1h-1zM805 517h1v3h-1zM805 516h1v1h-1zM805 520h1v1h-1zM806 517h1v3h-1zM806 516h1v1h-1zM807 517h1v3h-1zM807 516h1v1h-1zM807 520h1v1h-1zM808 517h1v3h-1zM808 516h1v1h-1zM808 520h1v1h-1zM808 521h1v1h-1zM809 517h1v3h-1zM809 516h1v1h-1zM809 520h1v1h-1zM810 517h1v3h-1zM810 516h1v1h-1zM811 517h1v3h-1zM811 516h1v1h-1zM811 520h1v1h-1zM812 517h1v3h-1zM812 516h1v1h-1zM812 520h1v1h-1zM812 521h1v1h-1zM813 517h1v3h-1zM814 517h1v3h-1zM814 516h1v1h-1zM814 520h1v1h-1zM814 521h1v1h-1zM815 517h1v3h-1zM815 516h1v1h-1zM815 520h1v1h-1zM816 517h1v3h-1zM816 516h1v1h-1zM817 517h1v3h-1zM817 516h1v1h-1zM817 520h1v1h-1zM818 517h1v3h-1zM818 516h1v1h-1zM818 520h1v1h-1zM819 517h1v3h-1zM819 516h1v1h-1zM819 520h1v1h-1zM820 517h1v3h-1zM820 516h1v1h-1zM820 520h1v1h-1zM820 521h1v1h-1zM821 517h1v3h-1zM821 516h1v1h-1zM821 520h1v1h-1zM822 517h1v3h-1zM822 516h1v1h-1zM823 517h1v3h-1zM823 516h1v1h-1zM823 520h1v1h-1zM823 521h1v1h-1zM824 517h1v3h-1zM824 516h1v1h-1zM824 520h1v1h-1zM824 521h1v1h-1zM825 517h1v3h-1zM825 516h1v1h-1zM825 520h1v1h-1zM826 517h1v3h-1zM826 516h1v1h-1zM826 520h1v1h-1zM826 521h1v1h-1zM827 517h1v3h-1zM827 516h1v1h-1zM827 520h1v1h-1zM828 517h1v3h-1zM828 516h1v1h-1zM828 521h1v1h-1zM829 517h1v3h-1zM830 517h1v3h-1zM830 516h1v1h-1zM830 520h1v1h-1zM831 517h1v3h-1zM832 517h1v3h-1zM832 516h1v1h-1zM832 520h1v1h-1zM832 521h1v1h-1zM833 517h1v3h-1zM833 516h1v1h-1zM833 520h1v1h-1zM834 517h1v3h-1zM834 516h1v1h-1zM835 517h1v3h-1zM835 516h1v1h-1zM835 520h1v1h-1zM836 517h1v3h-1zM836 516h1v1h-1zM836 521h1v1h-1zM837 517h1v3h-1zM837 520h1v1h-1zM838 517h1v3h-1zM838 516h1v1h-1zM838 521h1v1h-1zM839 517h1v3h-1zM839 516h1v1h-1zM840 517h1v3h-1zM840 516h1v1h-1zM841 517h1v3h-1zM841 516h1v1h-1zM841 520h1v1h-1zM841 521h1v1h-1zM842 517h1v3h-1zM842 516h1v1h-1zM842 521h1v1h-1zM843 517h1v3h-1zM843 516h1v1h-1zM843 520h1v1h-1zM844 517h1v3h-1zM844 516h1v1h-1zM844 520h1v1h-1zM845 517h1v3h-1zM845 516h1v1h-1zM846 517h1v3h-1zM846 516h1v1h-1zM847 517h1v3h-1zM847 516h1v1h-1zM848 517h1v3h-1zM848 516h1v1h-1zM849 517h1v3h-1zM849 516h1v1h-1zM850 517h1v3h-1zM850 516h1v1h-1zM850 520h1v1h-1zM851 517h1v3h-1zM851 516h1v1h-1zM851 521h1v1h-1zM852 517h1v3h-1zM852 516h1v1h-1zM852 521h1v1h-1zM853 517h1v3h-1zM853 516h1v1h-1zM854 517h1v3h-1zM855 517h1v3h-1zM855 516h1v1h-1zM855 521h1v1h-1zM856 517h1v3h-1zM856 516h1v1h-1zM856 520h1v1h-1zM857 517h1v3h-1zM857 520h1v1h-1zM858 517h1v3h-1zM858 516h1v1h-1zM858 520h1v1h-1zM859 517h1v3h-1zM859 520h1v1h-1zM859 521h1v1h-1zM860 517h1v3h-1zM860 516h1v1h-1zM860 520h1v1h-1zM861 517h1v3h-1zM861 516h1v1h-1zM861 521h1v1h-1zM862 517h1v3h-1zM862 516h1v1h-1zM862 520h1v1h-1zM863 517h1v3h-1zM863 520h1v1h-1zM863 521h1v1h-1zM864 517h1v3h-1zM864 516h1v1h-1zM865 517h1v3h-1zM865 516h1v1h-1zM865 520h1v1h-1zM866 517h1v3h-1zM866 516h1v1h-1zM866 520h1v1h-1zM866 521h1v1h-1zM867 517h1v3h-1zM867 516h1v1h-1zM868 517h1v3h-1zM868 516h1v1h-1zM868 520h1v1h-1zM869 517h1v3h-1zM869 516h1v1h-1zM869 520h1v1h-1zM869 521h1v1h-1zM870 517h1v3h-1zM870 516h1v1h-1zM870 520h1v1h-1zM871 517h1v3h-1zM871 521h1v1h-1zM872 517h1v3h-1zM872 516h1v1h-1zM872 520h1v1h-1zM873 517h1v3h-1zM873 516h1v1h-1zM874 517h1v3h-1zM874 516h1v1h-1zM874 520h1v1h-1zM874 521h1v1h-1zM875 517h1v3h-1zM875 516h1v1h-1zM875 520h1v1h-1zM876 517h1v3h-1zM876 516h1v1h-1zM877 517h1v3h-1zM877 516h1v1h-1zM877 520h1v1h-1zM878 517h1v3h-1zM878 520h1v1h-1zM879 517h1v3h-1zM879 516h1v1h-1zM879 520h1v1h-1zM880 517h1v3h-1zM880 516h1v1h-1zM880 520h1v1h-1zM880 521h1v1h-1zM881 517h1v3h-1zM881 516h1v1h-1zM882 517h1v3h-1zM882 516h1v1h-1zM882 521h1v1h-1zM883 517h1v3h-1zM883 516h1v1h-1zM883 520h1v1h-1zM884 517h1v3h-1zM884 516h1v1h-1zM884 520h1v1h-1zM885 517h1v3h-1zM885 520h1v1h-1zM885 521h1v1h-1zM886 517h1v3h-1zM886 516h1v1h-1zM887 517h1v3h-1zM887 516h1v1h-1zM887 521h1v1h-1zM888 517h1v3h-1zM888 516h1v1h-1zM889 517h1v3h-1zM889 516h1v1h-1zM889 520h1v1h-1zM889 521h1v1h-1zM890 517h1v3h-1zM890 516h1v1h-1zM891 517h1v3h-1zM891 516h1v1h-1zM891 520h1v1h-1zM892 517h1v3h-1zM892 516h1v1h-1zM892 520h1v1h-1zM893 517h1v3h-1zM893 516h1v1h-1zM894 517h1v3h-1zM894 516h1v1h-1zM894 520h1v1h-1zM895 517h1v3h-1zM895 516h1v1h-1zM895 520h1v1h-1zM895 521h1v1h-1zM896 517h1v3h-1zM896 516h1v1h-1zM896 520h1v1h-1zM897 517h1v3h-1zM897 516h1v1h-1zM897 521h1v1h-1zM898 517h1v3h-1zM898 516h1v1h-1zM898 520h1v1h-1zM899 517h1v3h-1zM899 516h1v1h-1zM899 520h1v1h-1zM899 521h1v1h-1zM900 517h1v3h-1zM900 516h1v1h-1zM900 520h1v1h-1zM900 521h1v1h-1zM901 517h1v3h-1zM901 516h1v1h-1zM902 517h1v3h-1zM902 516h1v1h-1zM902 520h1v1h-1zM902 521h1v1h-1zM903 517h1v3h-1zM904 517h1v3h-1zM904 516h1v1h-1zM905 517h1v3h-1zM905 516h1v1h-1zM905 520h1v1h-1zM905 521h1v1h-1zM906 517h1v3h-1zM906 516h1v1h-1zM906 520h1v1h-1zM907 517h1v3h-1zM907 516h1v1h-1zM907 520h1v1h-1zM908 517h1v3h-1zM908 516h1v1h-1zM908 520h1v1h-1zM909 517h1v3h-1zM909 516h1v1h-1zM909 520h1v1h-1zM910 517h1v3h-1zM910 516h1v1h-1zM910 520h1v1h-1zM911 509h1v12h-1zM912 505h1v16h-1zM913 457h1v52h-1zM914 470h1v34h-1zM915 494h1v6h-1zM916 497h1v7h-1zM917 501h1v7h-1zM918 505h1v6h-1zM919 508h1v6h-1zM920 511h1v5h-1zM921 513h1v5h-1zM922 515h1v4h-1zM923 516h1v4h-1zM924 517h1v3h-1zM925 517h1v3h-1zM19 516h141v4h-141zM425 516h235v4h-235zM925 516h94v4h-94zM19 515h3v1h-3zM21 515h2v1h-2zM35 515h1v1h-1zM37 515h2v1h-2zM41 515h2v1h-2zM43 515h3v1h-3zM45 515h1v1h-1zM47 515h2v1h-2zM49 515h3v1h-3zM57 515h1v1h-1zM59 515h3v1h-3zM63 515h3v1h-3zM65 515h3v1h-3zM67 515h2v1h-2zM69 515h3v1h-3zM73 515h3v1h-3zM75 515h2v1h-2zM77 515h3v1h-3zM83 515h2v1h-2zM89 515h2v1h-2zM93 515h3v1h-3zM95 515h2v1h-2zM99 515h1v1h-1zM103 515h3v1h-3zM105 515h3v1h-3zM123 515h3v1h-3zM125 515h1v1h-1zM131 515h1v1h-1zM135 515h2v1h-2zM139 515h3v1h-3zM145 515h2v1h-2zM427 515h1v1h-1zM435 515h1v1h-1zM437 515h1v1h-1zM447 515h3v1h-3zM449 515h3v1h-3zM453 515h1v1h-1zM457 515h1v1h-1zM467 515h1v1h-1zM471 515h2v1h-2zM473 515h1v1h-1zM475 515h2v1h-2zM477 515h2v1h-2zM479 515h1v1h-1zM481 515h2v1h-2zM485 515h1v1h-1zM487 515h3v1h-3zM491 515h1v1h-1zM493 515h2v1h-2zM499 515h2v1h-2zM505 515h1v1h-1zM507 515h3v1h-3zM517 515h3v1h-3zM519 515h1v1h-1zM521 515h2v1h-2zM529 515h3v1h-3zM531 515h3v1h-3zM537 515h2v1h-2zM539 515h3v1h-3zM545 515h3v1h-3zM549 515h1v1h-1zM557 515h2v1h-2zM561 515h3v1h-3zM563 515h2v1h-2zM565 515h2v1h-2zM577 515h2v1h-2zM579 515h2v1h-2zM581 515h1v1h-1zM587 515h3v1h-3zM591 515h1v1h-1zM597 515h2v1h-2zM601 515h2v1h-2zM609 515h1v1h-1zM615 515h3v1h-3zM621 515h2v1h-2zM623 515h3v1h-3zM631 515h1v1h-1zM639 515h1v1h-1zM641 515h1v1h-1zM643 515h1v1h-1zM645 515h3v1h-3zM653 515h2v1h-2zM657 515h3v1h-3zM659 515h2v1h-2zM925 515h2v1h-2zM929 515h3v1h-3zM935 515h2v1h-2zM939 515h3v1h-3zM943 515h1v1h-1zM947 515h2v1h-2zM953 515h3v1h-3zM957 515h3v1h-3zM965 515h2v1h-2zM977 515h1v1h-1zM979 515h3v1h-3zM983 515h1v1h-1zM985 515h1v1h-1zM997 515h1v1h-1zM999 515h3v1h-3zM1009 515h3v1h-3zM1015 515h2v1h-2z" fill="#00f2f2"/>
<path d="M172 425h1v98h-1zM187 425h1v98h-1zM203 425h1v98h-1zM219 425h1v98h-1zM234 425h1v98h-1zM250 425h1v98h-1zM266 425h1v98h-1zM283 425h1v98h-1zM297 425h1v98h-1zM299 425h1v98h-1zM312 425h1v98h-1zM314 425h1v98h-1zM329 425h1v98h-1zM344 425h1v98h-1zM346 425h1v98h-1zM360 425h1v98h-1zM362 425h1v98h-1zM377 425h1v98h-1zM392 425h1v98h-1zM394 425h1v98h-1zM407 425h1v98h-1zM409 425h1v98h-1zM672 425h1v98h-1zM687 425h1v98h-1zM703 425h1v98h-1zM719 425h1v98h-1zM734 425h1v98h-1zM750 425h1v98h-1zM766 425h1v98h-1zM783 425h1v98h-1zM797 425h1v98h-1zM799 425h1v98h-1zM812 425h1v98h-1zM814 425h1v98h-1zM829 425h1v98h-1zM844 425h1v98h-1zM846 425h1v98h-1zM860 425h1v98h-1zM862 425h1v98h-1zM877 425h1v98h-1zM892 425h1v98h-1zM894 425h1v98h-1zM907 425h1v98h-1zM909 425h1v98h-1zM19 520h1v1h-1zM37 520h1v1h-1zM41 520h1v1h-1zM59 520h1v1h-1zM75 520h1v1h-1zM81 520h1v1h-1zM89 520h1v1h-1zM99 520h1v1h-1zM103 520h1v1h-1zM105 520h1v1h-1zM113 520h1v1h-1zM115 520h1v1h-1zM125 520h1v1h-1zM141 520h1v1h-1zM153 520h1v1h-1zM435 520h1v1h-1zM437 520h1v1h-1zM439 520h1v1h-1zM455 520h1v1h-1zM457 520h1v1h-1zM463 520h1v1h-1zM465 520h1v1h-1zM475 520h1v1h-1zM497 520h1v1h-1zM499 520h1v1h-1zM513 520h1v1h-1zM521 520h1v1h-1zM529 520h1v1h-1zM569 520h1v1h-1zM577 520h1v1h-1zM589 520h1v1h-1zM593 520h1v1h-1zM603 520h1v1h-1zM615 520h1v1h-1zM617 520h1v1h-1zM629 520h1v1h-1zM633 520h1v1h-1zM639 520h1v1h-1zM641 520h1v1h-1zM643 520h1v1h-1zM655 520h1v1h-1zM943 520h1v1h-1zM951 520h1v1h-1zM963 520h1v1h-1zM969 520h1v1h-1zM977 520h1v1h-1zM983 520h1v1h-1zM989 520h1v1h-1zM1001 520h1v1h-1zM1003 520h1v1h-1zM1005 520h1v1h-1zM1009 520h1v1h-1z" fill="#008c8c"/>
<path d="M171 422h1v101h-1zM173 421h1v102h-1zM186 422h1v101h-1zM188 421h1v102h-1zM202 421h1v102h-1zM204 422h1v101h-1zM218 421h1v102h-1zM220 422h1v101h-1zM233 421h1v102h-1zM235 422h1v101h-1zM249 421h1v102h-1zM251 421h1v102h-1zM265 421h1v102h-1zM267 422h1v101h-1zM282 421h1v102h-1zM284 421h1v102h-1zM296 424h1v99h-1zM298 421h1v102h-1zM300 424h1v99h-1zM311 422h1v101h-1zM313 421h1v102h-1zM315 424h1v99h-1zM328 421h1v102h-1zM330 421h1v102h-1zM343 424h1v99h-1zM345 421h1v102h-1zM347 424h1v99h-1zM359 421h1v102h-1zM361 422h1v101h-1zM363 422h1v101h-1zM376 422h1v101h-1zM378 421h1v102h-1zM391 421h1v102h-1zM393 421h1v102h-1zM395 422h1v101h-1zM406 421h1v102h-1zM408 421h1v102h-1zM410 421h1v102h-1zM161 420h1v98h-1zM162 420h1v98h-1zM163 420h1v98h-1zM174 459h1v62h-1zM671 421h1v102h-1zM673 421h1v102h-1zM686 421h1v102h-1zM688 424h1v99h-1zM702 422h1v101h-1zM704 424h1v99h-1zM718 421h1v102h-1zM720 424h1v99h-1zM733 421h1v102h-1zM735 424h1v99h-1zM749 421h1v102h-1zM751 424h1v99h-1zM765 421h1v102h-1zM767 422h1v101h-1zM782 424h1v99h-1zM784 421h1v102h-1zM796 422h1v101h-1zM798 422h1v101h-1zM800 421h1v102h-1zM811 424h1v99h-1zM813 421h1v102h-1zM815 422h1v101h-1zM828 424h1v99h-1zM830 421h1v102h-1zM843 421h1v102h-1zM845 422h1v101h-1zM847 424h1v99h-1zM859 422h1v101h-1zM861 421h1v102h-1zM863 421h1v102h-1zM876 422h1v101h-1zM878 422h1v101h-1zM891 421h1v102h-1zM893 421h1v102h-1zM895 421h1v102h-1zM906 424h1v99h-1zM908 422h1v101h-1zM910 421h1v102h-1zM661 420h1v98h-1zM662 420h1v98h-1zM663 420h1v98h-1zM674 459h1v62h-1z" fill="#fff"/>
<path d="M164 522h1v1h-1zM166 522h1v1h-1zM170 522h1v1h-1zM175 522h1v1h-1zM179 522h1v1h-1zM182 522h1v1h-1zM185 522h1v1h-1zM191 522h1v1h-1zM195 522h1v1h-1zM197 522h1v1h-1zM201 522h1v1h-1zM211 522h1v1h-1zM217 522h1v1h-1zM221 522h1v1h-1zM222 522h1v1h-1zM226 522h1v1h-1zM228 522h1v1h-1zM230 522h1v1h-1zM232 522h1v1h-1zM236 522h1v1h-1zM248 522h1v1h-1zM254 522h1v1h-1zM259 522h1v1h-1zM262 522h1v1h-1zM264 522h1v1h-1zM273 522h1v1h-1zM276 522h1v1h-1zM277 522h1v1h-1zM278 522h1v1h-1zM285 522h1v1h-1zM289 522h1v1h-1zM291 522h1v1h-1zM292 522h1v1h-1zM294 522h1v1h-1zM295 522h1v1h-1zM305 522h1v1h-1zM308 522h1v1h-1zM319 522h1v1h-1zM320 522h1v1h-1zM323 522h1v1h-1zM324 522h1v1h-1zM325 522h1v1h-1zM327 522h1v1h-1zM332 522h1v1h-1zM333 522h1v1h-1zM335 522h1v1h-1zM337 522h1v1h-1zM338 522h1v1h-1zM339 522h1v1h-1zM341 522h1v1h-1zM351 522h1v1h-1zM358 522h1v1h-1zM367 522h1v1h-1zM370 522h1v1h-1zM371 522h1v1h-1zM380 522h1v1h-1zM384 522h1v1h-1zM387 522h1v1h-1zM399 522h1v1h-1zM405 522h1v1h-1zM662 522h1v1h-1zM664 522h1v1h-1zM667 522h1v1h-1zM682 522h1v1h-1zM685 522h1v1h-1zM689 522h1v1h-1zM690 522h1v1h-1zM692 522h1v1h-1zM694 522h1v1h-1zM695 522h1v1h-1zM699 522h1v1h-1zM701 522h1v1h-1zM706 522h1v1h-1zM707 522h1v1h-1zM708 522h1v1h-1zM712 522h1v1h-1zM716 522h1v1h-1zM722 522h1v1h-1zM724 522h1v1h-1zM728 522h1v1h-1zM732 522h1v1h-1zM738 522h1v1h-1zM740 522h1v1h-1zM741 522h1v1h-1zM742 522h1v1h-1zM743 522h1v1h-1zM747 522h1v1h-1zM752 522h1v1h-1zM753 522h1v1h-1zM754 522h1v1h-1zM756 522h1v1h-1zM758 522h1v1h-1zM764 522h1v1h-1zM768 522h1v1h-1zM769 522h1v1h-1zM775 522h1v1h-1zM778 522h1v1h-1zM779 522h1v1h-1zM780 522h1v1h-1zM788 522h1v1h-1zM803 522h1v1h-1zM804 522h1v1h-1zM806 522h1v1h-1zM808 522h1v1h-1zM816 522h1v1h-1zM822 522h1v1h-1zM824 522h1v1h-1zM832 522h1v1h-1zM837 522h1v1h-1zM842 522h1v1h-1zM848 522h1v1h-1zM849 522h1v1h-1zM850 522h1v1h-1zM852 522h1v1h-1zM853 522h1v1h-1zM856 522h1v1h-1zM857 522h1v1h-1zM865 522h1v1h-1zM867 522h1v1h-1zM874 522h1v1h-1zM879 522h1v1h-1zM882 522h1v1h-1zM886 522h1v1h-1zM887 522h1v1h-1zM897 522h1v1h-1zM903 522h1v1h-1zM904 522h1v1h-1zM905 522h1v1h-1z" fill="#007070"/>
<path d="M19 616h141v4h-141zM411 616h249v4h-249zM911 616h108v4h-108zM161 582h249v4h-249zM661 582h249v4h-249z" fill="#ee00ee"/>
<path d="M19 621h1v1h-1zM20 620h1v1h-1zM21 620h1v1h-1zM21 621h1v1h-1zM22 620h1v1h-1zM24 620h1v1h-1zM29 620h1v1h-1zM30 620h1v1h-1zM33 620h1v1h-1zM34 620h1v1h-1zM35 620h1v1h-1zM36 620h1v1h-1zM38 620h1v1h-1zM41 620h1v1h-1zM42 620h1v1h-1zM42 621h1v1h-1zM45 620h1v1h-1zM47 620h1v1h-1zM49 620h1v1h-1zM54 620h1v1h-1zM55 620h1v1h-1zM58 620h1v1h-1zM59 620h1v1h-1zM60 620h1v1h-1zM61 620h1v1h-1zM62 620h1v1h-1zM64 620h1v1h-1zM68 620h1v1h-1zM69 620h1v1h-1zM69 621h1v1h-1zM70 620h1v1h-1zM74 620h1v1h-1zM77 620h1v1h-1zM83 621h1v1h-1zM85 621h1v1h-1zM87 620h1v1h-1zM89 620h1v1h-1zM91 620h1v1h-1zM94 621h1v1h-1zM96 620h1v1h-1zM97 620h1v1h-1zM97 621h1v1h-1zM98 620h1v1h-1zM100 620h1v1h-1zM100 621h1v1h-1zM101 621h1v1h-1zM102 620h1v1h-1zM104 620h1v1h-1zM105 620h1v1h-1zM107 620h1v1h-1zM108 620h1v1h-1zM108 621h1v1h-1zM109 620h1v1h-1zM110 621h1v1h-1zM113 620h1v1h-1zM114 620h1v1h-1zM115 620h1v1h-1zM115 621h1v1h-1zM117 620h1v1h-1zM119 620h1v1h-1zM123 620h1v1h-1zM125 620h1v1h-1zM125 621h1v1h-1zM126 620h1v1h-1zM128 620h1v1h-1zM130 620h1v1h-1zM131 621h1v1h-1zM133 620h1v1h-1zM138 621h1v1h-1zM139 621h1v1h-1zM141 620h1v1h-1zM144 621h1v1h-1zM146 620h1v1h-1zM147 620h1v1h-1zM151 620h1v1h-1zM152 620h1v1h-1zM153 620h1v1h-1zM156 620h1v1h-1zM157 620h1v1h-1zM158 620h1v1h-1zM412 620h1v1h-1zM418 621h1v1h-1zM419 620h1v1h-1zM420 620h1v1h-1zM421 620h1v1h-1zM422 620h1v1h-1zM424 620h1v1h-1zM425 620h1v1h-1zM427 620h1v1h-1zM428 620h1v1h-1zM428 621h1v1h-1zM429 620h1v1h-1zM430 620h1v1h-1zM431 620h1v1h-1zM431 621h1v1h-1zM432 620h1v1h-1zM433 620h1v1h-1zM434 620h1v1h-1zM435 620h1v1h-1zM435 621h1v1h-1zM436 620h1v1h-1zM438 620h1v1h-1zM439 620h1v1h-1zM440 620h1v1h-1zM444 620h1v1h-1zM449 621h1v1h-1zM452 620h1v1h-1zM456 621h1v1h-1zM457 620h1v1h-1zM458 620h1v1h-1zM459 620h1v1h-1zM461 620h1v1h-1zM463 620h1v1h-1zM463 621h1v1h-1zM465 621h1v1h-1zM466 620h1v1h-1zM467 620h1v1h-1zM471 620h1v1h-1zM472 620h1v1h-1zM473 620h1v1h-1zM476 620h1v1h-1zM477 620h1v1h-1zM478 620h1v1h-1zM479 620h1v1h-1zM480 620h1v1h-1zM481 620h1v1h-1zM482 620h1v1h-1zM484 620h1v1h-1zM485 620h1v1h-1zM486 620h1v1h-1zM489 620h1v1h-1zM490 620h1v1h-1zM492 621h1v1h-1zM493 620h1v1h-1zM494 620h1v1h-1zM495 620h1v1h-1zM498 620h1v1h-1zM500 621h1v1h-1zM501 620h1v1h-1zM502 620h1v1h-1zM504 620h1v1h-1zM505 620h1v1h-1zM506 620h1v1h-1zM507 620h1v1h-1zM508 620h1v1h-1zM510 621h1v1h-1zM511 620h1v1h-1zM514 620h1v1h-1zM514 621h1v1h-1zM517 620h1v1h-1zM519 621h1v1h-1zM520 620h1v1h-1zM522 620h1v1h-1zM523 621h1v1h-1zM525 620h1v1h-1zM526 620h1v1h-1zM528 620h1v1h-1zM531 620h1v1h-1zM533 620h1v1h-1zM534 620h1v1h-1zM537 620h1v1h-1zM542 620h1v1h-1zM542 621h1v1h-1zM543 621h1v1h-1zM544 620h1v1h-1zM545 620h1v1h-1zM546 620h1v1h-1zM547 621h1v1h-1zM549 620h1v1h-1zM551 620h1v1h-1zM551 621h1v1h-1zM552 620h1v1h-1zM555 620h1v1h-1zM560 620h1v1h-1zM560 621h1v1h-1zM561 620h1v1h-1zM562 620h1v1h-1zM563 621h1v1h-1zM564 620h1v1h-1zM565 620h1v1h-1zM566 620h1v1h-1zM567 621h1v1h-1zM568 620h1v1h-1zM569 620h1v1h-1zM570 620h1v1h-1zM571 620h1v1h-1zM572 620h1v1h-1zM575 620h1v1h-1zM575 621h1v1h-1zM577 621h1v1h-1zM578 620h1v1h-1zM581 620h1v1h-1zM582 621h1v1h-1zM585 620h1v1h-1zM586 620h1v1h-1zM587 620h1v1h-1zM589 620h1v1h-1zM590 620h1v1h-1zM593 620h1v1h-1zM594 621h1v1h-1zM595 620h1v1h-1zM597 620h1v1h-1zM599 621h1v1h-1zM600 620h1v1h-1zM602 620h1v1h-1zM603 620h1v1h-1zM604 620h1v1h-1zM604 621h1v1h-1zM605 620h1v1h-1zM605 621h1v1h-1zM608 620h1v1h-1zM609 620h1v1h-1zM610 620h1v1h-1zM611 620h1v1h-1zM612 620h1v1h-1zM614 620h1v1h-1zM615 621h1v1h-1zM616 620h1v1h-1zM617 620h1v1h-1zM618 620h1v1h-1zM619 621h1v1h-1zM620 620h1v1h-1zM620 621h1v1h-1zM621 620h1v1h-1zM622 620h1v1h-1zM623 620h1v1h-1zM624 620h1v1h-1zM626 620h1v1h-1zM627 621h1v1h-1zM630 620h1v1h-1zM631 620h1v1h-1zM631 621h1v1h-1zM632 620h1v1h-1zM633 620h1v1h-1zM636 620h1v1h-1zM637 620h1v1h-1zM637 621h1v1h-1zM638 620h1v1h-1zM638 621h1v1h-1zM639 620h1v1h-1zM640 620h1v1h-1zM641 621h1v1h-1zM642 620h1v1h-1zM643 620h1v1h-1zM644 620h1v1h-1zM645 620h1v1h-1zM646 620h1v1h-1zM647 620h1v1h-1zM648 621h1v1h-1zM649 620h1v1h-1zM650 621h1v1h-1zM658 620h1v1h-1zM911 620h1v1h-1zM916 620h1v1h-1zM916 621h1v1h-1zM917 620h1v1h-1zM919 620h1v1h-1zM920 620h1v1h-1zM922 621h1v1h-1zM924 620h1v1h-1zM926 620h1v1h-1zM927 620h1v1h-1zM928 620h1v1h-1zM930 620h1v1h-1zM931 621h1v1h-1zM932 620h1v1h-1zM932 621h1v1h-1zM935 620h1v1h-1zM936 620h1v1h-1zM937 620h1v1h-1zM939 620h1v1h-1zM941 620h1v1h-1zM943 620h1v1h-1zM944 621h1v1h-1zM945 620h1v1h-1zM946 620h1v1h-1zM947 620h1v1h-1zM949 620h1v1h-1zM951 620h1v1h-1zM951 621h1v1h-1zM952 620h1v1h-1zM954 620h1v1h-1zM956 620h1v1h-1zM956 621h1v1h-1zM957 620h1v1h-1zM957 621h1v1h-1zM959 621h1v1h-1zM960 620h1v1h-1zM963 620h1v1h-1zM964 621h1v1h-1zM965 620h1v1h-1zM970 620h1v1h-1zM971 620h1v1h-1zM976 620h1v1h-1zM978 621h1v1h-1zM980 620h1v1h-1zM981 621h1v1h-1zM983 621h1v1h-1zM984 620h1v1h-1zM985 620h1v1h-1zM988 620h1v1h-1zM990 620h1v1h-1zM991 620h1v1h-1zM993 620h1v1h-1zM994 620h1v1h-1zM994 621h1v1h-1zM995 620h1v1h-1zM999 620h1v1h-1zM1000 620h1v1h-1zM1001 620h1v1h-1zM1005 621h1v1h-1zM1006 620h1v1h-1zM1007 620h1v1h-1zM1008 621h1v1h-1zM1011 620h1v1h-1zM1012 620h1v1h-1zM1013 620h1v1h-1zM1015 621h1v1h-1zM1018 620h1v1h-1zM161 586h1v1h-1zM163 586h1v1h-1zM164 586h1v1h-1zM166 586h1v1h-1zM168 586h1v1h-1zM170 586h1v1h-1zM170 587h1v1h-1zM171 586h1v1h-1zM174 586h1v1h-1zM175 586h1v1h-1zM175 587h1v1h-1zM176 586h1v1h-1zM176 587h1v1h-1zM179 586h1v1h-1zM180 586h1v1h-1zM181 586h1v1h-1zM183 586h1v1h-1zM184 587h1v1h-1zM185 586h1v1h-1zM186 586h1v1h-1zM187 586h1v1h-1zM189 586h1v1h-1zM190 586h1v1h-1zM192 587h1v1h-1zM193 586h1v1h-1zM194 586h1v1h-1zM195 586h1v1h-1zM195 587h1v1h-1zM198 587h1v1h-1zM199 586h1v1h-1zM200 586h1v1h-1zM202 586h1v1h-1zM203 586h1v1h-1zM204 587h1v1h-1zM206 586h1v1h-1zM207 587h1v1h-1zM210 587h1v1h-1zM212 586h1v1h-1zM214 586h1v1h-1zM215 586h1v1h-1zM216 586h1v1h-1zM217 586h1v1h-1zM217 587h1v1h-1zM218 586h1v1h-1zM220 586h1v1h-1zM221 586h1v1h-1zM221 587h1v1h-1zM223 586h1v1h-1zM223 587h1v1h-1zM224 586h1v1h-1zM225 586h1v1h-1zM225 587h1v1h-1zM226 586h1v1h-1zM227 586h1v1h-1zM227 587h1v1h-1zM228 586h1v1h-1zM230 586h1v1h-1zM231 586h1v1h-1zM231 587h1v1h-1zM232 586h1v1h-1zM233 586h1v1h-1zM236 586h1v1h-1zM240 586h1v1h-1zM240 587h1v1h-1zM241 587h1v1h-1zM242 586h1v1h-1zM244 586h1v1h-1zM245 587h1v1h-1zM246 586h1v1h-1zM246 587h1v1h-1zM247 586h1v1h-1zM249 587h1v1h-1zM250 586h1v1h-1zM254 586h1v1h-1zM255 586h1v1h-1zM256 586h1v1h-1zM258 586h1v1h-1zM259 586h1v1h-1zM259 587h1v1h-1zM260 586h1v1h-1zM261 586h1v1h-1zM264 586h1v1h-1zM265 586h1v1h-1zM265 587h1v1h-1zM266 587h1v1h-1zM267 586h1v1h-1zM268 586h1v1h-1zM268 587h1v1h-1zM270 586h1v1h-1zM271 586h1v1h-1zM273 586h1v1h-1zM274 586h1v1h-1zM277 586h1v1h-1zM279 586h1v1h-1zM280 586h1v1h-1zM281 586h1v1h-1zM283 587h1v1h-1zM284 587h1v1h-1zM286 586h1v1h-1zM287 586h1v1h-1zM288 587h1v1h-1zM292 586h1v1h-1zM292 587h1v1h-1zM293 587h1v1h-1zM294 586h1v1h-1zM296 586h1v1h-1zM297 586h1v1h-1zM298 586h1v1h-1zM299 587h1v1h-1zM300 586h1v1h-1zM300 587h1v1h-1zM301 586h1v1h-1zM302 586h1v1h-1zM303 586h1v1h-1zM304 586h1v1h-1zM304 587h1v1h-1zM305 586h1v1h-1zM307 586h1v1h-1zM308 586h1v1h-1zM311 586h1v1h-1zM313 586h1v1h-1zM314 586h1v1h-1zM314 587h1v1h-1zM315 586h1v1h-1zM317 587h1v1h-1zM319 586h1v1h-1zM319 587h1v1h-1zM320 586h1v1h-1zM321 587h1v1h-1zM326 586h1v1h-1zM328 586h1v1h-1zM328 587h1v1h-1zM329 586h1v1h-1zM329 587h1v1h-1zM330 586h1v1h-1zM330 587h1v1h-1zM331 586h1v1h-1zM331 587h1v1h-1zM333 586h1v1h-1zM334 586h1v1h-1zM337 586h1v1h-1zM341 586h1v1h-1zM342 586h1v1h-1zM342 587h1v1h-1zM343 587h1v1h-1zM345 586h1v1h-1zM346 586h1v1h-1zM346 587h1v1h-1zM347 586h1v1h-1zM348 586h1v1h-1zM350 586h1v1h-1zM351 586h1v1h-1zM353 586h1v1h-1zM353 587h1v1h-1zM354 586h1v1h-1zM355 586h1v1h-1zM355 587h1v1h-1zM360 587h1v1h-1zM361 586h1v1h-1zM364 586h1v1h-1zM364 587h1v1h-1zM365 586h1v1h-1zM366 586h1v1h-1zM367 586h1v1h-1zM368 586h1v1h-1zM369 586h1v1h-1zM371 587h1v1h-1zM377 586h1v1h-1zM380 586h1v1h-1zM382 587h1v1h-1zM385 586h1v1h-1zM387 586h1v1h-1zM389 586h1v1h-1zM390 587h1v1h-1zM392 586h1v1h-1zM393 586h1v1h-1zM394 586h1v1h-1zM398 587h1v1h-1zM402 586h1v1h-1zM403 586h1v1h-1zM404 586h1v1h-1zM404 587h1v1h-1zM405 586h1v1h-1zM405 587h1v1h-1zM409 586h1v1h-1zM248 581h1v1h-1zM251 581h1v1h-1zM254 581h1v1h-1zM347 581h1v1h-1zM374 581h1v1h-1zM401 581h1v1h-1zM407 581h1v1h-1zM661 586h1v1h-1zM661 587h1v1h-1zM665 586h1v1h-1zM666 587h1v1h-1zM667 586h1v1h-1zM667 587h1v1h-1zM669 586h1v1h-1zM670 586h1v1h-1zM671 586h1v1h-1zM671 587h1v1h-1zM672 586h1v1h-1zM673 586h1v1h-1zM674 586h1v1h-1zM675 586h1v1h-1zM677 586h1v1h-1zM678 586h1v1h-1zM681 587h1v1h-1zM682 586h1v1h-1zM684 586h1v1h-1zM685 587h1v1h-1zM686 586h1v1h-1zM687 586h1v1h-1zM688 586h1v1h-1zM690 586h1v1h-1zM692 586h1v1h-1zM693 587h1v1h-1zM694 586h1v1h-1zM695 587h1v1h-1zM697 586h1v1h-1zM698 586h1v1h-1zM699 586h1v1h-1zM700 586h1v1h-1zM701 586h1v1h-1zM703 586h1v1h-1zM704 586h1v1h-1zM704 587h1v1h-1zM706 586h1v1h-1zM708 587h1v1h-1zM709 587h1v1h-1zM714 586h1v1h-1zM715 586h1v1h-1zM715 587h1v1h-1zM718 587h1v1h-1zM723 587h1v1h-1zM724 587h1v1h-1zM725 586h1v1h-1zM726 586h1v1h-1zM728 586h1v1h-1zM728 587h1v1h-1zM729 586h1v1h-1zM730 586h1v1h-1zM732 586h1v1h-1zM733 586h1v1h-1zM733 587h1v1h-1zM734 586h1v1h-1zM737 586h1v1h-1zM738 587h1v1h-1zM739 586h1v1h-1zM741 586h1v1h-1zM741 587h1v1h-1zM742 586h1v1h-1zM743 586h1v1h-1zM744 586h1v1h-1zM745 587h1v1h-1zM746 586h1v1h-1zM748 586h1v1h-1zM748 587h1v1h-1zM749 586h1v1h-1zM750 586h1v1h-1zM752 586h1v1h-1zM753 586h1v1h-1zM754 587h1v1h-1zM755 586h1v1h-1zM756 587h1v1h-1zM758 586h1v1h-1zM758 587h1v1h-1zM760 586h1v1h-1zM760 587h1v1h-1zM761 586h1v1h-1zM764 586h1v1h-1zM764 587h1v1h-1zM765 586h1v1h-1zM768 586h1v1h-1zM770 586h1v1h-1zM771 586h1v1h-1zM774 586h1v1h-1zM775 586h1v1h-1zM776 586h1v1h-1zM777 586h1v1h-1zM778 586h1v1h-1zM780 587h1v1h-1zM783 586h1v1h-1zM784 586h1v1h-1zM785 586h1v1h-1zM787 586h1v1h-1zM792 586h1v1h-1zM794 586h1v1h-1zM795 586h1v1h-1zM796 586h1v1h-1zM797 586h1v1h-1zM798 587h1v1h-1zM799 586h1v1h-1zM800 586h1v1h-1zM803 586h1v1h-1zM805 587h1v1h-1zM809 586h1v1h-1zM810 586h1v1h-1zM813 587h1v1h-1zM815 586h1v1h-1zM818 586h1v1h-1zM818 587h1v1h-1zM819 586h1v1h-1zM821 586h1v1h-1zM821 587h1v1h-1zM823 587h1v1h-1zM824 586h1v1h-1zM826 586h1v1h-1zM828 586h1v1h-1zM828 587h1v1h-1zM830 586h1v1h-1zM831 586h1v1h-1zM832 586h1v1h-1zM832 587h1v1h-1zM833 586h1v1h-1zM834 586h1v1h-1zM835 586h1v1h-1zM837 586h1v1h-1zM839 586h1v1h-1zM841 586h1v1h-1zM842 586h1v1h-1zM843 586h1v1h-1zM844 586h1v1h-1zM844 587h1v1h-1zM845 586h1v1h-1zM846 586h1v1h-1zM848 586h1v1h-1zM849 586h1v1h-1zM850 586h1v1h-1zM852 586h1v1h-1zM852 587h1v1h-1zM853 586h1v1h-1zM853 587h1v1h-1zM854 586h1v1h-1zM854 587h1v1h-1zM857 586h1v1h-1zM857 587h1v1h-1zM859 587h1v1h-1zM860 587h1v1h-1zM862 587h1v1h-1zM864 586h1v1h-1zM865 586h1v1h-1zM866 586h1v1h-1zM867 586h1v1h-1zM868 586h1v1h-1zM871 586h1v1h-1zM872 587h1v1h-1zM874 586h1v1h-1zM874 587h1v1h-1zM875 586h1v1h-1zM877 587h1v1h-1zM878 586h1v1h-1zM879 586h1v1h-1zM880 586h1v1h-1zM882 586h1v1h-1zM883 587h1v1h-1zM884 586h1v1h-1zM885 586h1v1h-1zM888 586h1v1h-1zM889 586h1v1h-1zM889 587h1v1h-1zM892 586h1v1h-1zM894 586h1v1h-1zM895 587h1v1h-1zM896 586h1v1h-1zM896 587h1v1h-1zM898 586h1v1h-1zM898 587h1v1h-1zM899 586h1v1h-1zM900 586h1v1h-1zM902 586h1v1h-1zM903 586h1v1h-1zM905 586h1v1h-1zM907 586h1v1h-1zM908 586h1v1h-1zM909 586h1v1h-1zM670 581h1v1h-1zM706 581h1v1h-1zM745 581h1v1h-1zM760 581h1v1h-1zM883 581h1v1h-1zM898 581h1v1h-1zM160 579h1v42h-1zM410 583h1v38h-1zM660 580h1v41h-1zM910 583h1v39h-1z" fill="#6a006a"/>
<path d="M19 620h1v1h-1zM26 620h1v1h-1zM27 620h1v1h-1zM40 620h1v1h-1zM44 620h1v1h-1zM48 620h1v1h-1zM66 620h1v1h-1zM71 620h1v1h-1zM72 620h1v1h-1zM73 620h1v1h-1zM82 620h1v1h-1zM92 620h1v1h-1zM99 620h1v1h-1zM101 620h1v1h-1zM106 620h1v1h-1zM116 620h1v1h-1zM118 620h1v1h-1zM121 620h1v1h-1zM122 620h1v1h-1zM129 620h1v1h-1zM134 620h1v1h-1zM145 620h1v1h-1zM149 620h1v1h-1zM411 620h1v1h-1zM416 620h1v1h-1zM417 620h1v1h-1zM418 620h1v1h-1zM423 620h1v1h-1zM437 620h1v1h-1zM446 620h1v1h-1zM447 620h1v1h-1zM451 620h1v1h-1zM453 620h1v1h-1zM470 620h1v1h-1zM491 620h1v1h-1zM496 620h1v1h-1zM518 620h1v1h-1zM519 620h1v1h-1zM527 620h1v1h-1zM532 620h1v1h-1zM535 620h1v1h-1zM536 620h1v1h-1zM541 620h1v1h-1zM550 620h1v1h-1zM557 620h1v1h-1zM558 620h1v1h-1zM583 620h1v1h-1zM588 620h1v1h-1zM598 620h1v1h-1zM613 620h1v1h-1zM615 620h1v1h-1zM627 620h1v1h-1zM629 620h1v1h-1zM635 620h1v1h-1zM648 620h1v1h-1zM657 620h1v1h-1zM912 620h1v1h-1zM918 620h1v1h-1zM923 620h1v1h-1zM925 620h1v1h-1zM931 620h1v1h-1zM944 620h1v1h-1zM955 620h1v1h-1zM962 620h1v1h-1zM964 620h1v1h-1zM968 620h1v1h-1zM973 620h1v1h-1zM979 620h1v1h-1zM981 620h1v1h-1zM987 620h1v1h-1zM996 620h1v1h-1zM997 620h1v1h-1zM1004 620h1v1h-1zM1005 620h1v1h-1zM1009 620h1v1h-1zM1015 620h1v1h-1zM1017 620h1v1h-1zM198 586h1v1h-1zM229 586h1v1h-1zM234 586h1v1h-1zM237 586h1v1h-1zM239 586h1v1h-1zM241 586h1v1h-1zM249 586h1v1h-1zM251 586h1v1h-1zM253 586h1v1h-1zM272 586h1v1h-1zM276 586h1v1h-1zM278 586h1v1h-1zM284 586h1v1h-1zM290 586h1v1h-1zM291 586h1v1h-1zM299 586h1v1h-1zM310 586h1v1h-1zM316 586h1v1h-1zM327 586h1v1h-1zM339 586h1v1h-1zM343 586h1v1h-1zM344 586h1v1h-1zM349 586h1v1h-1zM357 586h1v1h-1zM371 586h1v1h-1zM372 586h1v1h-1zM373 586h1v1h-1zM388 586h1v1h-1zM395 586h1v1h-1zM396 586h1v1h-1zM401 586h1v1h-1zM407 586h1v1h-1zM664 586h1v1h-1zM683 586h1v1h-1zM689 586h1v1h-1zM707 586h1v1h-1zM709 586h1v1h-1zM712 586h1v1h-1zM720 586h1v1h-1zM721 586h1v1h-1zM722 586h1v1h-1zM731 586h1v1h-1zM738 586h1v1h-1zM740 586h1v1h-1zM747 586h1v1h-1zM751 586h1v1h-1zM757 586h1v1h-1zM762 586h1v1h-1zM779 586h1v1h-1zM780 586h1v1h-1zM786 586h1v1h-1zM791 586h1v1h-1zM793 586h1v1h-1zM804 586h1v1h-1zM805 586h1v1h-1zM807 586h1v1h-1zM812 586h1v1h-1zM838 586h1v1h-1zM840 586h1v1h-1zM860 586h1v1h-1zM870 586h1v1h-1zM881 586h1v1h-1zM887 586h1v1h-1zM891 586h1v1h-1zM901 586h1v1h-1zM904 586h1v1h-1z" fill="#b000b0"/>
<path d="M19 69h10v2h-10zM28 53h1v18h-1zM29 37h1v18h-1zM30 33h1v14h-1zM30 32h1v12h-1zM31 32h1v12h-1zM32 32h1v12h-1zM33 32h1v12h-1zM34 32h1v12h-1zM35 33h1v12h-1zM36 33h1v12h-1zM37 33h1v12h-1zM38 33h1v12h-1zM39 33h1v12h-1zM40 33h1v12h-1zM41 33h1v12h-1zM42 33h1v12h-1zM43 33h1v12h-1zM44 33h1v12h-1zM45 33h1v12h-1zM46 33h1v12h-1zM47 33h1v12h-1zM48 33h1v12h-1zM49 33h1v12h-1zM50 33h1v12h-1zM51 33h1v12h-1zM52 33h1v12h-1zM53 33h1v12h-1zM54 33h1v12h-1zM55 33h1v12h-1zM56 33h1v12h-1zM57 33h1v12h-1zM58 33h1v12h-1zM59 33h1v12h-1zM60 33h1v12h-1zM61 33h1v12h-1zM62 33h1v12h-1zM63 33h1v12h-1zM64 33h1v12h-1zM65 33h1v12h-1zM66 33h1v12h-1zM67 33h1v12h-1zM68 33h1v12h-1zM69 33h1v12h-1zM70 33h1v12h-1zM71 33h1v12h-1zM72 33h1v12h-1zM73 33h1v12h-1zM74 33h1v12h-1zM75 33h1v12h-1zM76 33h1v12h-1zM77 33h1v12h-1zM78 33h1v12h-1zM79 33h1v12h-1zM80 33h1v12h-1zM81 33h1v12h-1zM82 33h1v12h-1zM83 33h1v12h-1zM84 33h1v12h-1zM85 33h1v12h-1zM86 33h1v12h-1zM87 33h1v12h-1zM88 33h1v12h-1zM89 33h1v12h-1zM90 33h1v12h-1zM91 33h1v12h-1zM92 33h1v12h-1zM93 33h1v12h-1zM94 33h1v12h-1zM95 33h1v12h-1zM96 33h1v12h-1zM97 33h1v12h-1zM98 33h1v12h-1zM99 33h1v12h-1zM100 33h1v12h-1zM101 33h1v12h-1zM102 33h1v12h-1zM103 33h1v12h-1zM104 33h1v12h-1zM105 34h1v12h-1zM106 34h1v12h-1zM107 34h1v12h-1zM108 34h1v12h-1zM109 34h1v12h-1zM110 34h1v12h-1zM111 34h1v12h-1zM112 34h1v12h-1zM113 34h1v12h-1zM114 34h1v12h-1zM115 34h1v12h-1zM116 34h1v12h-1zM117 34h1v12h-1zM118 34h1v12h-1zM119 34h1v12h-1zM120 34h1v12h-1zM121 34h1v12h-1zM122 34h1v12h-1zM123 34h1v12h-1zM124 34h1v12h-1zM125 34h1v12h-1zM126 34h1v12h-1zM127 34h1v12h-1zM128 34h1v12h-1zM129 34h1v12h-1zM130 34h1v12h-1zM131 34h1v12h-1zM132 34h1v12h-1zM133 34h1v12h-1zM134 34h1v12h-1zM135 34h1v12h-1zM136 34h1v12h-1zM137 34h1v12h-1zM138 34h1v12h-1zM139 34h1v12h-1zM140 34h1v12h-1zM141 34h1v12h-1zM142 34h1v12h-1zM143 34h1v12h-1zM144 34h1v12h-1zM145 34h1v12h-1zM146 34h1v12h-1zM147 34h1v12h-1zM148 34h1v12h-1zM149 34h1v12h-1zM150 34h1v12h-1zM151 34h1v12h-1zM152 34h1v12h-1zM153 34h1v22h-1zM154 55h1v17h-1zM154 70h124v2h-124zM278 53h1v18h-1zM279 37h1v18h-1zM280 33h1v14h-1zM280 32h1v12h-1zM281 32h1v12h-1zM282 32h1v12h-1zM283 32h1v12h-1zM284 32h1v12h-1zM285 33h1v12h-1zM286 33h1v12h-1zM287 33h1v12h-1zM288 33h1v12h-1zM289 33h1v12h-1zM290 33h1v12h-1zM291 33h1v12h-1zM292 33h1v12h-1zM293 33h1v12h-1zM294 33h1v12h-1zM295 33h1v12h-1zM296 33h1v12h-1zM297 33h1v12h-1zM298 33h1v12h-1zM299 33h1v12h-1zM300 33h1v12h-1zM301 33h1v12h-1zM302 33h1v12h-1zM303 33h1v12h-1zM304 33h1v12h-1zM305 33h1v12h-1zM306 33h1v12h-1zM307 33h1v12h-1zM308 33h1v12h-1zM309 33h1v12h-1zM310 33h1v12h-1zM311 33h1v12h-1zM312 33h1v12h-1zM313 33h1v12h-1zM314 33h1v12h-1zM315 33h1v12h-1zM316 33h1v12h-1zM317 33h1v12h-1zM318 33h1v12h-1zM319 33h1v12h-1zM320 33h1v12h-1zM321 33h1v12h-1zM322 33h1v12h-1zM323 33h1v12h-1zM324 33h1v12h-1zM325 33h1v12h-1zM326 33h1v12h-1zM327 33h1v12h-1zM328 33h1v12h-1zM329 33h1v12h-1zM330 33h1v12h-1zM331 33h1v12h-1zM332 33h1v12h-1zM333 33h1v12h-1zM334 33h1v12h-1zM335 33h1v12h-1zM336 33h1v12h-1zM337 33h1v12h-1zM338 33h1v12h-1zM339 33h1v12h-1zM340 33h1v12h-1zM341 33h1v12h-1zM342 33h1v12h-1zM343 33h1v12h-1zM344 33h1v12h-1zM345 33h1v12h-1zM346 33h1v12h-1zM347 33h1v12h-1zM348 33h1v12h-1zM349 33h1v12h-1zM350 33h1v12h-1zM351 33h1v12h-1zM352 33h1v12h-1zM353 33h1v12h-1zM354 33h1v12h-1zM355 34h1v12h-1zM356 34h1v12h-1zM357 34h1v12h-1zM358 34h1v12h-1zM359 34h1v12h-1zM360 34h1v12h-1zM361 34h1v12h-1zM362 34h1v12h-1zM363 34h1v12h-1zM364 34h1v12h-1zM365 34h1v12h-1zM366 34h1v12h-1zM367 34h1v12h-1zM368 34h1v12h-1zM369 34h1v12h-1zM370 34h1v12h-1zM371 34h1v12h-1zM372 34h1v12h-1zM373 34h1v12h-1zM374 34h1v12h-1zM375 34h1v12h-1zM376 34h1v12h-1zM377 34h1v12h-1zM378 34h1v12h-1zM379 34h1v12h-1zM380 34h1v12h-1zM381 34h1v12h-1zM382 34h1v12h-1zM383 34h1v12h-1zM384 34h1v12h-1zM385 34h1v12h-1zM386 34h1v12h-1zM387 34h1v12h-1zM388 34h1v12h-1zM389 34h1v12h-1zM390 34h1v12h-1zM391 34h1v12h-1zM392 34h1v12h-1zM393 34h1v12h-1zM394 34h1v12h-1zM395 34h1v12h-1zM396 34h1v12h-1zM397 34h1v12h-1zM398 34h1v12h-1zM399 34h1v12h-1zM400 34h1v12h-1zM401 34h1v12h-1zM402 34h1v12h-1zM403 34h1v22h-1zM404 55h1v17h-1zM404 70h124v2h-124zM528 53h1v18h-1zM529 37h1v18h-1zM530 33h1v14h-1zM530 32h1v12h-1zM531 32h1v12h-1zM532 32h1v12h-1zM533 32h1v12h-1zM534 32h1v12h-1zM535 33h1v12h-1zM536 33h1v12h-1zM537 33h1v12h-1zM538 33h1v12h-1zM539 33h1v12h-1zM540 33h1v12h-1zM541 33h1v12h-1zM542 33h1v12h-1zM543 33h1v12h-1zM544 33h1v12h-1zM545 33h1v12h-1zM546 33h1v12h-1zM547 33h1v12h-1zM548 33h1v12h-1zM549 33h1v12h-1zM550 33h1v12h-1zM551 33h1v12h-1zM552 33h1v12h-1zM553 33h1v12h-1zM554 33h1v12h-1zM555 33h1v12h-1zM556 33h1v12h-1zM557 33h1v12h-1zM558 33h1v12h-1zM559 33h1v12h-1zM560 33h1v12h-1zM561 33h1v12h-1zM562 33h1v12h-1zM563 33h1v12h-1zM564 33h1v12h-1zM565 33h1v12h-1zM566 33h1v12h-1zM567 33h1v12h-1zM568 33h1v12h-1zM569 33h1v12h-1zM570 33h1v12h-1zM571 33h1v12h-1zM572 33h1v12h-1zM573 33h1v12h-1zM574 33h1v12h-1zM575 33h1v12h-1zM576 33h1v12h-1zM577 33h1v12h-1zM578 33h1v12h-1zM579 33h1v12h-1zM580 33h1v12h-1zM581 33h1v12h-1zM582 33h1v12h-1zM583 33h1v12h-1zM584 33h1v12h-1zM585 33h1v12h-1zM586 33h1v12h-1zM587 33h1v12h-1zM588 33h1v12h-1zM589 33h1v12h-1zM590 33h1v12h-1zM591 33h1v12h-1zM592 33h1v12h-1zM593 33h1v12h-1zM594 33h1v12h-1zM595 33h1v12h-1zM596 33h1v12h-1zM597 33h1v12h-1zM598 33h1v12h-1zM599 33h1v12h-1zM600 33h1v12h-1zM601 33h1v12h-1zM602 33h1v12h-1zM603 33h1v12h-1zM604 33h1v12h-1zM605 34h1v12h-1zM606 34h1v12h-1zM607 34h1v12h-1zM608 34h1v12h-1zM609 34h1v12h-1zM610 34h1v12h-1zM611 34h1v12h-1zM612 34h1v12h-1zM613 34h1v12h-1zM614 34h1v12h-1zM615 34h1v12h-1zM616 34h1v12h-1zM617 34h1v12h-1zM618 34h1v12h-1zM619 34h1v12h-1zM620 34h1v12h-1zM621 34h1v12h-1zM622 34h1v12h-1zM623 34h1v12h-1zM624 34h1v12h-1zM625 34h1v12h-1zM626 34h1v12h-1zM627 34h1v12h-1zM628 34h1v12h-1zM629 34h1v12h-1zM630 34h1v12h-1zM631 34h1v12h-1zM632 34h1v12h-1zM633 34h1v12h-1zM634 34h1v12h-1zM635 34h1v12h-1zM636 34h1v12h-1zM637 34h1v12h-1zM638 34h1v12h-1zM639 34h1v12h-1zM640 34h1v12h-1zM641 34h1v12h-1zM642 34h1v12h-1zM643 34h1v12h-1zM644 34h1v12h-1zM645 34h1v12h-1zM646 34h1v12h-1zM647 34h1v12h-1zM648 34h1v12h-1zM649 34h1v12h-1zM650 34h1v12h-1zM651 34h1v12h-1zM652 34h1v12h-1zM653 34h1v22h-1zM654 55h1v17h-1zM654 70h124v2h-124zM778 53h1v18h-1zM779 37h1v18h-1zM780 33h1v14h-1zM780 32h1v12h-1zM781 32h1v12h-1zM782 32h1v12h-1zM783 32h1v12h-1zM784 32h1v12h-1zM785 33h1v12h-1zM786 33h1v12h-1zM787 33h1v12h-1zM788 33h1v12h-1zM789 33h1v12h-1zM790 33h1v12h-1zM791 33h1v12h-1zM792 33h1v12h-1zM793 33h1v12h-1zM794 33h1v12h-1zM795 33h1v12h-1zM796 33h1v12h-1zM797 33h1v12h-1zM798 33h1v12h-1zM799 33h1v12h-1zM800 33h1v12h-1zM801 33h1v12h-1zM802 33h1v12h-1zM803 33h1v12h-1zM804 33h1v12h-1zM805 33h1v12h-1zM806 33h1v12h-1zM807 33h1v12h-1zM808 33h1v12h-1zM809 33h1v12h-1zM810 33h1v12h-1zM811 33h1v12h-1zM812 33h1v12h-1zM813 33h1v12h-1zM814 33h1v12h-1zM815 33h1v12h-1zM816 33h1v12h-1zM817 33h1v12h-1zM818 33h1v12h-1zM819 33h1v12h-1zM820 33h1v12h-1zM821 33h1v12h-1zM822 33h1v12h-1zM823 33h1v12h-1zM824 33h1v12h-1zM825 33h1v12h-1zM826 33h1v12h-1zM827 33h1v12h-1zM828 33h1v12h-1zM829 33h1v12h-1zM830 33h1v12h-1zM831 33h1v12h-1zM832 33h1v12h-1zM833 33h1v12h-1zM834 33h1v12h-1zM835 33h1v12h-1zM836 33h1v12h-1zM837 33h1v12h-1zM838 33h1v12h-1zM839 33h1v12h-1zM840 33h1v12h-1zM841 33h1v12h-1zM842 33h1v12h-1zM843 33h1v12h-1zM844 33h1v12h-1zM845 33h1v12h-1zM846 33h1v12h-1zM847 33h1v12h-1zM848 33h1v12h-1zM849 33h1v12h-1zM850 33h1v12h-1zM851 33h1v12h-1zM852 33h1v12h-1zM853 33h1v12h-1zM854 33h1v12h-1zM855 34h1v12h-1zM856 34h1v12h-1zM857 34h1v12h-1zM858 34h1v12h-1zM859 34h1v12h-1zM860 34h1v12h-1zM861 34h1v12h-1zM862 34h1v12h-1zM863 34h1v12h-1zM864 34h1v12h-1zM865 34h1v12h-1zM866 34h1v12h-1zM867 34h1v12h-1zM868 34h1v12h-1zM869 34h1v12h-1zM870 34h1v12h-1zM871 34h1v12h-1zM872 34h1v12h-1zM873 34h1v12h-1zM874 34h1v12h-1zM875 34h1v12h-1zM876 34h1v12h-1zM877 34h1v12h-1zM878 34h1v12h-1zM879 34h1v12h-1zM880 34h1v12h-1zM881 34h1v12h-1zM882 34h1v12h-1zM883 34h1v12h-1zM884 34h1v12h-1zM885 34h1v12h-1zM886 34h1v12h-1zM887 34h1v12h-1zM888 34h1v12h-1zM889 34h1v12h-1zM890 34h1v12h-1zM891 34h1v12h-1zM892 34h1v12h-1zM893 34h1v12h-1zM894 34h1v12h-1zM895 34h1v12h-1zM896 34h1v12h-1zM897 34h1v12h-1zM898 34h1v12h-1zM899 34h1v12h-1zM900 34h1v12h-1zM901 34h1v12h-1zM902 34h1v12h-1zM903 34h1v22h-1zM904 55h1v17h-1zM904 70h115v2h-115z" fill="#00ec00"/>
<path d="M30 38h1v1h-1zM31 39h1v1h-1zM32 40h1v1h-1zM33 41h1v1h-1zM34 42h1v1h-1zM35 43h1v1h-1zM36 41h1v1h-1zM37 39h1v1h-1zM38 38h1v1h-1zM39 36h1v1h-1zM40 34h1v1h-1zM41 34h1v1h-1zM42 35h1v1h-1zM43 36h1v1h-1zM44 37h1v1h-1zM45 38h1v1h-1zM46 39h1v1h-1zM47 40h1v1h-1zM48 41h1v1h-1zM49 42h1v1h-1zM50 43h1v1h-1zM51 43h1v1h-1zM52 41h1v1h-1zM53 39h1v1h-1zM54 38h1v1h-1zM55 36h1v1h-1zM56 34h1v1h-1zM57 34h1v1h-1zM58 35h1v1h-1zM59 36h1v1h-1zM60 37h1v1h-1zM61 38h1v1h-1zM62 39h1v1h-1zM63 40h1v1h-1zM64 41h1v1h-1zM65 42h1v1h-1zM66 43h1v1h-1zM67 43h1v1h-1zM68 41h1v1h-1zM69 39h1v1h-1zM70 38h1v1h-1zM71 36h1v1h-1zM72 34h1v1h-1zM73 34h1v1h-1zM74 35h1v1h-1zM75 36h1v1h-1zM76 37h1v1h-1zM77 38h1v1h-1zM78 39h1v1h-1zM79 40h1v1h-1zM80 41h1v1h-1zM81 42h1v1h-1zM82 43h1v1h-1zM83 43h1v1h-1zM84 41h1v1h-1zM85 39h1v1h-1zM86 38h1v1h-1zM87 36h1v1h-1zM88 34h1v1h-1zM89 34h1v1h-1zM90 35h1v1h-1zM91 36h1v1h-1zM92 37h1v1h-1zM93 38h1v1h-1zM94 39h1v1h-1zM95 40h1v1h-1zM96 41h1v1h-1zM97 42h1v1h-1zM98 43h1v1h-1zM99 43h1v1h-1zM100 41h1v1h-1zM101 39h1v1h-1zM102 38h1v1h-1zM103 36h1v1h-1zM104 34h1v1h-1zM105 35h1v1h-1zM106 36h1v1h-1zM107 37h1v1h-1zM108 38h1v1h-1zM109 39h1v1h-1zM110 40h1v1h-1zM111 41h1v1h-1zM112 42h1v1h-1zM113 43h1v1h-1zM114 44h1v1h-1zM115 44h1v1h-1zM116 42h1v1h-1zM117 40h1v1h-1zM118 39h1v1h-1zM119 37h1v1h-1zM120 35h1v1h-1zM121 35h1v1h-1zM122 36h1v1h-1zM123 37h1v1h-1zM124 38h1v1h-1zM125 39h1v1h-1zM126 40h1v1h-1zM127 41h1v1h-1zM128 42h1v1h-1zM129 43h1v1h-1zM130 44h1v1h-1zM131 44h1v1h-1zM132 42h1v1h-1zM133 40h1v1h-1zM134 39h1v1h-1zM135 37h1v1h-1zM136 35h1v1h-1zM137 35h1v1h-1zM138 36h1v1h-1zM139 37h1v1h-1zM140 38h1v1h-1zM141 39h1v1h-1zM142 40h1v1h-1zM143 41h1v1h-1zM144 42h1v1h-1zM145 43h1v1h-1zM146 44h1v1h-1zM147 44h1v1h-1zM148 42h1v1h-1zM149 40h1v1h-1zM150 39h1v1h-1zM151 37h1v1h-1zM152 35h1v1h-1zM280 38h1v1h-1zM281 39h1v1h-1zM282 40h1v1h-1zM283 41h1v1h-1zM284 42h1v1h-1zM285 43h1v1h-1zM286 41h1v1h-1zM287 39h1v1h-1zM288 38h1v1h-1zM289 36h1v1h-1zM290 34h1v1h-1zM291 34h1v1h-1zM292 35h1v1h-1zM293 36h1v1h-1zM294 37h1v1h-1zM295 38h1v1h-1zM296 39h1v1h-1zM297 40h1v1h-1zM298 41h1v1h-1zM299 42h1v1h-1zM300 43h1v1h-1zM301 43h1v1h-1zM302 41h1v1h-1zM303 39h1v1h-1zM304 38h1v1h-1zM305 36h1v1h-1zM306 34h1v1h-1zM307 34h1v1h-1zM308 35h1v1h-1zM309 36h1v1h-1zM310 37h1v1h-1zM311 38h1v1h-1zM312 39h1v1h-1zM313 40h1v1h-1zM314 41h1v1h-1zM315 42h1v1h-1zM316 43h1v1h-1zM317 43h1v1h-1zM318 41h1v1h-1zM319 39h1v1h-1zM320 38h1v1h-1zM321 36h1v1h-1zM322 34h1v1h-1zM323 34h1v1h-1zM324 35h1v1h-1zM325 36h1v1h-1zM326 37h1v1h-1zM327 38h1v1h-1zM328 39h1v1h-1zM329 40h1v1h-1zM330 41h1v1h-1zM331 42h1v1h-1zM332 43h1v1h-1zM333 43h1v1h-1zM334 41h1v1h-1zM335 39h1v1h-1zM336 38h1v1h-1zM337 36h1v1h-1zM338 34h1v1h-1zM339 34h1v1h-1zM340 35h1v1h-1zM341 36h1v1h-1zM342 37h1v1h-1zM343 38h1v1h-1zM344 39h1v1h-1zM345 40h1v1h-1zM346 41h1v1h-1zM347 42h1v1h-1zM348 43h1v1h-1zM349 43h1v1h-1zM350 41h1v1h-1zM351 39h1v1h-1zM352 38h1v1h-1zM353 36h1v1h-1zM354 34h1v1h-1zM355 35h1v1h-1zM356 36h1v1h-1zM357 37h1v1h-1zM358 38h1v1h-1zM359 39h1v1h-1zM360 40h1v1h-1zM361 41h1v1h-1zM362 42h1v1h-1zM363 43h1v1h-1zM364 44h1v1h-1zM365 44h1v1h-1zM366 42h1v1h-1zM367 40h1v1h-1zM368 39h1v1h-1zM369 37h1v1h-1zM370 35h1v1h-1zM371 35h1v1h-1zM372 36h1v1h-1zM373 37h1v1h-1zM374 38h1v1h-1zM375 39h1v1h-1zM376 40h1v1h-1zM377 41h1v1h-1zM378 42h1v1h-1zM379 43h1v1h-1zM380 44h1v1h-1zM381 44h1v1h-1zM382 42h1v1h-1zM383 40h1v1h-1zM384 39h1v1h-1zM385 37h1v1h-1zM386 35h1v1h-1zM387 35h1v1h-1zM388 36h1v1h-1zM389 37h1v1h-1zM390 38h1v1h-1zM391 39h1v1h-1zM392 40h1v1h-1zM393 41h1v1h-1zM394 42h1v1h-1zM395 43h1v1h-1zM396 44h1v1h-1zM397 44h1v1h-1zM398 42h1v1h-1zM399 40h1v1h-1zM400 39h1v1h-1zM401 37h1v1h-1zM402 35h1v1h-1zM530 38h1v1h-1zM531 39h1v1h-1zM532 40h1v1h-1zM533 41h1v1h-1zM534 42h1v1h-1zM535 43h1v1h-1zM536 41h1v1h-1zM537 39h1v1h-1zM538 38h1v1h-1zM539 36h1v1h-1zM540 34h1v1h-1zM541 34h1v1h-1zM542 35h1v1h-1zM543 36h1v1h-1zM544 37h1v1h-1zM545 38h1v1h-1zM546 39h1v1h-1zM547 40h1v1h-1zM548 41h1v1h-1zM549 42h1v1h-1zM550 43h1v1h-1zM551 43h1v1h-1zM552 41h1v1h-1zM553 39h1v1h-1zM554 38h1v1h-1zM555 36h1v1h-1zM556 34h1v1h-1zM557 34h1v1h-1zM558 35h1v1h-1zM559 36h1v1h-1zM560 37h1v1h-1zM561 38h1v1h-1zM562 39h1v1h-1zM563 40h1v1h-1zM564 41h1v1h-1zM565 42h1v1h-1zM566 43h1v1h-1zM567 43h1v1h-1zM568 41h1v1h-1zM569 39h1v1h-1zM570 38h1v1h-1zM571 36h1v1h-1zM572 34h1v1h-1zM573 34h1v1h-1zM574 35h1v1h-1zM575 36h1v1h-1zM576 37h1v1h-1zM577 38h1v1h-1zM578 39h1v1h-1zM579 40h1v1h-1zM580 41h1v1h-1zM581 42h1v1h-1zM582 43h1v1h-1zM583 43h1v1h-1zM584 41h1v1h-1zM585 39h1v1h-1zM586 38h1v1h-1zM587 36h1v1h-1zM588 34h1v1h-1zM589 34h1v1h-1zM590 35h1v1h-1zM591 36h1v1h-1zM592 37h1v1h-1zM593 38h1v1h-1zM594 39h1v1h-1zM595 40h1v1h-1zM596 41h1v1h-1zM597 42h1v1h-1zM598 43h1v1h-1zM599 43h1v1h-1zM600 41h1v1h-1zM601 39h1v1h-1zM602 38h1v1h-1zM603 36h1v1h-1zM604 34h1v1h-1zM605 35h1v1h-1zM606 36h1v1h-1zM607 37h1v1h-1zM608 38h1v1h-1zM609 39h1v1h-1zM610 40h1v1h-1zM611 41h1v1h-1zM612 42h1v1h-1zM613 43h1v1h-1zM614 44h1v1h-1zM615 44h1v1h-1zM616 42h1v1h-1zM617 40h1v1h-1zM618 39h1v1h-1zM619 37h1v1h-1zM620 35h1v1h-1zM621 35h1v1h-1zM622 36h1v1h-1zM623 37h1v1h-1zM624 38h1v1h-1zM625 39h1v1h-1zM626 40h1v1h-1zM627 41h1v1h-1zM628 42h1v1h-1zM629 43h1v1h-1zM630 44h1v1h-1zM631 44h1v1h-1zM632 42h1v1h-1zM633 40h1v1h-1zM634 39h1v1h-1zM635 37h1v1h-1zM636 35h1v1h-1zM637 35h1v1h-1zM638 36h1v1h-1zM639 37h1v1h-1zM640 38h1v1h-1zM641 39h1v1h-1zM642 40h1v1h-1zM643 41h1v1h-1zM644 42h1v1h-1zM645 43h1v1h-1zM646 44h1v1h-1zM647 44h1v1h-1zM648 42h1v1h-1zM649 40h1v1h-1zM650 39h1v1h-1zM651 37h1v1h-1zM652 35h1v1h-1zM780 38h1v1h-1zM781 39h1v1h-1zM782 40h1v1h-1zM783 41h1v1h-1zM784 42h1v1h-1zM785 43h1v1h-1zM786 41h1v1h-1zM787 39h1v1h-1zM788 38h1v1h-1zM789 36h1v1h-1zM790 34h1v1h-1zM791 34h1v1h-1zM792 35h1v1h-1zM793 36h1v1h-1zM794 37h1v1h-1zM795 38h1v1h-1zM796 39h1v1h-1zM797 40h1v1h-1zM798 41h1v1h-1zM799 42h1v1h-1zM800 43h1v1h-1zM801 43h1v1h-1zM802 41h1v1h-1zM803 39h1v1h-1zM804 38h1v1h-1zM805 36h1v1h-1zM806 34h1v1h-1zM807 34h1v1h-1zM808 35h1v1h-1zM809 36h1v1h-1zM810 37h1v1h-1zM811 38h1v1h-1zM812 39h1v1h-1zM813 40h1v1h-1zM814 41h1v1h-1zM815 42h1v1h-1zM816 43h1v1h-1zM817 43h1v1h-1zM818 41h1v1h-1zM819 39h1v1h-1zM820 38h1v1h-1zM821 36h1v1h-1zM822 34h1v1h-1zM823 34h1v1h-1zM824 35h1v1h-1zM825 36h1v1h-1zM826 37h1v1h-1zM827 38h1v1h-1zM828 39h1v1h-1zM829 40h1v1h-1zM830 41h1v1h-1zM831 42h1v1h-1zM832 43h1v1h-1zM833 43h1v1h-1zM834 41h1v1h-1zM835 39h1v1h-1zM836 38h1v1h-1zM837 36h1v1h-1zM838 34h1v1h-1zM839 34h1v1h-1zM840 35h1v1h-1zM841 36h1v1h-1zM842 37h1v1h-1zM843 38h1v1h-1zM844 39h1v1h-1zM845 40h1v1h-1zM846 41h1v1h-1zM847 42h1v1h-1zM848 43h1v1h-1zM849 43h1v1h-1zM850 41h1v1h-1zM851 39h1v1h-1zM852 38h1v1h-1zM853 36h1v1h-1zM854 34h1v1h-1zM855 35h1v1h-1zM856 36h1v1h-1zM857 37h1v1h-1zM858 38h1v1h-1zM859 39h1v1h-1zM860 40h1v1h-1zM861 41h1v1h-1zM862 42h1v1h-1zM863 43h1v1h-1zM864 44h1v1h-1zM865 44h1v1h-1zM866 42h1v1h-1zM867 40h1v1h-1zM868 39h1v1h-1zM869 37h1v1h-1zM870 35h1v1h-1zM871 35h1v1h-1zM872 36h1v1h-1zM873 37h1v1h-1zM874 38h1v1h-1zM875 39h1v1h-1zM876 40h1v1h-1zM877 41h1v1h-1zM878 42h1v1h-1zM879 43h1v1h-1zM880 44h1v1h-1zM881 44h1v1h-1zM882 42h1v1h-1zM883 40h1v1h-1zM884 39h1v1h-1zM885 37h1v1h-1zM886 35h1v1h-1zM887 35h1v1h-1zM888 36h1v1h-1zM889 37h1v1h-1zM890 38h1v1h-1zM891 39h1v1h-1zM892 40h1v1h-1zM893 41h1v1h-1zM894 42h1v1h-1zM895 43h1v1h-1zM896 44h1v1h-1zM897 44h1v1h-1zM898 42h1v1h-1zM899 40h1v1h-1zM900 39h1v1h-1zM901 37h1v1h-1zM902 35h1v1h-1z" fill="#00cc00"/>
<path d="M45 44h1v1h-1zM61 44h1v1h-1zM79 44h1v1h-1zM89 33h1v1h-1zM91 44h1v1h-1zM91 33h1v1h-1zM99 33h1v1h-1zM109 45h1v1h-1zM109 34h1v1h-1zM124 34h1v1h-1zM128 34h1v1h-1zM138 45h1v1h-1zM146 34h1v1h-1zM193 71h3v1h-3zM209 71h3v1h-3zM211 71h2v1h-2zM219 71h3v1h-3zM221 71h3v1h-3zM231 71h3v1h-3zM255 71h1v1h-1zM259 71h1v1h-1zM271 71h2v1h-2zM302 44h1v1h-1zM311 44h1v1h-1zM313 44h1v1h-1zM331 44h1v1h-1zM352 33h1v1h-1zM355 34h1v1h-1zM356 34h1v1h-1zM362 34h1v1h-1zM364 34h1v1h-1zM367 34h1v1h-1zM369 34h1v1h-1zM380 34h1v1h-1zM385 34h1v1h-1zM387 45h1v1h-1zM407 71h2v1h-2zM411 71h2v1h-2zM431 71h3v1h-3zM469 71h2v1h-2zM481 71h1v1h-1zM483 71h1v1h-1zM497 71h2v1h-2zM530 43h1v1h-1zM538 44h1v1h-1zM542 44h1v1h-1zM601 44h1v1h-1zM609 34h1v1h-1zM629 34h1v1h-1zM631 34h1v1h-1zM648 34h1v1h-1zM659 71h1v1h-1zM663 71h3v1h-3zM665 71h2v1h-2zM667 71h3v1h-3zM681 71h1v1h-1zM713 71h2v1h-2zM717 71h3v1h-3zM733 71h3v1h-3zM745 71h2v1h-2zM755 71h3v1h-3zM771 71h3v1h-3zM783 43h1v1h-1zM786 44h1v1h-1zM818 44h1v1h-1zM829 44h1v1h-1zM840 33h1v1h-1zM846 33h1v1h-1zM848 44h1v1h-1zM848 33h1v1h-1zM850 33h1v1h-1zM851 44h1v1h-1zM856 34h1v1h-1zM871 34h1v1h-1zM891 45h1v1h-1zM896 34h1v1h-1zM898 34h1v1h-1zM911 71h1v1h-1zM913 71h2v1h-2zM925 71h3v1h-3zM931 71h1v1h-1zM949 71h3v1h-3zM951 71h1v1h-1zM953 71h2v1h-2zM955 71h3v1h-3zM959 71h1v1h-1zM961 71h3v1h-3zM1003 71h1v1h-1zM1005 71h2v1h-2zM1015 71h2v1h-2z" fill="#007000"/>
<path d="M30 86h124v22h-124zM31 111h1v1h-1zM37 111h1v1h-1zM41 111h1v1h-1zM91 111h1v1h-1zM95 111h1v1h-1zM97 111h1v1h-1zM99 111h1v1h-1zM105 111h1v1h-1zM107 111h1v1h-1zM127 111h1v1h-1zM129 111h1v1h-1zM133 111h1v1h-1zM135 111h1v1h-1zM137 111h1v1h-1zM141 111h1v1h-1zM143 111h1v1h-1zM145 111h1v1h-1zM151 111h1v1h-1zM280 86h124v22h-124zM287 111h1v1h-1zM295 111h1v1h-1zM297 111h1v1h-1zM301 111h1v1h-1zM307 111h1v1h-1zM313 111h1v1h-1zM317 111h1v1h-1zM319 111h1v1h-1zM329 111h1v1h-1zM331 111h1v1h-1zM343 111h1v1h-1zM349 111h1v1h-1zM353 111h1v1h-1zM355 111h1v1h-1zM357 111h1v1h-1zM365 111h1v1h-1zM369 111h1v1h-1zM375 111h1v1h-1zM377 111h1v1h-1zM383 111h1v1h-1zM385 111h1v1h-1zM391 111h1v1h-1zM395 111h1v1h-1zM399 111h1v1h-1zM530 86h124v22h-124zM531 111h1v1h-1zM539 111h1v1h-1zM545 111h1v1h-1zM547 111h1v1h-1zM555 111h1v1h-1zM559 111h1v1h-1zM561 111h1v1h-1zM563 111h1v1h-1zM577 111h1v1h-1zM581 111h1v1h-1zM585 111h1v1h-1zM593 111h1v1h-1zM607 111h1v1h-1zM615 111h1v1h-1zM621 111h1v1h-1zM631 111h1v1h-1zM637 111h1v1h-1zM641 111h1v1h-1zM651 111h1v1h-1zM780 86h124v22h-124zM789 111h1v1h-1zM793 111h1v1h-1zM799 111h1v1h-1zM801 111h1v1h-1zM803 111h1v1h-1zM809 111h1v1h-1zM811 111h1v1h-1zM819 111h1v1h-1zM821 111h1v1h-1zM823 111h1v1h-1zM833 111h1v1h-1zM835 111h1v1h-1zM843 111h1v1h-1zM845 111h1v1h-1zM847 111h1v1h-1zM849 111h1v1h-1zM859 111h1v1h-1zM863 111h1v1h-1zM865 111h1v1h-1zM871 111h1v1h-1zM873 111h1v1h-1zM881 111h1v1h-1zM883 111h1v1h-1zM887 111h1v1h-1zM895 111h1v1h-1zM897 111h1v1h-1zM901 111h1v1h-1z" fill="#00a0a0"/>
<path d="M28 83h1v26h-1zM34 86h1v22h-1zM40 86h1v22h-1zM50 86h1v22h-1zM56 86h1v22h-1zM66 86h1v22h-1zM72 86h1v22h-1zM82 86h1v22h-1zM88 86h1v22h-1zM98 86h1v22h-1zM104 86h1v22h-1zM114 86h1v22h-1zM120 86h1v22h-1zM130 86h1v22h-1zM136 86h1v22h-1zM146 86h1v22h-1zM152 86h1v22h-1zM278 83h1v26h-1zM284 86h1v22h-1zM290 86h1v22h-1zM300 86h1v22h-1zM306 86h1v22h-1zM316 86h1v22h-1zM322 86h1v22h-1zM332 86h1v22h-1zM338 86h1v22h-1zM348 86h1v22h-1zM354 86h1v22h-1zM364 86h1v22h-1zM370 86h1v22h-1zM380 86h1v22h-1zM386 86h1v22h-1zM396 86h1v22h-1zM402 86h1v22h-1zM528 83h1v26h-1zM534 86h1v22h-1zM540 86h1v22h-1zM550 86h1v22h-1zM556 86h1v22h-1zM566 86h1v22h-1zM572 86h1v22h-1zM582 86h1v22h-1zM588 86h1v22h-1zM598 86h1v22h-1zM604 86h1v22h-1zM614 86h1v22h-1zM620 86h1v22h-1zM630 86h1v22h-1zM636 86h1v22h-1zM646 86h1v22h-1zM652 86h1v22h-1zM778 83h1v26h-1zM784 86h1v22h-1zM790 86h1v22h-1zM800 86h1v22h-1zM806 86h1v22h-1zM816 86h1v22h-1zM822 86h1v22h-1zM832 86h1v22h-1zM838 86h1v22h-1zM848 86h1v22h-1zM854 86h1v22h-1zM864 86h1v22h-1zM870 86h1v22h-1zM880 86h1v22h-1zM886 86h1v22h-1zM896 86h1v22h-1zM902 86h1v22h-1z" fill="#006060"/>
<path d="M28 82h126v4h-126zM28 108h126v3h-126zM154 88h1v8h-1zM155 94h1v6h-1zM156 98h1v6h-1zM157 102h1v5h-1zM158 105h1v5h-1zM159 107h1v4h-1zM160 108h118v2h-118zM160 110h1v1h-1zM166 110h1v1h-1zM178 110h1v1h-1zM180 110h1v1h-1zM182 110h1v1h-1zM188 110h1v1h-1zM196 110h1v1h-1zM197 110h1v1h-1zM201 110h1v1h-1zM202 110h1v1h-1zM215 110h1v1h-1zM216 110h1v1h-1zM220 110h1v1h-1zM222 110h1v1h-1zM232 110h1v1h-1zM233 110h1v1h-1zM238 110h1v1h-1zM244 110h1v1h-1zM245 110h1v1h-1zM246 110h1v1h-1zM251 110h1v1h-1zM257 110h1v1h-1zM259 110h1v1h-1zM266 110h1v1h-1zM267 110h1v1h-1zM269 110h1v1h-1zM272 110h1v1h-1zM273 110h1v1h-1zM275 110h1v1h-1zM278 82h126v4h-126zM278 108h126v3h-126zM404 88h1v8h-1zM405 94h1v6h-1zM406 98h1v6h-1zM407 102h1v5h-1zM408 105h1v5h-1zM409 107h1v4h-1zM410 108h118v2h-118zM426 110h1v1h-1zM434 110h1v1h-1zM435 110h1v1h-1zM447 110h1v1h-1zM448 110h1v1h-1zM450 110h1v1h-1zM456 110h1v1h-1zM457 110h1v1h-1zM459 110h1v1h-1zM461 110h1v1h-1zM475 110h1v1h-1zM481 110h1v1h-1zM484 110h1v1h-1zM502 110h1v1h-1zM504 110h1v1h-1zM518 110h1v1h-1zM520 110h1v1h-1zM522 110h1v1h-1zM525 110h1v1h-1zM528 82h126v4h-126zM528 108h126v3h-126zM654 88h1v8h-1zM655 94h1v6h-1zM656 98h1v6h-1zM657 102h1v5h-1zM658 105h1v5h-1zM659 107h1v4h-1zM660 108h118v2h-118zM662 110h1v1h-1zM664 110h1v1h-1zM665 110h1v1h-1zM668 110h1v1h-1zM671 110h1v1h-1zM672 110h1v1h-1zM676 110h1v1h-1zM679 110h1v1h-1zM683 110h1v1h-1zM685 110h1v1h-1zM686 110h1v1h-1zM687 110h1v1h-1zM689 110h1v1h-1zM691 110h1v1h-1zM693 110h1v1h-1zM701 110h1v1h-1zM703 110h1v1h-1zM705 110h1v1h-1zM710 110h1v1h-1zM721 110h1v1h-1zM728 110h1v1h-1zM730 110h1v1h-1zM737 110h1v1h-1zM746 110h1v1h-1zM747 110h1v1h-1zM755 110h1v1h-1zM762 110h1v1h-1zM764 110h1v1h-1zM766 110h1v1h-1zM769 110h1v1h-1zM778 82h126v4h-126zM778 108h126v3h-126zM904 88h1v8h-1zM905 94h1v6h-1zM906 98h1v6h-1zM907 102h1v5h-1zM908 105h1v5h-1zM909 107h1v4h-1zM910 108h109v2h-109zM927 110h1v1h-1zM937 110h1v1h-1zM938 110h1v1h-1zM939 110h1v1h-1zM948 110h1v1h-1zM953 110h1v1h-1zM956 110h1v1h-1zM957 110h1v1h-1zM959 110h1v1h-1zM963 110h1v1h-1zM966 110h1v1h-1zM967 110h1v1h-1zM970 110h1v1h-1zM971 110h1v1h-1zM973 110h1v1h-1zM975 110h1v1h-1zM976 110h1v1h-1zM980 110h1v1h-1zM982 110h1v1h-1zM984 110h1v1h-1zM993 110h1v1h-1zM999 110h1v1h-1zM1000 110h1v1h-1zM1005 110h1v1h-1zM1008 110h1v1h-1zM1017 110h1v1h-1zM19 108h10v2h-10zM19 110h9v1h-9z" fill="#00f2f2"/>
<path d="M31 86h1v2h-1zM40 86h1v4h-1zM44 86h1v3h-1zM48 86h1v4h-1zM53 86h1v3h-1zM59 86h1v1h-1zM60 86h1v2h-1zM62 86h1v2h-1zM67 86h1v3h-1zM68 86h1v2h-1zM71 86h1v1h-1zM73 86h1v2h-1zM75 86h1v4h-1zM76 86h1v3h-1zM84 86h1v4h-1zM86 86h1v1h-1zM92 86h1v4h-1zM93 86h1v4h-1zM98 86h1v3h-1zM105 86h1v1h-1zM108 86h1v3h-1zM112 86h1v4h-1zM118 86h1v2h-1zM119 86h1v4h-1zM120 86h1v3h-1zM121 86h1v1h-1zM130 86h1v1h-1zM136 86h1v2h-1zM146 86h1v3h-1zM148 86h1v1h-1zM149 86h1v4h-1zM281 86h1v2h-1zM283 86h1v3h-1zM284 86h1v1h-1zM285 86h1v2h-1zM287 86h1v3h-1zM289 86h1v2h-1zM291 86h1v3h-1zM297 86h1v2h-1zM299 86h1v2h-1zM300 86h1v2h-1zM303 86h1v2h-1zM309 86h1v3h-1zM314 86h1v2h-1zM315 86h1v4h-1zM316 86h1v2h-1zM317 86h1v1h-1zM319 86h1v4h-1zM320 86h1v4h-1zM322 86h1v1h-1zM325 86h1v4h-1zM328 86h1v4h-1zM331 86h1v4h-1zM333 86h1v1h-1zM334 86h1v4h-1zM339 86h1v4h-1zM341 86h1v2h-1zM342 86h1v2h-1zM346 86h1v2h-1zM349 86h1v1h-1zM351 86h1v2h-1zM352 86h1v4h-1zM354 86h1v2h-1zM356 86h1v4h-1zM358 86h1v4h-1zM361 86h1v3h-1zM363 86h1v3h-1zM367 86h1v4h-1zM368 86h1v3h-1zM369 86h1v1h-1zM372 86h1v4h-1zM373 86h1v3h-1zM374 86h1v4h-1zM377 86h1v3h-1zM379 86h1v4h-1zM380 86h1v2h-1zM383 86h1v2h-1zM386 86h1v1h-1zM388 86h1v1h-1zM394 86h1v3h-1zM397 86h1v4h-1zM401 86h1v4h-1zM402 86h1v4h-1zM529 86h1v1h-1zM530 86h1v3h-1zM535 86h1v1h-1zM539 86h1v3h-1zM543 86h1v1h-1zM546 86h1v4h-1zM550 86h1v4h-1zM552 86h1v1h-1zM557 86h1v2h-1zM558 86h1v4h-1zM564 86h1v4h-1zM565 86h1v3h-1zM566 86h1v3h-1zM567 86h1v3h-1zM573 86h1v1h-1zM580 86h1v2h-1zM581 86h1v1h-1zM584 86h1v3h-1zM585 86h1v3h-1zM588 86h1v1h-1zM592 86h1v4h-1zM593 86h1v2h-1zM600 86h1v4h-1zM602 86h1v4h-1zM605 86h1v1h-1zM609 86h1v1h-1zM610 86h1v2h-1zM611 86h1v4h-1zM613 86h1v2h-1zM618 86h1v3h-1zM622 86h1v4h-1zM623 86h1v1h-1zM624 86h1v1h-1zM625 86h1v1h-1zM626 86h1v2h-1zM628 86h1v3h-1zM630 86h1v4h-1zM631 86h1v4h-1zM635 86h1v3h-1zM636 86h1v4h-1zM638 86h1v2h-1zM640 86h1v3h-1zM642 86h1v2h-1zM644 86h1v2h-1zM648 86h1v4h-1zM650 86h1v4h-1zM651 86h1v4h-1zM780 86h1v4h-1zM787 86h1v1h-1zM791 86h1v4h-1zM795 86h1v2h-1zM799 86h1v3h-1zM803 86h1v4h-1zM804 86h1v4h-1zM805 86h1v2h-1zM806 86h1v1h-1zM808 86h1v1h-1zM814 86h1v3h-1zM817 86h1v2h-1zM821 86h1v4h-1zM824 86h1v2h-1zM825 86h1v2h-1zM832 86h1v4h-1zM833 86h1v4h-1zM835 86h1v3h-1zM837 86h1v3h-1zM838 86h1v1h-1zM840 86h1v3h-1zM841 86h1v4h-1zM842 86h1v3h-1zM848 86h1v2h-1zM852 86h1v1h-1zM859 86h1v1h-1zM860 86h1v3h-1zM862 86h1v1h-1zM863 86h1v3h-1zM867 86h1v2h-1zM868 86h1v2h-1zM869 86h1v4h-1zM870 86h1v1h-1zM875 86h1v1h-1zM877 86h1v2h-1zM879 86h1v4h-1zM880 86h1v2h-1zM882 86h1v3h-1zM885 86h1v4h-1zM888 86h1v2h-1zM891 86h1v2h-1z" fill="#40d8d8"/>
<path d="M28 126h126v2h-126zM155 135h123v2h-123zM278 126h126v2h-126zM405 135h123v2h-123zM528 126h126v2h-126zM655 135h123v2h-123zM778 126h126v2h-126zM905 135h114v2h-114zM19 135h9v2h-9z" fill="#ee00ee"/>
<path d="M28 126h1v11h-1zM154 127h1v10h-1zM47 127h1v1h-1zM83 127h1v1h-1zM113 127h1v1h-1zM133 127h1v1h-1zM137 127h1v1h-1zM161 134h1v1h-1zM170 134h1v1h-1zM173 134h1v1h-1zM182 134h1v1h-1zM185 134h1v1h-1zM188 134h1v1h-1zM197 134h1v1h-1zM200 134h1v1h-1zM206 134h1v1h-1zM209 134h1v1h-1zM212 134h1v1h-1zM215 134h1v1h-1zM218 134h1v1h-1zM227 134h1v1h-1zM233 134h1v1h-1zM239 134h1v1h-1zM245 134h1v1h-1zM248 134h1v1h-1zM251 134h1v1h-1zM260 134h1v1h-1zM263 134h1v1h-1zM275 134h1v1h-1zM278 126h1v11h-1zM404 127h1v10h-1zM289 127h1v1h-1zM301 127h1v1h-1zM305 127h1v1h-1zM311 127h1v1h-1zM325 127h1v1h-1zM329 127h1v1h-1zM337 127h1v1h-1zM347 127h1v1h-1zM349 127h1v1h-1zM355 127h1v1h-1zM361 127h1v1h-1zM417 134h1v1h-1zM420 134h1v1h-1zM432 134h1v1h-1zM441 134h1v1h-1zM450 134h1v1h-1zM453 134h1v1h-1zM456 134h1v1h-1zM474 134h1v1h-1zM477 134h1v1h-1zM492 134h1v1h-1zM495 134h1v1h-1zM504 134h1v1h-1zM507 134h1v1h-1zM510 134h1v1h-1zM525 134h1v1h-1zM528 126h1v11h-1zM654 127h1v10h-1zM591 127h1v1h-1zM609 127h1v1h-1zM617 127h1v1h-1zM629 127h1v1h-1zM639 127h1v1h-1zM658 134h1v1h-1zM664 134h1v1h-1zM667 134h1v1h-1zM670 134h1v1h-1zM673 134h1v1h-1zM679 134h1v1h-1zM685 134h1v1h-1zM700 134h1v1h-1zM712 134h1v1h-1zM715 134h1v1h-1zM718 134h1v1h-1zM724 134h1v1h-1zM727 134h1v1h-1zM733 134h1v1h-1zM742 134h1v1h-1zM745 134h1v1h-1zM757 134h1v1h-1zM766 134h1v1h-1zM775 134h1v1h-1zM778 126h1v11h-1zM904 127h1v10h-1zM785 127h1v1h-1zM789 127h1v1h-1zM791 127h1v1h-1zM793 127h1v1h-1zM813 127h1v1h-1zM859 127h1v1h-1zM863 127h1v1h-1zM869 127h1v1h-1zM879 127h1v1h-1zM885 127h1v1h-1zM895 127h1v1h-1zM917 134h1v1h-1zM932 134h1v1h-1zM938 134h1v1h-1zM947 134h1v1h-1zM953 134h1v1h-1zM956 134h1v1h-1zM962 134h1v1h-1zM968 134h1v1h-1zM980 134h1v1h-1zM986 134h1v1h-1zM1001 134h1v1h-1zM1007 134h1v1h-1zM1010 134h1v1h-1z" fill="#6a006a"/>
<path d="M466 19H457V146H466V144H459V21H466z" fill="#b0b0b4"/>
<path d="M951 19H960V146H951V144H958V21H951z" fill="#b0b0b4"/>
<path d="M19 177h1v1h-1zM19 187h1v1h-1zM19 197h1v1h-1zM19 207h1v1h-1zM19 227h1v1h-1zM19 237h1v1h-1zM19 247h1v1h-1zM19 257h1v1h-1zM19 277h1v1h-1zM19 287h1v1h-1zM19 297h1v1h-1zM19 307h1v1h-1zM19 327h1v1h-1zM19 337h1v1h-1zM19 347h1v1h-1zM19 357h1v1h-1zM19 377h1v1h-1zM19 387h1v1h-1zM19 397h1v1h-1zM19 407h1v1h-1zM19 427h1v1h-1zM19 437h1v1h-1zM19 447h1v1h-1zM19 457h1v1h-1zM19 477h1v1h-1zM19 487h1v1h-1zM19 497h1v1h-1zM19 507h1v1h-1zM19 527h1v1h-1zM19 537h1v1h-1zM19 547h1v1h-1zM19 557h1v1h-1zM19 577h1v1h-1zM19 587h1v1h-1zM19 597h1v1h-1zM19 607h1v1h-1zM19 627h1v1h-1zM19 637h1v1h-1zM19 647h1v1h-1zM19 657h1v1h-1zM20 217h1v1h-1zM20 267h1v1h-1zM20 317h1v1h-1zM20 367h1v1h-1zM20 417h1v1h-1zM20 467h1v1h-1zM20 517h1v1h-1zM20 567h1v1h-1zM20 617h1v1h-1zM21 177h1v1h-1zM21 187h1v1h-1zM21 197h1v1h-1zM21 207h1v1h-1zM21 227h1v1h-1zM21 237h1v1h-1zM21 247h1v1h-1zM21 257h1v1h-1zM21 277h1v1h-1zM21 287h1v1h-1zM21 297h1v1h-1zM21 307h1v1h-1zM21 327h1v1h-1zM21 337h1v1h-1zM21 347h1v1h-1zM21 357h1v1h-1zM21 377h1v1h-1zM21 387h1v1h-1zM21 397h1v1h-1zM21 407h1v1h-1zM21 417h1v1h-1zM21 427h1v1h-1zM21 437h1v1h-1zM21 447h1v1h-1zM21 457h1v1h-1zM21 477h1v1h-1zM21 487h1v1h-1zM21 497h1v1h-1zM21 507h1v1h-1zM21 527h1v1h-1zM21 537h1v1h-1zM21 547h1v1h-1zM21 557h1v1h-1zM21 577h1v1h-1zM21 587h1v1h-1zM21 597h1v1h-1zM21 607h1v1h-1zM21 627h1v1h-1zM21 637h1v1h-1zM21 647h1v1h-1zM21 657h1v1h-1zM22 217h1v1h-1zM22 267h1v1h-1zM22 317h1v1h-1zM22 367h1v1h-1zM22 417h1v1h-1zM22 467h1v1h-1zM22 517h1v1h-1zM22 567h1v1h-1zM22 617h1v1h-1zM23 417h1v1h-1zM24 217h1v1h-1zM24 267h1v1h-1zM24 317h1v1h-1zM24 367h1v1h-1zM24 417h1v1h-1zM24 467h1v1h-1zM24 517h1v1h-1zM24 567h1v1h-1zM24 617h1v1h-1zM25 417h1v1h-1zM27 417h1v1h-1zM29 417h1v1h-1zM31 417h1v1h-1zM33 417h1v1h-1zM35 417h1v1h-1zM37 417h1v1h-1zM39 167h1v1h-1zM39 169h1v1h-1zM39 217h1v1h-1zM39 267h1v1h-1zM39 317h1v1h-1zM39 367h1v1h-1zM39 414h1v1h-1zM39 416h1v1h-1zM39 417h1v1h-1zM39 418h1v1h-1zM39 420h1v1h-1zM39 467h1v1h-1zM39 517h1v1h-1zM39 567h1v1h-1zM39 617h1v1h-1zM39 665h1v1h-1zM39 667h1v1h-1zM41 417h1v1h-1zM43 417h1v1h-1zM45 417h1v1h-1zM47 417h1v1h-1zM49 417h1v1h-1zM51 417h1v1h-1zM53 417h1v1h-1zM55 417h1v1h-1zM57 417h1v1h-1zM59 167h1v1h-1zM59 169h1v1h-1zM59 217h1v1h-1zM59 267h1v1h-1zM59 317h1v1h-1zM59 367h1v1h-1zM59 414h1v1h-1zM59 416h1v1h-1zM59 417h1v1h-1zM59 418h1v1h-1zM59 420h1v1h-1zM59 467h1v1h-1zM59 517h1v1h-1zM59 567h1v1h-1zM59 617h1v1h-1zM59 665h1v1h-1zM59 667h1v1h-1zM61 417h1v1h-1zM63 417h1v1h-1zM65 417h1v1h-1zM67 417h1v1h-1zM69 417h1v1h-1zM71 417h1v1h-1zM73 417h1v1h-1zM75 417h1v1h-1zM77 417h1v1h-1zM79 167h1v1h-1zM79 169h1v1h-1zM79 217h1v1h-1zM79 267h1v1h-1zM79 317h1v1h-1zM79 367h1v1h-1zM79 414h1v1h-1zM79 416h1v1h-1zM79 417h1v1h-1zM79 418h1v1h-1zM79 420h1v1h-1zM79 467h1v1h-1zM79 517h1v1h-1zM79 567h1v1h-1zM79 617h1v1h-1zM79 665h1v1h-1zM79 667h1v1h-1zM81 417h1v1h-1zM83 417h1v1h-1zM85 417h1v1h-1zM87 417h1v1h-1zM89 417h1v1h-1zM91 417h1v1h-1zM93 417h1v1h-1zM95 417h1v1h-1zM97 417h1v1h-1zM99 167h1v1h-1zM99 169h1v1h-1zM99 217h1v1h-1zM99 267h1v1h-1zM99 317h1v1h-1zM99 367h1v1h-1zM99 414h1v1h-1zM99 416h1v1h-1zM99 417h1v1h-1zM99 418h1v1h-1zM99 420h1v1h-1zM99 467h1v1h-1zM99 517h1v1h-1zM99 567h1v1h-1zM99 617h1v1h-1zM99 665h1v1h-1zM99 667h1v1h-1zM101 417h1v1h-1zM103 417h1v1h-1zM105 417h1v1h-1zM107 417h1v1h-1zM109 417h1v1h-1zM111 417h1v1h-1zM113 417h1v1h-1zM115 417h1v1h-1zM117 417h1v1h-1zM119 168h1v1h-1zM119 170h1v1h-1zM119 172h1v1h-1zM119 177h1v1h-1zM119 187h1v1h-1zM119 197h1v1h-1zM119 207h1v1h-1zM119 217h1v1h-1zM119 227h1v1h-1zM119 237h1v1h-1zM119 247h1v1h-1zM119 257h1v1h-1zM119 267h1v1h-1zM119 277h1v1h-1zM119 287h1v1h-1zM119 297h1v1h-1zM119 307h1v1h-1zM119 317h1v1h-1zM119 327h1v1h-1zM119 337h1v1h-1zM119 347h1v1h-1zM119 357h1v1h-1zM119 367h1v1h-1zM119 377h1v1h-1zM119 387h1v1h-1zM119 397h1v1h-1zM119 407h1v1h-1zM119 412h1v1h-1zM119 414h1v1h-1zM119 416h1v1h-1zM119 417h1v1h-1zM119 418h1v1h-1zM119 420h1v1h-1zM119 422h1v1h-1zM119 427h1v1h-1zM119 437h1v1h-1zM119 447h1v1h-1zM119 457h1v1h-1zM119 467h1v1h-1zM119 477h1v1h-1zM119 487h1v1h-1zM119 497h1v1h-1zM119 507h1v1h-1zM119 517h1v1h-1zM119 527h1v1h-1zM119 537h1v1h-1zM119 547h1v1h-1zM119 557h1v1h-1zM119 567h1v1h-1zM119 577h1v1h-1zM119 587h1v1h-1zM119 597h1v1h-1zM119 607h1v1h-1zM119 617h1v1h-1zM119 627h1v1h-1zM119 637h1v1h-1zM119 647h1v1h-1zM119 657h1v1h-1zM119 662h1v1h-1zM119 664h1v1h-1zM119 666h1v1h-1zM121 417h1v1h-1zM123 417h1v1h-1zM125 417h1v1h-1zM127 417h1v1h-1zM129 417h1v1h-1zM131 417h1v1h-1zM133 417h1v1h-1zM135 417h1v1h-1zM137 417h1v1h-1zM139 167h1v1h-1zM139 169h1v1h-1zM139 217h1v1h-1zM139 267h1v1h-1zM139 317h1v1h-1zM139 367h1v1h-1zM139 414h1v1h-1zM139 416h1v1h-1zM139 417h1v1h-1zM139 418h1v1h-1zM139 420h1v1h-1zM139 467h1v1h-1zM139 517h1v1h-1zM139 567h1v1h-1zM139 617h1v1h-1zM139 665h1v1h-1zM139 667h1v1h-1zM141 417h1v1h-1zM143 417h1v1h-1zM145 417h1v1h-1zM147 417h1v1h-1zM149 417h1v1h-1zM151 417h1v1h-1zM153 417h1v1h-1zM155 417h1v1h-1zM157 417h1v1h-1zM159 167h1v1h-1zM159 169h1v1h-1zM159 217h1v1h-1zM159 267h1v1h-1zM159 317h1v1h-1zM159 367h1v1h-1zM159 414h1v1h-1zM159 416h1v1h-1zM159 417h1v1h-1zM159 418h1v1h-1zM159 420h1v1h-1zM159 467h1v1h-1zM159 517h1v1h-1zM159 567h1v1h-1zM159 617h1v1h-1zM159 665h1v1h-1zM159 667h1v1h-1zM161 417h1v1h-1zM163 417h1v1h-1zM165 417h1v1h-1zM167 417h1v1h-1zM169 417h1v1h-1zM171 417h1v1h-1zM173 417h1v1h-1zM175 417h1v1h-1zM177 417h1v1h-1zM179 167h1v1h-1zM179 169h1v1h-1zM179 217h1v1h-1zM179 267h1v1h-1zM179 317h1v1h-1zM179 367h1v1h-1zM179 414h1v1h-1zM179 416h1v1h-1zM179 417h1v1h-1zM179 418h1v1h-1zM179 420h1v1h-1zM179 467h1v1h-1zM179 517h1v1h-1zM179 567h1v1h-1zM179 617h1v1h-1zM179 665h1v1h-1zM179 667h1v1h-1zM181 417h1v1h-1zM183 417h1v1h-1zM185 417h1v1h-1zM187 417h1v1h-1zM189 417h1v1h-1zM191 417h1v1h-1zM193 417h1v1h-1zM195 417h1v1h-1zM197 417h1v1h-1zM199 167h1v1h-1zM199 169h1v1h-1zM199 217h1v1h-1zM199 267h1v1h-1zM199 317h1v1h-1zM199 367h1v1h-1zM199 414h1v1h-1zM199 416h1v1h-1zM199 417h1v1h-1zM199 418h1v1h-1zM199 420h1v1h-1zM199 467h1v1h-1zM199 517h1v1h-1zM199 567h1v1h-1zM199 617h1v1h-1zM199 665h1v1h-1zM199 667h1v1h-1zM201 417h1v1h-1zM203 417h1v1h-1zM205 417h1v1h-1zM207 417h1v1h-1zM209 417h1v1h-1zM211 417h1v1h-1zM213 417h1v1h-1zM215 417h1v1h-1zM217 417h1v1h-1zM219 168h1v1h-1zM219 170h1v1h-1zM219 172h1v1h-1zM219 177h1v1h-1zM219 187h1v1h-1zM219 197h1v1h-1zM219 207h1v1h-1zM219 217h1v1h-1zM219 227h1v1h-1zM219 237h1v1h-1zM219 247h1v1h-1zM219 257h1v1h-1zM219 267h1v1h-1zM219 277h1v1h-1zM219 287h1v1h-1zM219 297h1v1h-1zM219 307h1v1h-1zM219 317h1v1h-1zM219 327h1v1h-1zM219 337h1v1h-1zM219 347h1v1h-1zM219 357h1v1h-1zM219 367h1v1h-1zM219 377h1v1h-1zM219 387h1v1h-1zM219 397h1v1h-1zM219 407h1v1h-1zM219 412h1v1h-1zM219 414h1v1h-1zM219 416h1v1h-1zM219 417h1v1h-1zM219 418h1v1h-1zM219 420h1v1h-1zM219 422h1v1h-1zM219 427h1v1h-1zM219 437h1v1h-1zM219 447h1v1h-1zM219 457h1v1h-1zM219 467h1v1h-1zM219 477h1v1h-1zM219 487h1v1h-1zM219 497h1v1h-1zM219 507h1v1h-1zM219 517h1v1h-1zM219 527h1v1h-1zM219 537h1v1h-1zM219 547h1v1h-1zM219 557h1v1h-1zM219 567h1v1h-1zM219 577h1v1h-1zM219 587h1v1h-1zM219 597h1v1h-1zM219 607h1v1h-1zM219 617h1v1h-1zM219 627h1v1h-1zM219 637h1v1h-1zM219 647h1v1h-1zM219 657h1v1h-1zM219 662h1v1h-1zM219 664h1v1h-1zM219 666h1v1h-1zM221 417h1v1h-1zM223 417h1v1h-1zM225 417h1v1h-1zM227 417h1v1h-1zM229 417h1v1h-1zM231 417h1v1h-1zM233 417h1v1h-1zM235 417h1v1h-1zM237 417h1v1h-1zM239 167h1v1h-1zM239 169h1v1h-1zM239 217h1v1h-1zM239 267h1v1h-1zM239 317h1v1h-1zM239 367h1v1h-1zM239 414h1v1h-1zM239 416h1v1h-1zM239 417h1v1h-1zM239 418h1v1h-1zM239 420h1v1h-1zM239 467h1v1h-1zM239 517h1v1h-1zM239 567h1v1h-1zM239 617h1v1h-1zM239 665h1v1h-1zM239 667h1v1h-1zM241 417h1v1h-1zM243 417h1v1h-1zM245 417h1v1h-1zM247 417h1v1h-1zM249 417h1v1h-1zM251 417h1v1h-1zM253 417h1v1h-1zM255 417h1v1h-1zM257 417h1v1h-1zM259 167h1v1h-1zM259 169h1v1h-1zM259 217h1v1h-1zM259 267h1v1h-1zM259 317h1v1h-1zM259 367h1v1h-1zM259 414h1v1h-1zM259 416h1v1h-1zM259 417h1v1h-1zM259 418h1v1h-1zM259 420h1v1h-1zM259 467h1v1h-1zM259 517h1v1h-1zM259 567h1v1h-1zM259 617h1v1h-1zM259 665h1v1h-1zM259 667h1v1h-1zM261 417h1v1h-1zM263 417h1v1h-1zM265 417h1v1h-1zM267 417h1v1h-1zM269 417h1v1h-1zM271 417h1v1h-1zM273 417h1v1h-1zM275 417h1v1h-1zM277 417h1v1h-1zM279 167h1v1h-1zM279 169h1v1h-1zM279 217h1v1h-1zM279 267h1v1h-1zM279 317h1v1h-1zM279 367h1v1h-1zM279 414h1v1h-1zM279 416h1v1h-1zM279 417h1v1h-1zM279 418h1v1h-1zM279 420h1v1h-1zM279 467h1v1h-1zM279 517h1v1h-1zM279 567h1v1h-1zM279 617h1v1h-1zM279 665h1v1h-1zM279 667h1v1h-1zM281 417h1v1h-1zM283 417h1v1h-1zM285 417h1v1h-1zM287 417h1v1h-1zM289 417h1v1h-1zM291 417h1v1h-1zM293 417h1v1h-1zM295 417h1v1h-1zM297 417h1v1h-1zM299 167h1v1h-1zM299 169h1v1h-1zM299 217h1v1h-1zM299 267h1v1h-1zM299 317h1v1h-1zM299 367h1v1h-1zM299 414h1v1h-1zM299 416h1v1h-1zM299 417h1v1h-1zM299 418h1v1h-1zM299 420h1v1h-1zM299 467h1v1h-1zM299 517h1v1h-1zM299 567h1v1h-1zM299 617h1v1h-1zM299 665h1v1h-1zM299 667h1v1h-1zM301 417h1v1h-1zM303 417h1v1h-1zM305 417h1v1h-1zM307 417h1v1h-1zM309 417h1v1h-1zM311 417h1v1h-1zM313 417h1v1h-1zM315 417h1v1h-1zM317 417h1v1h-1zM319 168h1v1h-1zM319 170h1v1h-1zM319 172h1v1h-1zM319 177h1v1h-1zM319 187h1v1h-1zM319 197h1v1h-1zM319 207h1v1h-1zM319 217h1v1h-1zM319 227h1v1h-1zM319 237h1v1h-1zM319 247h1v1h-1zM319 257h1v1h-1zM319 267h1v1h-1zM319 277h1v1h-1zM319 287h1v1h-1zM319 297h1v1h-1zM319 307h1v1h-1zM319 317h1v1h-1zM319 327h1v1h-1zM319 337h1v1h-1zM319 347h1v1h-1zM319 357h1v1h-1zM319 367h1v1h-1zM319 377h1v1h-1zM319 387h1v1h-1zM319 397h1v1h-1zM319 407h1v1h-1zM319 412h1v1h-1zM319 414h1v1h-1zM319 416h1v1h-1zM319 417h1v1h-1zM319 418h1v1h-1zM319 420h1v1h-1zM319 422h1v1h-1zM319 427h1v1h-1zM319 437h1v1h-1zM319 447h1v1h-1zM319 457h1v1h-1zM319 467h1v1h-1zM319 477h1v1h-1zM319 487h1v1h-1zM319 497h1v1h-1zM319 507h1v1h-1zM319 517h1v1h-1zM319 527h1v1h-1zM319 537h1v1h-1zM319 547h1v1h-1zM319 557h1v1h-1zM319 567h1v1h-1zM319 577h1v1h-1zM319 587h1v1h-1zM319 597h1v1h-1zM319 607h1v1h-1zM319 617h1v1h-1zM319 627h1v1h-1zM319 637h1v1h-1zM319 647h1v1h-1zM319 657h1v1h-1zM319 662h1v1h-1zM319 664h1v1h-1zM319 666h1v1h-1zM321 417h1v1h-1zM323 417h1v1h-1zM325 417h1v1h-1zM327 417h1v1h-1zM329 417h1v1h-1zM331 417h1v1h-1zM333 417h1v1h-1zM335 417h1v1h-1zM337 417h1v1h-1zM339 167h1v1h-1zM339 169h1v1h-1zM339 217h1v1h-1zM339 267h1v1h-1zM339 317h1v1h-1zM339 367h1v1h-1zM339 414h1v1h-1zM339 416h1v1h-1zM339 417h1v1h-1zM339 418h1v1h-1zM339 420h1v1h-1zM339 467h1v1h-1zM339 517h1v1h-1zM339 567h1v1h-1zM339 617h1v1h-1zM339 665h1v1h-1zM339 667h1v1h-1zM341 417h1v1h-1zM343 417h1v1h-1zM345 417h1v1h-1zM347 417h1v1h-1zM349 417h1v1h-1zM351 417h1v1h-1zM353 417h1v1h-1zM355 417h1v1h-1zM357 417h1v1h-1zM359 167h1v1h-1zM359 169h1v1h-1zM359 217h1v1h-1zM359 267h1v1h-1zM359 317h1v1h-1zM359 367h1v1h-1zM359 414h1v1h-1zM359 416h1v1h-1zM359 417h1v1h-1zM359 418h1v1h-1zM359 420h1v1h-1zM359 467h1v1h-1zM359 517h1v1h-1zM359 567h1v1h-1zM359 617h1v1h-1zM359 665h1v1h-1zM359 667h1v1h-1zM361 417h1v1h-1zM363 417h1v1h-1zM365 417h1v1h-1zM367 417h1v1h-1zM369 417h1v1h-1zM371 417h1v1h-1zM373 417h1v1h-1zM375 417h1v1h-1zM377 417h1v1h-1zM379 167h1v1h-1zM379 169h1v1h-1zM379 217h1v1h-1zM379 267h1v1h-1zM379 317h1v1h-1zM379 367h1v1h-1zM379 414h1v1h-1zM379 416h1v1h-1zM379 417h1v1h-1zM379 418h1v1h-1zM379 420h1v1h-1zM379 467h1v1h-1zM379 517h1v1h-1zM379 567h1v1h-1zM379 617h1v1h-1zM379 665h1v1h-1zM379 667h1v1h-1zM381 417h1v1h-1zM383 417h1v1h-1zM385 417h1v1h-1zM387 417h1v1h-1zM389 417h1v1h-1zM391 417h1v1h-1zM393 417h1v1h-1zM395 417h1v1h-1zM397 417h1v1h-1zM399 167h1v1h-1zM399 169h1v1h-1zM399 217h1v1h-1zM399 267h1v1h-1zM399 317h1v1h-1zM399 367h1v1h-1zM399 414h1v1h-1zM399 416h1v1h-1zM399 417h1v1h-1zM399 418h1v1h-1zM399 420h1v1h-1zM399 467h1v1h-1zM399 517h1v1h-1zM399 567h1v1h-1zM399 617h1v1h-1zM399 665h1v1h-1zM399 667h1v1h-1zM401 417h1v1h-1zM403 417h1v1h-1zM405 417h1v1h-1zM407 417h1v1h-1zM409 417h1v1h-1zM411 417h1v1h-1zM413 417h1v1h-1zM415 417h1v1h-1zM417 417h1v1h-1zM419 168h1v1h-1zM419 170h1v1h-1zM419 172h1v1h-1zM419 177h1v1h-1zM419 187h1v1h-1zM419 197h1v1h-1zM419 207h1v1h-1zM419 217h1v1h-1zM419 227h1v1h-1zM419 237h1v1h-1zM419 247h1v1h-1zM419 257h1v1h-1zM419 267h1v1h-1zM419 277h1v1h-1zM419 287h1v1h-1zM419 297h1v1h-1zM419 307h1v1h-1zM419 317h1v1h-1zM419 327h1v1h-1zM419 337h1v1h-1zM419 347h1v1h-1zM419 357h1v1h-1zM419 367h1v1h-1zM419 377h1v1h-1zM419 387h1v1h-1zM419 397h1v1h-1zM419 407h1v1h-1zM419 412h1v1h-1zM419 414h1v1h-1zM419 416h1v1h-1zM419 417h1v1h-1zM419 418h1v1h-1zM419 420h1v1h-1zM419 422h1v1h-1zM419 427h1v1h-1zM419 437h1v1h-1zM419 447h1v1h-1zM419 457h1v1h-1zM419 467h1v1h-1zM419 477h1v1h-1zM419 487h1v1h-1zM419 497h1v1h-1zM419 507h1v1h-1zM419 517h1v1h-1zM419 527h1v1h-1zM419 537h1v1h-1zM419 547h1v1h-1zM419 557h1v1h-1zM419 567h1v1h-1zM419 577h1v1h-1zM419 587h1v1h-1zM419 597h1v1h-1zM419 607h1v1h-1zM419 617h1v1h-1zM419 627h1v1h-1zM419 637h1v1h-1zM419 647h1v1h-1zM419 657h1v1h-1zM419 662h1v1h-1zM419 664h1v1h-1zM419 666h1v1h-1zM421 417h1v1h-1zM423 417h1v1h-1zM425 417h1v1h-1zM427 417h1v1h-1zM429 417h1v1h-1zM431 417h1v1h-1zM433 417h1v1h-1zM435 417h1v1h-1zM437 417h1v1h-1zM439 167h1v1h-1zM439 169h1v1h-1zM439 217h1v1h-1zM439 267h1v1h-1zM439 317h1v1h-1zM439 367h1v1h-1zM439 414h1v1h-1zM439 416h1v1h-1zM439 417h1v1h-1zM439 418h1v1h-1zM439 420h1v1h-1zM439 467h1v1h-1zM439 517h1v1h-1zM439 567h1v1h-1zM439 617h1v1h-1zM439 665h1v1h-1zM439 667h1v1h-1zM441 417h1v1h-1zM443 417h1v1h-1zM445 417h1v1h-1zM447 417h1v1h-1zM449 417h1v1h-1zM451 417h1v1h-1zM453 417h1v1h-1zM455 417h1v1h-1zM457 417h1v1h-1zM459 167h1v1h-1zM459 169h1v1h-1zM459 217h1v1h-1zM459 267h1v1h-1zM459 317h1v1h-1zM459 367h1v1h-1zM459 414h1v1h-1zM459 416h1v1h-1zM459 417h1v1h-1zM459 418h1v1h-1zM459 420h1v1h-1zM459 467h1v1h-1zM459 517h1v1h-1zM459 567h1v1h-1zM459 617h1v1h-1zM459 665h1v1h-1zM459 667h1v1h-1zM461 417h1v1h-1zM463 417h1v1h-1zM465 417h1v1h-1zM467 417h1v1h-1zM469 417h1v1h-1zM471 417h1v1h-1zM473 417h1v1h-1zM475 417h1v1h-1zM477 417h1v1h-1zM479 167h1v1h-1zM479 169h1v1h-1zM479 217h1v1h-1zM479 267h1v1h-1zM479 317h1v1h-1zM479 367h1v1h-1zM479 414h1v1h-1zM479 416h1v1h-1zM479 417h1v1h-1zM479 418h1v1h-1zM479 420h1v1h-1zM479 467h1v1h-1zM479 517h1v1h-1zM479 567h1v1h-1zM479 617h1v1h-1zM479 665h1v1h-1zM479 667h1v1h-1zM481 417h1v1h-1zM483 417h1v1h-1zM485 417h1v1h-1zM487 417h1v1h-1zM489 417h1v1h-1zM491 417h1v1h-1zM493 417h1v1h-1zM495 417h1v1h-1zM497 417h1v1h-1zM499 167h1v1h-1zM499 169h1v1h-1zM499 217h1v1h-1zM499 267h1v1h-1zM499 317h1v1h-1zM499 367h1v1h-1zM499 414h1v1h-1zM499 416h1v1h-1zM499 417h1v1h-1zM499 418h1v1h-1zM499 420h1v1h-1zM499 467h1v1h-1zM499 517h1v1h-1zM499 567h1v1h-1zM499 617h1v1h-1zM499 665h1v1h-1zM499 667h1v1h-1zM501 417h1v1h-1zM503 417h1v1h-1zM505 417h1v1h-1zM507 417h1v1h-1zM509 417h1v1h-1zM511 417h1v1h-1zM513 217h1v1h-1zM513 267h1v1h-1zM513 317h1v1h-1zM513 367h1v1h-1zM513 417h1v1h-1zM513 467h1v1h-1zM513 517h1v1h-1zM513 567h1v1h-1zM513 617h1v1h-1zM515 217h1v1h-1zM515 267h1v1h-1zM515 317h1v1h-1zM515 367h1v1h-1zM515 417h1v1h-1zM515 467h1v1h-1zM515 517h1v1h-1zM515 567h1v1h-1zM515 617h1v1h-1zM516 177h1v1h-1zM516 187h1v1h-1zM516 197h1v1h-1zM516 207h1v1h-1zM516 227h1v1h-1zM516 237h1v1h-1zM516 247h1v1h-1zM516 257h1v1h-1zM516 277h1v1h-1zM516 287h1v1h-1zM516 297h1v1h-1zM516 307h1v1h-1zM516 327h1v1h-1zM516 337h1v1h-1zM516 347h1v1h-1zM516 357h1v1h-1zM516 377h1v1h-1zM516 387h1v1h-1zM516 397h1v1h-1zM516 407h1v1h-1zM516 417h1v1h-1zM516 427h1v1h-1zM516 437h1v1h-1zM516 447h1v1h-1zM516 457h1v1h-1zM516 477h1v1h-1zM516 487h1v1h-1zM516 497h1v1h-1zM516 507h1v1h-1zM516 527h1v1h-1zM516 537h1v1h-1zM516 547h1v1h-1zM516 557h1v1h-1zM516 577h1v1h-1zM516 587h1v1h-1zM516 597h1v1h-1zM516 607h1v1h-1zM516 627h1v1h-1zM516 637h1v1h-1zM516 647h1v1h-1zM516 657h1v1h-1zM517 217h1v1h-1zM517 267h1v1h-1zM517 317h1v1h-1zM517 367h1v1h-1zM517 417h1v1h-1zM517 467h1v1h-1zM517 517h1v1h-1zM517 567h1v1h-1zM517 617h1v1h-1zM518 177h1v1h-1zM518 187h1v1h-1zM518 197h1v1h-1zM518 207h1v1h-1zM518 227h1v1h-1zM518 237h1v1h-1zM518 247h1v1h-1zM518 257h1v1h-1zM518 277h1v1h-1zM518 287h1v1h-1zM518 297h1v1h-1zM518 307h1v1h-1zM518 327h1v1h-1zM518 337h1v1h-1zM518 347h1v1h-1zM518 357h1v1h-1zM518 377h1v1h-1zM518 387h1v1h-1zM518 397h1v1h-1zM518 407h1v1h-1zM518 417h1v1h-1zM518 427h1v1h-1zM518 437h1v1h-1zM518 447h1v1h-1zM518 457h1v1h-1zM518 477h1v1h-1zM518 487h1v1h-1zM518 497h1v1h-1zM518 507h1v1h-1zM518 527h1v1h-1zM518 537h1v1h-1zM518 547h1v1h-1zM518 557h1v1h-1zM518 577h1v1h-1zM518 587h1v1h-1zM518 597h1v1h-1zM518 607h1v1h-1zM518 627h1v1h-1zM518 637h1v1h-1zM518 647h1v1h-1zM518 657h1v1h-1zM519 168h1v1h-1zM519 170h1v1h-1zM519 172h1v1h-1zM519 174h1v1h-1zM519 176h1v1h-1zM519 177h1v1h-1zM519 178h1v1h-1zM519 180h1v1h-1zM519 182h1v1h-1zM519 184h1v1h-1zM519 186h1v1h-1zM519 187h1v1h-1zM519 188h1v1h-1zM519 190h1v1h-1zM519 192h1v1h-1zM519 194h1v1h-1zM519 196h1v1h-1zM519 197h1v1h-1zM519 198h1v1h-1zM519 200h1v1h-1zM519 202h1v1h-1zM519 204h1v1h-1zM519 206h1v1h-1zM519 207h1v1h-1zM519 208h1v1h-1zM519 210h1v1h-1zM519 212h1v1h-1zM519 214h1v1h-1zM519 216h1v1h-1zM519 217h1v1h-1zM519 218h1v1h-1zM519 220h1v1h-1zM519 222h1v1h-1zM519 224h1v1h-1zM519 226h1v1h-1zM519 227h1v1h-1zM519 228h1v1h-1zM519 230h1v1h-1zM519 232h1v1h-1zM519 234h1v1h-1zM519 236h1v1h-1zM519 237h1v1h-1zM519 238h1v1h-1zM519 240h1v1h-1zM519 242h1v1h-1zM519 244h1v1h-1zM519 246h1v1h-1zM519 247h1v1h-1zM519 248h1v1h-1zM519 250h1v1h-1zM519 252h1v1h-1zM519 254h1v1h-1zM519 256h1v1h-1zM519 257h1v1h-1zM519 258h1v1h-1zM519 260h1v1h-1zM519 262h1v1h-1zM519 264h1v1h-1zM519 266h1v1h-1zM519 267h1v1h-1zM519 268h1v1h-1zM519 270h1v1h-1zM519 272h1v1h-1zM519 274h1v1h-1zM519 276h1v1h-1zM519 277h1v1h-1zM519 278h1v1h-1zM519 280h1v1h-1zM519 282h1v1h-1zM519 284h1v1h-1zM519 286h1v1h-1zM519 287h1v1h-1zM519 288h1v1h-1zM519 290h1v1h-1zM519 292h1v1h-1zM519 294h1v1h-1zM519 296h1v1h-1zM519 297h1v1h-1zM519 298h1v1h-1zM519 300h1v1h-1zM519 302h1v1h-1zM519 304h1v1h-1zM519 306h1v1h-1zM519 307h1v1h-1zM519 308h1v1h-1zM519 310h1v1h-1zM519 312h1v1h-1zM519 314h1v1h-1zM519 316h1v1h-1zM519 317h1v1h-1zM519 318h1v1h-1zM519 320h1v1h-1zM519 322h1v1h-1zM519 324h1v1h-1zM519 326h1v1h-1zM519 327h1v1h-1zM519 328h1v1h-1zM519 330h1v1h-1zM519 332h1v1h-1zM519 334h1v1h-1zM519 336h1v1h-1zM519 337h1v1h-1zM519 338h1v1h-1zM519 340h1v1h-1zM519 342h1v1h-1zM519 344h1v1h-1zM519 346h1v1h-1zM519 347h1v1h-1zM519 348h1v1h-1zM519 350h1v1h-1zM519 352h1v1h-1zM519 354h1v1h-1zM519 356h1v1h-1zM519 357h1v1h-1zM519 358h1v1h-1zM519 360h1v1h-1zM519 362h1v1h-1zM519 364h1v1h-1zM519 366h1v1h-1zM519 367h1v1h-1zM519 368h1v1h-1zM519 370h1v1h-1zM519 372h1v1h-1zM519 374h1v1h-1zM519 376h1v1h-1zM519 377h1v1h-1zM519 378h1v1h-1zM519 380h1v1h-1zM519 382h1v1h-1zM519 384h1v1h-1zM519 386h1v1h-1zM519 387h1v1h-1zM519 388h1v1h-1zM519 390h1v1h-1zM519 392h1v1h-1zM519 394h1v1h-1zM519 396h1v1h-1zM519 397h1v1h-1zM519 398h1v1h-1zM519 400h1v1h-1zM519 402h1v1h-1zM519 404h1v1h-1zM519 406h1v1h-1zM519 407h1v1h-1zM519 408h1v1h-1zM519 410h1v1h-1zM519 412h1v1h-1zM519 414h1v1h-1zM519 416h1v1h-1zM519 417h1v1h-1zM519 418h1v1h-1zM519 420h1v1h-1zM519 422h1v1h-1zM519 424h1v1h-1zM519 426h1v1h-1zM519 427h1v1h-1zM519 428h1v1h-1zM519 430h1v1h-1zM519 432h1v1h-1zM519 434h1v1h-1zM519 436h1v1h-1zM519 437h1v1h-1zM519 438h1v1h-1zM519 440h1v1h-1zM519 442h1v1h-1zM519 444h1v1h-1zM519 446h1v1h-1zM519 447h1v1h-1zM519 448h1v1h-1zM519 450h1v1h-1zM519 452h1v1h-1zM519 454h1v1h-1zM519 456h1v1h-1zM519 457h1v1h-1zM519 458h1v1h-1zM519 460h1v1h-1zM519 462h1v1h-1zM519 464h1v1h-1zM519 466h1v1h-1zM519 467h1v1h-1zM519 468h1v1h-1zM519 470h1v1h-1zM519 472h1v1h-1zM519 474h1v1h-1zM519 476h1v1h-1zM519 477h1v1h-1zM519 478h1v1h-1zM519 480h1v1h-1zM519 482h1v1h-1zM519 484h1v1h-1zM519 486h1v1h-1zM519 487h1v1h-1zM519 488h1v1h-1zM519 490h1v1h-1zM519 492h1v1h-1zM519 494h1v1h-1zM519 496h1v1h-1zM519 497h1v1h-1zM519 498h1v1h-1zM519 500h1v1h-1zM519 502h1v1h-1zM519 504h1v1h-1zM519 506h1v1h-1zM519 507h1v1h-1zM519 508h1v1h-1zM519 510h1v1h-1zM519 512h1v1h-1zM519 514h1v1h-1zM519 516h1v1h-1zM519 517h1v1h-1zM519 518h1v1h-1zM519 520h1v1h-1zM519 522h1v1h-1zM519 524h1v1h-1zM519 526h1v1h-1zM519 527h1v1h-1zM519 528h1v1h-1zM519 530h1v1h-1zM519 532h1v1h-1zM519 534h1v1h-1zM519 536h1v1h-1zM519 537h1v1h-1zM519 538h1v1h-1zM519 540h1v1h-1zM519 542h1v1h-1zM519 544h1v1h-1zM519 546h1v1h-1zM519 547h1v1h-1zM519 548h1v1h-1zM519 550h1v1h-1zM519 552h1v1h-1zM519 554h1v1h-1zM519 556h1v1h-1zM519 557h1v1h-1zM519 558h1v1h-1zM519 560h1v1h-1zM519 562h1v1h-1zM519 564h1v1h-1zM519 566h1v1h-1zM519 567h1v1h-1zM519 568h1v1h-1zM519 570h1v1h-1zM519 572h1v1h-1zM519 574h1v1h-1zM519 576h1v1h-1zM519 577h1v1h-1zM519 578h1v1h-1zM519 580h1v1h-1zM519 582h1v1h-1zM519 584h1v1h-1zM519 586h1v1h-1zM519 587h1v1h-1zM519 588h1v1h-1zM519 590h1v1h-1zM519 592h1v1h-1zM519 594h1v1h-1zM519 596h1v1h-1zM519 597h1v1h-1zM519 598h1v1h-1zM519 600h1v1h-1zM519 602h1v1h-1zM519 604h1v1h-1zM519 606h1v1h-1zM519 607h1v1h-1zM519 608h1v1h-1zM519 610h1v1h-1zM519 612h1v1h-1zM519 614h1v1h-1zM519 616h1v1h-1zM519 617h1v1h-1zM519 618h1v1h-1zM519 620h1v1h-1zM519 622h1v1h-1zM519 624h1v1h-1zM519 626h1v1h-1zM519 627h1v1h-1zM519 628h1v1h-1zM519 630h1v1h-1zM519 632h1v1h-1zM519 634h1v1h-1zM519 636h1v1h-1zM519 637h1v1h-1zM519 638h1v1h-1zM519 640h1v1h-1zM519 642h1v1h-1zM519 644h1v1h-1zM519 646h1v1h-1zM519 647h1v1h-1zM519 648h1v1h-1zM519 650h1v1h-1zM519 652h1v1h-1zM519 654h1v1h-1zM519 656h1v1h-1zM519 657h1v1h-1zM519 658h1v1h-1zM519 660h1v1h-1zM519 662h1v1h-1zM519 664h1v1h-1zM519 666h1v1h-1zM520 177h1v1h-1zM520 187h1v1h-1zM520 197h1v1h-1zM520 207h1v1h-1zM520 227h1v1h-1zM520 237h1v1h-1zM520 247h1v1h-1zM520 257h1v1h-1zM520 277h1v1h-1zM520 287h1v1h-1zM520 297h1v1h-1zM520 307h1v1h-1zM520 327h1v1h-1zM520 337h1v1h-1zM520 347h1v1h-1zM520 357h1v1h-1zM520 377h1v1h-1zM520 387h1v1h-1zM520 397h1v1h-1zM520 407h1v1h-1zM520 417h1v1h-1zM520 427h1v1h-1zM520 437h1v1h-1zM520 447h1v1h-1zM520 457h1v1h-1zM520 477h1v1h-1zM520 487h1v1h-1zM520 497h1v1h-1zM520 507h1v1h-1zM520 527h1v1h-1zM520 537h1v1h-1zM520 547h1v1h-1zM520 557h1v1h-1zM520 577h1v1h-1zM520 587h1v1h-1zM520 597h1v1h-1zM520 607h1v1h-1zM520 627h1v1h-1zM520 637h1v1h-1zM520 647h1v1h-1zM520 657h1v1h-1zM521 217h1v1h-1zM521 267h1v1h-1zM521 317h1v1h-1zM521 367h1v1h-1zM521 417h1v1h-1zM521 467h1v1h-1zM521 517h1v1h-1zM521 567h1v1h-1zM521 617h1v1h-1zM522 177h1v1h-1zM522 187h1v1h-1zM522 197h1v1h-1zM522 207h1v1h-1zM522 227h1v1h-1zM522 237h1v1h-1zM522 247h1v1h-1zM522 257h1v1h-1zM522 277h1v1h-1zM522 287h1v1h-1zM522 297h1v1h-1zM522 307h1v1h-1zM522 327h1v1h-1zM522 337h1v1h-1zM522 347h1v1h-1zM522 357h1v1h-1zM522 377h1v1h-1zM522 387h1v1h-1zM522 397h1v1h-1zM522 407h1v1h-1zM522 417h1v1h-1zM522 427h1v1h-1zM522 437h1v1h-1zM522 447h1v1h-1zM522 457h1v1h-1zM522 477h1v1h-1zM522 487h1v1h-1zM522 497h1v1h-1zM522 507h1v1h-1zM522 527h1v1h-1zM522 537h1v1h-1zM522 547h1v1h-1zM522 557h1v1h-1zM522 577h1v1h-1zM522 587h1v1h-1zM522 597h1v1h-1zM522 607h1v1h-1zM522 627h1v1h-1zM522 637h1v1h-1zM522 647h1v1h-1zM522 657h1v1h-1zM523 217h1v1h-1zM523 267h1v1h-1zM523 317h1v1h-1zM523 367h1v1h-1zM523 417h1v1h-1zM523 467h1v1h-1zM523 517h1v1h-1zM523 567h1v1h-1zM523 617h1v1h-1zM525 217h1v1h-1zM525 267h1v1h-1zM525 317h1v1h-1zM525 367h1v1h-1zM525 417h1v1h-1zM525 467h1v1h-1zM525 517h1v1h-1zM525 567h1v1h-1zM525 617h1v1h-1zM527 417h1v1h-1zM529 417h1v1h-1zM531 417h1v1h-1zM533 417h1v1h-1zM535 417h1v1h-1zM537 417h1v1h-1zM539 167h1v1h-1zM539 169h1v1h-1zM539 217h1v1h-1zM539 267h1v1h-1zM539 317h1v1h-1zM539 367h1v1h-1zM539 414h1v1h-1zM539 416h1v1h-1zM539 417h1v1h-1zM539 418h1v1h-1zM539 420h1v1h-1zM539 467h1v1h-1zM539 517h1v1h-1zM539 567h1v1h-1zM539 617h1v1h-1zM539 665h1v1h-1zM539 667h1v1h-1zM541 417h1v1h-1zM543 417h1v1h-1zM545 417h1v1h-1zM547 417h1v1h-1zM549 417h1v1h-1zM551 417h1v1h-1zM553 417h1v1h-1zM555 417h1v1h-1zM557 417h1v1h-1zM559 167h1v1h-1zM559 169h1v1h-1zM559 217h1v1h-1zM559 267h1v1h-1zM559 317h1v1h-1zM559 367h1v1h-1zM559 414h1v1h-1zM559 416h1v1h-1zM559 417h1v1h-1zM559 418h1v1h-1zM559 420h1v1h-1zM559 467h1v1h-1zM559 517h1v1h-1zM559 567h1v1h-1zM559 617h1v1h-1zM559 665h1v1h-1zM559 667h1v1h-1zM561 417h1v1h-1zM563 417h1v1h-1zM565 417h1v1h-1zM567 417h1v1h-1zM569 417h1v1h-1zM571 417h1v1h-1zM573 417h1v1h-1zM575 417h1v1h-1zM577 417h1v1h-1zM579 167h1v1h-1zM579 169h1v1h-1zM579 217h1v1h-1zM579 267h1v1h-1zM579 317h1v1h-1zM579 367h1v1h-1zM579 414h1v1h-1zM579 416h1v1h-1zM579 417h1v1h-1zM579 418h1v1h-1zM579 420h1v1h-1zM579 467h1v1h-1zM579 517h1v1h-1zM579 567h1v1h-1zM579 617h1v1h-1zM579 665h1v1h-1zM579 667h1v1h-1zM581 417h1v1h-1zM583 417h1v1h-1zM585 417h1v1h-1zM587 417h1v1h-1zM589 417h1v1h-1zM591 417h1v1h-1zM593 417h1v1h-1zM595 417h1v1h-1zM597 417h1v1h-1zM599 167h1v1h-1zM599 169h1v1h-1zM599 217h1v1h-1zM599 267h1v1h-1zM599 317h1v1h-1zM599 367h1v1h-1zM599 414h1v1h-1zM599 416h1v1h-1zM599 417h1v1h-1zM599 418h1v1h-1zM599 420h1v1h-1zM599 467h1v1h-1zM599 517h1v1h-1zM599 567h1v1h-1zM599 617h1v1h-1zM599 665h1v1h-1zM599 667h1v1h-1zM601 417h1v1h-1zM603 417h1v1h-1zM605 417h1v1h-1zM607 417h1v1h-1zM609 417h1v1h-1zM611 417h1v1h-1zM613 417h1v1h-1zM615 417h1v1h-1zM617 417h1v1h-1zM619 168h1v1h-1zM619 170h1v1h-1zM619 172h1v1h-1zM619 177h1v1h-1zM619 187h1v1h-1zM619 197h1v1h-1zM619 207h1v1h-1zM619 217h1v1h-1zM619 227h1v1h-1zM619 237h1v1h-1zM619 247h1v1h-1zM619 257h1v1h-1zM619 267h1v1h-1zM619 277h1v1h-1zM619 287h1v1h-1zM619 297h1v1h-1zM619 307h1v1h-1zM619 317h1v1h-1zM619 327h1v1h-1zM619 337h1v1h-1zM619 347h1v1h-1zM619 357h1v1h-1zM619 367h1v1h-1zM619 377h1v1h-1zM619 387h1v1h-1zM619 397h1v1h-1zM619 407h1v1h-1zM619 412h1v1h-1zM619 414h1v1h-1zM619 416h1v1h-1zM619 417h1v1h-1zM619 418h1v1h-1zM619 420h1v1h-1zM619 422h1v1h-1zM619 427h1v1h-1zM619 437h1v1h-1zM619 447h1v1h-1zM619 457h1v1h-1zM619 467h1v1h-1zM619 477h1v1h-1zM619 487h1v1h-1zM619 497h1v1h-1zM619 507h1v1h-1zM619 517h1v1h-1zM619 527h1v1h-1zM619 537h1v1h-1zM619 547h1v1h-1zM619 557h1v1h-1zM619 567h1v1h-1zM619 577h1v1h-1zM619 587h1v1h-1zM619 597h1v1h-1zM619 607h1v1h-1zM619 617h1v1h-1zM619 627h1v1h-1zM619 637h1v1h-1zM619 647h1v1h-1zM619 657h1v1h-1zM619 662h1v1h-1zM619 664h1v1h-1zM619 666h1v1h-1zM621 417h1v1h-1zM623 417h1v1h-1zM625 417h1v1h-1zM627 417h1v1h-1zM629 417h1v1h-1zM631 417h1v1h-1zM633 417h1v1h-1zM635 417h1v1h-1zM637 417h1v1h-1zM639 167h1v1h-1zM639 169h1v1h-1zM639 217h1v1h-1zM639 267h1v1h-1zM639 317h1v1h-1zM639 367h1v1h-1zM639 414h1v1h-1zM639 416h1v1h-1zM639 417h1v1h-1zM639 418h1v1h-1zM639 420h1v1h-1zM639 467h1v1h-1zM639 517h1v1h-1zM639 567h1v1h-1zM639 617h1v1h-1zM639 665h1v1h-1zM639 667h1v1h-1zM641 417h1v1h-1zM643 417h1v1h-1zM645 417h1v1h-1zM647 417h1v1h-1zM649 417h1v1h-1zM651 417h1v1h-1zM653 417h1v1h-1zM655 417h1v1h-1zM657 417h1v1h-1zM659 167h1v1h-1zM659 169h1v1h-1zM659 217h1v1h-1zM659 267h1v1h-1zM659 317h1v1h-1zM659 367h1v1h-1zM659 414h1v1h-1zM659 416h1v1h-1zM659 417h1v1h-1zM659 418h1v1h-1zM659 420h1v1h-1zM659 467h1v1h-1zM659 517h1v1h-1zM659 567h1v1h-1zM659 617h1v1h-1zM659 665h1v1h-1zM659 667h1v1h-1zM661 417h1v1h-1zM663 417h1v1h-1zM665 417h1v1h-1zM667 417h1v1h-1zM669 417h1v1h-1zM671 417h1v1h-1zM673 417h1v1h-1zM675 417h1v1h-1zM677 417h1v1h-1zM679 167h1v1h-1zM679 169h1v1h-1zM679 217h1v1h-1zM679 267h1v1h-1zM679 317h1v1h-1zM679 367h1v1h-1zM679 414h1v1h-1zM679 416h1v1h-1zM679 417h1v1h-1zM679 418h1v1h-1zM679 420h1v1h-1zM679 467h1v1h-1zM679 517h1v1h-1zM679 567h1v1h-1zM679 617h1v1h-1zM679 665h1v1h-1zM679 667h1v1h-1zM681 417h1v1h-1zM683 417h1v1h-1zM685 417h1v1h-1zM687 417h1v1h-1zM689 417h1v1h-1zM691 417h1v1h-1zM693 417h1v1h-1zM695 417h1v1h-1zM697 417h1v1h-1zM699 167h1v1h-1zM699 169h1v1h-1zM699 217h1v1h-1zM699 267h1v1h-1zM699 317h1v1h-1zM699 367h1v1h-1zM699 414h1v1h-1zM699 416h1v1h-1zM699 417h1v1h-1zM699 418h1v1h-1zM699 420h1v1h-1zM699 467h1v1h-1zM699 517h1v1h-1zM699 567h1v1h-1zM699 617h1v1h-1zM699 665h1v1h-1zM699 667h1v1h-1zM701 417h1v1h-1zM703 417h1v1h-1zM705 417h1v1h-1zM707 417h1v1h-1zM709 417h1v1h-1zM711 417h1v1h-1zM713 417h1v1h-1zM715 417h1v1h-1zM717 417h1v1h-1zM719 168h1v1h-1zM719 170h1v1h-1zM719 172h1v1h-1zM719 177h1v1h-1zM719 187h1v1h-1zM719 197h1v1h-1zM719 207h1v1h-1zM719 217h1v1h-1zM719 227h1v1h-1zM719 237h1v1h-1zM719 247h1v1h-1zM719 257h1v1h-1zM719 267h1v1h-1zM719 277h1v1h-1zM719 287h1v1h-1zM719 297h1v1h-1zM719 307h1v1h-1zM719 317h1v1h-1zM719 327h1v1h-1zM719 337h1v1h-1zM719 347h1v1h-1zM719 357h1v1h-1zM719 367h1v1h-1zM719 377h1v1h-1zM719 387h1v1h-1zM719 397h1v1h-1zM719 407h1v1h-1zM719 412h1v1h-1zM719 414h1v1h-1zM719 416h1v1h-1zM719 417h1v1h-1zM719 418h1v1h-1zM719 420h1v1h-1zM719 422h1v1h-1zM719 427h1v1h-1zM719 437h1v1h-1zM719 447h1v1h-1zM719 457h1v1h-1zM719 467h1v1h-1zM719 477h1v1h-1zM719 487h1v1h-1zM719 497h1v1h-1zM719 507h1v1h-1zM719 517h1v1h-1zM719 527h1v1h-1zM719 537h1v1h-1zM719 547h1v1h-1zM719 557h1v1h-1zM719 567h1v1h-1zM719 577h1v1h-1zM719 587h1v1h-1zM719 597h1v1h-1zM719 607h1v1h-1zM719 617h1v1h-1zM719 627h1v1h-1zM719 637h1v1h-1zM719 647h1v1h-1zM719 657h1v1h-1zM719 662h1v1h-1zM719 664h1v1h-1zM719 666h1v1h-1zM721 417h1v1h-1zM723 417h1v1h-1zM725 417h1v1h-1zM727 417h1v1h-1zM729 417h1v1h-1zM731 417h1v1h-1zM733 417h1v1h-1zM735 417h1v1h-1zM737 417h1v1h-1zM739 167h1v1h-1zM739 169h1v1h-1zM739 217h1v1h-1zM739 267h1v1h-1zM739 317h1v1h-1zM739 367h1v1h-1zM739 414h1v1h-1zM739 416h1v1h-1zM739 417h1v1h-1zM739 418h1v1h-1zM739 420h1v1h-1zM739 467h1v1h-1zM739 517h1v1h-1zM739 567h1v1h-1zM739 617h1v1h-1zM739 665h1v1h-1zM739 667h1v1h-1zM741 417h1v1h-1zM743 417h1v1h-1zM745 417h1v1h-1zM747 417h1v1h-1zM749 417h1v1h-1zM751 417h1v1h-1zM753 417h1v1h-1zM755 417h1v1h-1zM757 417h1v1h-1zM759 167h1v1h-1zM759 169h1v1h-1zM759 217h1v1h-1zM759 267h1v1h-1zM759 317h1v1h-1zM759 367h1v1h-1zM759 414h1v1h-1zM759 416h1v1h-1zM759 417h1v1h-1zM759 418h1v1h-1zM759 420h1v1h-1zM759 467h1v1h-1zM759 517h1v1h-1zM759 567h1v1h-1zM759 617h1v1h-1zM759 665h1v1h-1zM759 667h1v1h-1zM761 417h1v1h-1zM763 417h1v1h-1zM765 417h1v1h-1zM767 417h1v1h-1zM769 417h1v1h-1zM771 417h1v1h-1zM773 417h1v1h-1zM775 417h1v1h-1zM777 417h1v1h-1zM779 167h1v1h-1zM779 169h1v1h-1zM779 217h1v1h-1zM779 267h1v1h-1zM779 317h1v1h-1zM779 367h1v1h-1zM779 414h1v1h-1zM779 416h1v1h-1zM779 417h1v1h-1zM779 418h1v1h-1zM779 420h1v1h-1zM779 467h1v1h-1zM779 517h1v1h-1zM779 567h1v1h-1zM779 617h1v1h-1zM779 665h1v1h-1zM779 667h1v1h-1zM781 417h1v1h-1zM783 417h1v1h-1zM785 417h1v1h-1zM787 417h1v1h-1zM789 417h1v1h-1zM791 417h1v1h-1zM793 417h1v1h-1zM795 417h1v1h-1zM797 417h1v1h-1zM799 167h1v1h-1zM799 169h1v1h-1zM799 217h1v1h-1zM799 267h1v1h-1zM799 317h1v1h-1zM799 367h1v1h-1zM799 414h1v1h-1zM799 416h1v1h-1zM799 417h1v1h-1zM799 418h1v1h-1zM799 420h1v1h-1zM799 467h1v1h-1zM799 517h1v1h-1zM799 567h1v1h-1zM799 617h1v1h-1zM799 665h1v1h-1zM799 667h1v1h-1zM801 417h1v1h-1zM803 417h1v1h-1zM805 417h1v1h-1zM807 417h1v1h-1zM809 417h1v1h-1zM811 417h1v1h-1zM813 417h1v1h-1zM815 417h1v1h-1zM817 417h1v1h-1zM819 168h1v1h-1zM819 170h1v1h-1zM819 172h1v1h-1zM819 177h1v1h-1zM819 187h1v1h-1zM819 197h1v1h-1zM819 207h1v1h-1zM819 217h1v1h-1zM819 227h1v1h-1zM819 237h1v1h-1zM819 247h1v1h-1zM819 257h1v1h-1zM819 267h1v1h-1zM819 277h1v1h-1zM819 287h1v1h-1zM819 297h1v1h-1zM819 307h1v1h-1zM819 317h1v1h-1zM819 327h1v1h-1zM819 337h1v1h-1zM819 347h1v1h-1zM819 357h1v1h-1zM819 367h1v1h-1zM819 377h1v1h-1zM819 387h1v1h-1zM819 397h1v1h-1zM819 407h1v1h-1zM819 412h1v1h-1zM819 414h1v1h-1zM819 416h1v1h-1zM819 417h1v1h-1zM819 418h1v1h-1zM819 420h1v1h-1zM819 422h1v1h-1zM819 427h1v1h-1zM819 437h1v1h-1zM819 447h1v1h-1zM819 457h1v1h-1zM819 467h1v1h-1zM819 477h1v1h-1zM819 487h1v1h-1zM819 497h1v1h-1zM819 507h1v1h-1zM819 517h1v1h-1zM819 527h1v1h-1zM819 537h1v1h-1zM819 547h1v1h-1zM819 557h1v1h-1zM819 567h1v1h-1zM819 577h1v1h-1zM819 587h1v1h-1zM819 597h1v1h-1zM819 607h1v1h-1zM819 617h1v1h-1zM819 627h1v1h-1zM819 637h1v1h-1zM819 647h1v1h-1zM819 657h1v1h-1zM819 662h1v1h-1zM819 664h1v1h-1zM819 666h1v1h-1zM821 417h1v1h-1zM823 417h1v1h-1zM825 417h1v1h-1zM827 417h1v1h-1zM829 417h1v1h-1zM831 417h1v1h-1zM833 417h1v1h-1zM835 417h1v1h-1zM837 417h1v1h-1zM839 167h1v1h-1zM839 169h1v1h-1zM839 217h1v1h-1zM839 267h1v1h-1zM839 317h1v1h-1zM839 367h1v1h-1zM839 414h1v1h-1zM839 416h1v1h-1zM839 417h1v1h-1zM839 418h1v1h-1zM839 420h1v1h-1zM839 467h1v1h-1zM839 517h1v1h-1zM839 567h1v1h-1zM839 617h1v1h-1zM839 665h1v1h-1zM839 667h1v1h-1zM841 417h1v1h-1zM843 417h1v1h-1zM845 417h1v1h-1zM847 417h1v1h-1zM849 417h1v1h-1zM851 417h1v1h-1zM853 417h1v1h-1zM855 417h1v1h-1zM857 417h1v1h-1zM859 167h1v1h-1zM859 169h1v1h-1zM859 217h1v1h-1zM859 267h1v1h-1zM859 317h1v1h-1zM859 367h1v1h-1zM859 414h1v1h-1zM859 416h1v1h-1zM859 417h1v1h-1zM859 418h1v1h-1zM859 420h1v1h-1zM859 467h1v1h-1zM859 517h1v1h-1zM859 567h1v1h-1zM859 617h1v1h-1zM859 665h1v1h-1zM859 667h1v1h-1zM861 417h1v1h-1zM863 417h1v1h-1zM865 417h1v1h-1zM867 417h1v1h-1zM869 417h1v1h-1zM871 417h1v1h-1zM873 417h1v1h-1zM875 417h1v1h-1zM877 417h1v1h-1zM879 167h1v1h-1zM879 169h1v1h-1zM879 217h1v1h-1zM879 267h1v1h-1zM879 317h1v1h-1zM879 367h1v1h-1zM879 414h1v1h-1zM879 416h1v1h-1zM879 417h1v1h-1zM879 418h1v1h-1zM879 420h1v1h-1zM879 467h1v1h-1zM879 517h1v1h-1zM879 567h1v1h-1zM879 617h1v1h-1zM879 665h1v1h-1zM879 667h1v1h-1zM881 417h1v1h-1zM883 417h1v1h-1zM885 417h1v1h-1zM887 417h1v1h-1zM889 417h1v1h-1zM891 417h1v1h-1zM893 417h1v1h-1zM895 417h1v1h-1zM897 417h1v1h-1zM899 167h1v1h-1zM899 169h1v1h-1zM899 217h1v1h-1zM899 267h1v1h-1zM899 317h1v1h-1zM899 367h1v1h-1zM899 414h1v1h-1zM899 416h1v1h-1zM899 417h1v1h-1zM899 418h1v1h-1zM899 420h1v1h-1zM899 467h1v1h-1zM899 517h1v1h-1zM899 567h1v1h-1zM899 617h1v1h-1zM899 665h1v1h-1zM899 667h1v1h-1zM901 417h1v1h-1zM903 417h1v1h-1zM905 417h1v1h-1zM907 417h1v1h-1zM909 417h1v1h-1zM911 417h1v1h-1zM913 417h1v1h-1zM915 417h1v1h-1zM917 417h1v1h-1zM919 168h1v1h-1zM919 170h1v1h-1zM919 172h1v1h-1zM919 177h1v1h-1zM919 187h1v1h-1zM919 197h1v1h-1zM919 207h1v1h-1zM919 217h1v1h-1zM919 227h1v1h-1zM919 237h1v1h-1zM919 247h1v1h-1zM919 257h1v1h-1zM919 267h1v1h-1zM919 277h1v1h-1zM919 287h1v1h-1zM919 297h1v1h-1zM919 307h1v1h-1zM919 317h1v1h-1zM919 327h1v1h-1zM919 337h1v1h-1zM919 347h1v1h-1zM919 357h1v1h-1zM919 367h1v1h-1zM919 377h1v1h-1zM919 387h1v1h-1zM919 397h1v1h-1zM919 407h1v1h-1zM919 412h1v1h-1zM919 414h1v1h-1zM919 416h1v1h-1zM919 417h1v1h-1zM919 418h1v1h-1zM919 420h1v1h-1zM919 422h1v1h-1zM919 427h1v1h-1zM919 437h1v1h-1zM919 447h1v1h-1zM919 457h1v1h-1zM919 467h1v1h-1zM919 477h1v1h-1zM919 487h1v1h-1zM919 497h1v1h-1zM919 507h1v1h-1zM919 517h1v1h-1zM919 527h1v1h-1zM919 537h1v1h-1zM919 547h1v1h-1zM919 557h1v1h-1zM919 567h1v1h-1zM919 577h1v1h-1zM919 587h1v1h-1zM919 597h1v1h-1zM919 607h1v1h-1zM919 617h1v1h-1zM919 627h1v1h-1zM919 637h1v1h-1zM919 647h1v1h-1zM919 657h1v1h-1zM919 662h1v1h-1zM919 664h1v1h-1zM919 666h1v1h-1zM921 417h1v1h-1zM923 417h1v1h-1zM925 417h1v1h-1zM927 417h1v1h-1zM929 417h1v1h-1zM931 417h1v1h-1zM933 417h1v1h-1zM935 417h1v1h-1zM937 417h1v1h-1zM939 167h1v1h-1zM939 169h1v1h-1zM939 217h1v1h-1zM939 267h1v1h-1zM939 317h1v1h-1zM939 367h1v1h-1zM939 414h1v1h-1zM939 416h1v1h-1zM939 417h1v1h-1zM939 418h1v1h-1zM939 420h1v1h-1zM939 467h1v1h-1zM939 517h1v1h-1zM939 567h1v1h-1zM939 617h1v1h-1zM939 665h1v1h-1zM939 667h1v1h-1zM941 417h1v1h-1zM943 417h1v1h-1zM945 417h1v1h-1zM947 417h1v1h-1zM949 417h1v1h-1zM951 417h1v1h-1zM953 417h1v1h-1zM955 417h1v1h-1zM957 417h1v1h-1zM959 167h1v1h-1zM959 169h1v1h-1zM959 217h1v1h-1zM959 267h1v1h-1zM959 317h1v1h-1zM959 367h1v1h-1zM959 414h1v1h-1zM959 416h1v1h-1zM959 417h1v1h-1zM959 418h1v1h-1zM959 420h1v1h-1zM959 467h1v1h-1zM959 517h1v1h-1zM959 567h1v1h-1zM959 617h1v1h-1zM959 665h1v1h-1zM959 667h1v1h-1zM961 417h1v1h-1zM963 417h1v1h-1zM965 417h1v1h-1zM967 417h1v1h-1zM969 417h1v1h-1zM971 417h1v1h-1zM973 417h1v1h-1zM975 417h1v1h-1zM977 417h1v1h-1zM979 167h1v1h-1zM979 169h1v1h-1zM979 217h1v1h-1zM979 267h1v1h-1zM979 317h1v1h-1zM979 367h1v1h-1zM979 414h1v1h-1zM979 416h1v1h-1zM979 417h1v1h-1zM979 418h1v1h-1zM979 420h1v1h-1zM979 467h1v1h-1zM979 517h1v1h-1zM979 567h1v1h-1zM979 617h1v1h-1zM979 665h1v1h-1zM979 667h1v1h-1zM981 417h1v1h-1zM983 417h1v1h-1zM985 417h1v1h-1zM987 417h1v1h-1zM989 417h1v1h-1zM991 417h1v1h-1zM993 417h1v1h-1zM995 417h1v1h-1zM997 417h1v1h-1zM999 167h1v1h-1zM999 169h1v1h-1zM999 217h1v1h-1zM999 267h1v1h-1zM999 317h1v1h-1zM999 367h1v1h-1zM999 414h1v1h-1zM999 416h1v1h-1zM999 417h1v1h-1zM999 418h1v1h-1zM999 420h1v1h-1zM999 467h1v1h-1zM999 517h1v1h-1zM999 567h1v1h-1zM999 617h1v1h-1zM999 665h1v1h-1zM999 667h1v1h-1zM1001 417h1v1h-1zM1003 417h1v1h-1zM1005 417h1v1h-1zM1007 417h1v1h-1zM1009 417h1v1h-1zM1011 417h1v1h-1zM1013 217h1v1h-1zM1013 267h1v1h-1zM1013 317h1v1h-1zM1013 367h1v1h-1zM1013 417h1v1h-1zM1013 467h1v1h-1zM1013 517h1v1h-1zM1013 567h1v1h-1zM1013 617h1v1h-1zM1015 217h1v1h-1zM1015 267h1v1h-1zM1015 317h1v1h-1zM1015 367h1v1h-1zM1015 417h1v1h-1zM1015 467h1v1h-1zM1015 517h1v1h-1zM1015 567h1v1h-1zM1015 617h1v1h-1zM1016 177h1v1h-1zM1016 187h1v1h-1zM1016 197h1v1h-1zM1016 207h1v1h-1zM1016 227h1v1h-1zM1016 237h1v1h-1zM1016 247h1v1h-1zM1016 257h1v1h-1zM1016 277h1v1h-1zM1016 287h1v1h-1zM1016 297h1v1h-1zM1016 307h1v1h-1zM1016 327h1v1h-1zM1016 337h1v1h-1zM1016 347h1v1h-1zM1016 357h1v1h-1zM1016 377h1v1h-1zM1016 387h1v1h-1zM1016 397h1v1h-1zM1016 407h1v1h-1zM1016 427h1v1h-1zM1016 437h1v1h-1zM1016 447h1v1h-1zM1016 457h1v1h-1zM1016 477h1v1h-1zM1016 487h1v1h-1zM1016 497h1v1h-1zM1016 507h1v1h-1zM1016 527h1v1h-1zM1016 537h1v1h-1zM1016 547h1v1h-1zM1016 557h1v1h-1zM1016 577h1v1h-1zM1016 587h1v1h-1zM1016 597h1v1h-1zM1016 607h1v1h-1zM1016 627h1v1h-1zM1016 637h1v1h-1zM1016 647h1v1h-1zM1016 657h1v1h-1zM1017 217h1v1h-1zM1017 267h1v1h-1zM1017 317h1v1h-1zM1017 367h1v1h-1zM1017 417h1v1h-1zM1017 467h1v1h-1zM1017 517h1v1h-1zM1017 567h1v1h-1zM1017 617h1v1h-1zM1018 177h1v1h-1zM1018 187h1v1h-1zM1018 197h1v1h-1zM1018 207h1v1h-1zM1018 227h1v1h-1zM1018 237h1v1h-1zM1018 247h1v1h-1zM1018 257h1v1h-1zM1018 277h1v1h-1zM1018 287h1v1h-1zM1018 297h1v1h-1zM1018 307h1v1h-1zM1018 327h1v1h-1zM1018 337h1v1h-1zM1018 347h1v1h-1zM1018 357h1v1h-1zM1018 377h1v1h-1zM1018 387h1v1h-1zM1018 397h1v1h-1zM1018 407h1v1h-1zM1018 427h1v1h-1zM1018 437h1v1h-1zM1018 447h1v1h-1zM1018 457h1v1h-1zM1018 477h1v1h-1zM1018 487h1v1h-1zM1018 497h1v1h-1zM1018 507h1v1h-1zM1018 527h1v1h-1zM1018 537h1v1h-1zM1018 547h1v1h-1zM1018 557h1v1h-1zM1018 577h1v1h-1zM1018 587h1v1h-1zM1018 597h1v1h-1zM1018 607h1v1h-1zM1018 627h1v1h-1zM1018 637h1v1h-1zM1018 647h1v1h-1zM1018 657h1v1h-1z" fill="#000"/>
<path d="M0 61.0H10.5L17.5 68.5L10.5 76.0H0z" fill="#00a000"/>
<path d="M0 61.5H10" stroke="#306030" stroke-width="1" fill="none"/>
<path d="M0 75.5H10" stroke="#ffffff" stroke-width="1" fill="none"/>
<path d="M11 75.5L17 69.0" stroke="#000" stroke-width="1" fill="none" shape-rendering="geometricPrecision"/>
<text x="6" y="74.0" font-family="Liberation Sans" font-weight="bold" font-size="15" fill="#fff" text-anchor="middle">4</text>
<path d="M-1 102.0H10.5L17.5 109.5L10.5 117.0H-1z" fill="#fff" stroke="#00d8e0" stroke-width="1.3"/>
<path d="M0 103.0H10" stroke="#505050" stroke-width="1" fill="none"/>
<text x="6" y="115.0" font-family="Liberation Sans" font-weight="bold" font-size="15" fill="#00d8e0" text-anchor="middle">2</text>
<path d="M-1 128.0H10.5L17.5 135.5L10.5 143.0H-1z" fill="#fff" stroke="#b070c0" stroke-width="1.3"/>
<path d="M0 129.0H10" stroke="#a040b0" stroke-width="1" fill="none"/>
<text x="6" y="141.0" font-family="Liberation Sans" font-weight="bold" font-size="15" fill="#9800a8" text-anchor="middle">3</text>
<path d="M0 359.0H10.5L17.5 366.5L10.5 374.0H0z" fill="#00a000"/>
<path d="M0 359.5H10" stroke="#306030" stroke-width="1" fill="none"/>
<path d="M0 373.5H10" stroke="#ffffff" stroke-width="1" fill="none"/>
<path d="M11 373.5L17 367.0" stroke="#000" stroke-width="1" fill="none" shape-rendering="geometricPrecision"/>
<text x="6" y="372.0" font-family="Liberation Sans" font-weight="bold" font-size="15" fill="#fff" text-anchor="middle">4</text>
<path d="M-1 514.0H10.5L17.5 521.5L10.5 529.0H-1z" fill="#fff" stroke="#00d8e0" stroke-width="1.3"/>
<path d="M0 515.0H10" stroke="#505050" stroke-width="1" fill="none"/>
<text x="6" y="527.0" font-family="Liberation Sans" font-weight="bold" font-size="15" fill="#00d8e0" text-anchor="middle">2</text>
<path d="M-1 612.0H10.5L17.5 619.5L10.5 627.0H-1z" fill="#fff" stroke="#b070c0" stroke-width="1.3"/>
<path d="M0 613.0H10" stroke="#a040b0" stroke-width="1" fill="none"/>
<text x="6" y="625.0" font-family="Liberation Sans" font-weight="bold" font-size="15" fill="#9800a8" text-anchor="middle">3</text>
<path d="M19 180.5L25 174H36V187H25z" fill="#ff9900"/>
<path d="M25 176h10v2.5h-3.6V186h-2.8V178.5H25z" fill="#fff"/>
<path d="M398 24H410V35L404 39L398 35z" fill="#ff9900"/>
<path d="M399.5 25.5h9v2.3h-3.2V34h-2.6V27.8h-3.2z" fill="#fff"/>
<path d="M136.5 167H148.5L142.5 173z" fill="#ff9900"/>
<path d="M513.5 17H525.5L519.5 23z" fill="#ff9900"/>
<path d="M1008 310.5L1014 305V309.5H1019V311.5H1014V316z" fill="#00a000"/>
<text x="0.5" y="14.5" font-family="Liberation Serif" font-size="19" fill="#000" font-weight="bold" stroke="#000" stroke-width="0.8" textLength="28.5" lengthAdjust="spacingAndGlyphs">Tek</text>
<text x="34" y="12.7" font-family="Liberation Sans" font-size="14.5" fill="#000" font-weight="normal" stroke="#000" stroke-width="0.6" textLength="46" lengthAdjust="spacing">PreVu</text>
<text x="586.5" y="12.7" font-family="Liberation Sans" font-size="14.5" fill="#000" font-weight="normal" stroke="#000" stroke-width="0.6" textLength="68" lengthAdjust="spacing">M 400µs</text>
<text x="19.5" y="162.6" font-family="Liberation Sans" font-size="14.5" fill="#000" font-weight="normal" stroke="#000" stroke-width="0.6" textLength="134" lengthAdjust="spacing">Zoom Factor: 2 X</text>
<text x="223.5" y="162.6" font-family="Liberation Sans" font-size="14.5" fill="#000" font-weight="normal" stroke="#000" stroke-width="0.6" textLength="185" lengthAdjust="spacing">Zoom Position: 1.21ms</text>
<rect x="18.5" y="670.5" width="555" height="20" rx="5.5" ry="5.5" fill="#fff" stroke="#000" stroke-width="1.1" shape-rendering="geometricPrecision"/>
<rect x="580.5" y="670.5" width="148" height="37" rx="5.5" ry="5.5" fill="#fff" stroke="#000" stroke-width="1.1" shape-rendering="geometricPrecision"/>
<rect x="735.5" y="670.5" width="106" height="37" rx="5.5" ry="5.5" fill="#fff" stroke="#000" stroke-width="1.1" shape-rendering="geometricPrecision"/>
<rect x="849.5" y="670.5" width="170" height="37" rx="5.5" ry="5.5" fill="#fff" stroke="#000" stroke-width="1.1" shape-rendering="geometricPrecision"/>
<rect x="163" y="673" width="25" height="15.5" rx="7.7" fill="#00d8e0" shape-rendering="geometricPrecision"/>
<text x="171.2" y="686" font-family="Liberation Sans" font-size="14.5" fill="#000" font-weight="normal" stroke="#000" stroke-width="0.6">2</text>
<text x="206" y="686" font-family="Liberation Sans" font-size="14.5" fill="#00d8e0" font-weight="normal" stroke="#00d8e0" stroke-width="0.6" textLength="49" lengthAdjust="spacing">20.0 V</text>
<rect x="302" y="673" width="25" height="15.5" rx="7.7" fill="#8c00a0" shape-rendering="geometricPrecision"/>
<text x="310.2" y="686" font-family="Liberation Sans" font-size="14.5" fill="#000" font-weight="normal" stroke="#000" stroke-width="0.6">3</text>
<text x="344.5" y="686" font-family="Liberation Sans" font-size="14.5" fill="#9c00b0" font-weight="normal" stroke="#9c00b0" stroke-width="0.6" textLength="49.5" lengthAdjust="spacing">5.00 V</text>
<rect x="441" y="673" width="25" height="15.5" rx="7.7" fill="#00a000" shape-rendering="geometricPrecision"/>
<text x="449.2" y="686" font-family="Liberation Sans" font-size="14.5" fill="#000" font-weight="normal" stroke="#000" stroke-width="0.6">4</text>
<path d="M476.5 675V683" stroke="#00a000" stroke-width="2" fill="none"/><path d="M472 681H481L476.5 686z" fill="#00a000" shape-rendering="geometricPrecision"/>
<text x="484" y="686" font-family="Liberation Sans" font-size="14.5" fill="#00a000" font-weight="normal" stroke="#00a000" stroke-width="0.6" textLength="54" lengthAdjust="spacing">500mA</text>
<text x="585.5" y="686" font-family="Liberation Sans" font-size="14.5" fill="#000" font-weight="normal" stroke="#000" stroke-width="0.6" textLength="64" lengthAdjust="spacing">Z 200µs</text>
<rect x="585" y="692" width="12" height="12" rx="2" fill="#ff9900"/>
<path d="M587 694h8v2h-3v7h-2v-7h-3z" fill="#fff"/>
<path d="M598 698H606M603 695L606 698L603 701" stroke="#ff9900" stroke-width="1.5" fill="none"/>
<path d="M608 694H619L613.5 700z" fill="#ff9900"/>
<text x="620.5" y="702" font-family="Liberation Sans" font-size="14.5" fill="#ff9900" font-weight="normal" stroke="#ff9900" stroke-width="0.6" textLength="84" lengthAdjust="spacing">460.000µs</text>
<text x="741.5" y="686" font-family="Liberation Sans" font-size="14.5" fill="#000" font-weight="normal" stroke="#000" stroke-width="0.6" textLength="69" lengthAdjust="spacing">250MS/s</text>
<text x="741.5" y="702" font-family="Liberation Sans" font-size="14.5" fill="#000" font-weight="normal" stroke="#000" stroke-width="0.6" textLength="79.5" lengthAdjust="spacing">1M points</text>
<rect x="880" y="673" width="25" height="15.5" rx="7.7" fill="#00a000" shape-rendering="geometricPrecision"/>
<text x="888.2" y="686" font-family="Liberation Sans" font-size="14.5" fill="#000" font-weight="normal" stroke="#000" stroke-width="0.6">4</text>
<path d="M918 686H922L925 676H929" fill="none" stroke="#000" stroke-width="2"/>
<text x="948" y="686" font-family="Liberation Sans" font-size="14.5" fill="#000" font-weight="normal" stroke="#000" stroke-width="0.6" textLength="66" lengthAdjust="spacing">−560mA</text>
</svg></body></html>
